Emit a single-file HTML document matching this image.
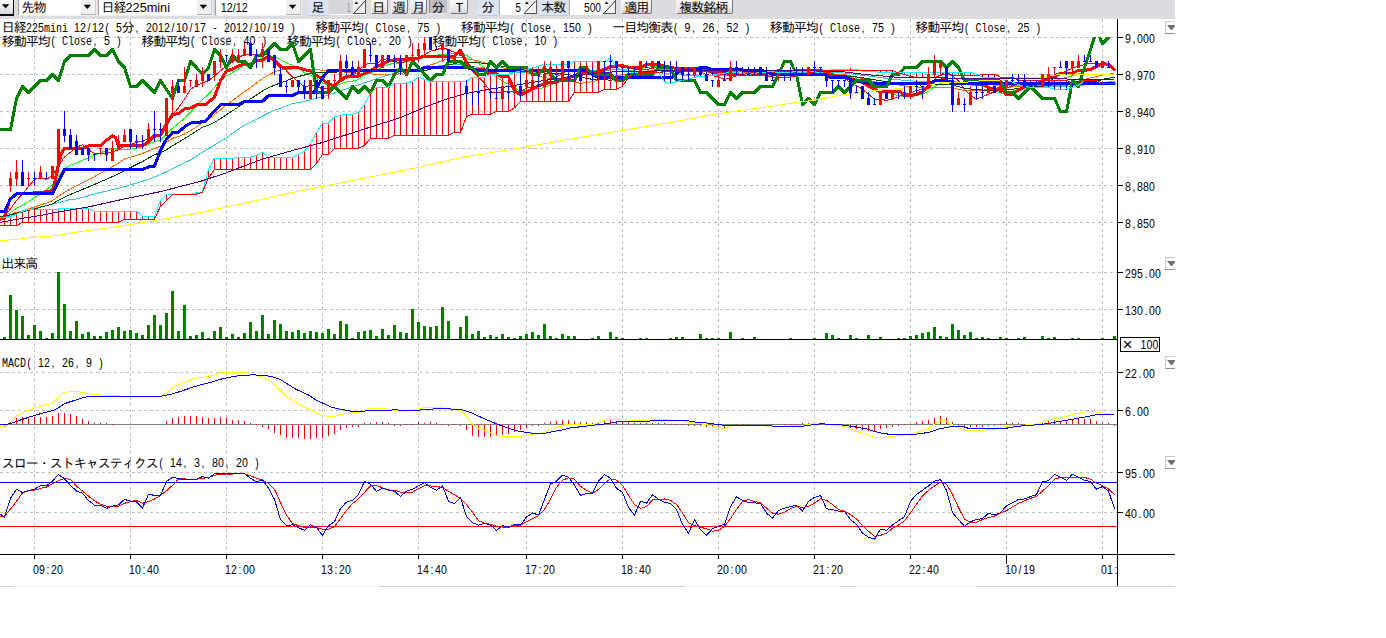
<!DOCTYPE html>
<html lang="ja"><head><meta charset="utf-8"><title>日経225mini チャート</title>
<style>html,body{margin:0;padding:0;background:#fff}body{width:1386px;height:638px;overflow:hidden}svg{display:block}</style>
</head><body>
<svg width="1386" height="638" viewBox="0 0 1386 638" shape-rendering="crispEdges">
<style>.la{font-family:"Liberation Mono",monospace;white-space:pre}.ls{font-family:"Liberation Sans",sans-serif}.cj{font-family:"Liberation Mono","IPAGothic","Noto Sans CJK JP",monospace}text{shape-rendering:auto}</style>
<rect x="0.0" y="0.0" width="1386.0" height="638.0" fill="#fff" />
<line x1="34.5" y1="19" x2="34.5" y2="554" stroke="#c0c0c0" stroke-width="1" stroke-dasharray="3 3"/>
<line x1="130.5" y1="19" x2="130.5" y2="554" stroke="#c0c0c0" stroke-width="1" stroke-dasharray="3 3"/>
<line x1="226.5" y1="19" x2="226.5" y2="554" stroke="#c0c0c0" stroke-width="1" stroke-dasharray="3 3"/>
<line x1="322.5" y1="19" x2="322.5" y2="554" stroke="#c0c0c0" stroke-width="1" stroke-dasharray="3 3"/>
<line x1="418.5" y1="19" x2="418.5" y2="554" stroke="#c0c0c0" stroke-width="1" stroke-dasharray="3 3"/>
<line x1="526.5" y1="19" x2="526.5" y2="554" stroke="#c0c0c0" stroke-width="1" stroke-dasharray="3 3"/>
<line x1="622.5" y1="19" x2="622.5" y2="554" stroke="#c0c0c0" stroke-width="1" stroke-dasharray="3 3"/>
<line x1="718.5" y1="19" x2="718.5" y2="554" stroke="#c0c0c0" stroke-width="1" stroke-dasharray="3 3"/>
<line x1="814.5" y1="19" x2="814.5" y2="554" stroke="#c0c0c0" stroke-width="1" stroke-dasharray="3 3"/>
<line x1="910.5" y1="19" x2="910.5" y2="554" stroke="#c0c0c0" stroke-width="1" stroke-dasharray="3 3"/>
<line x1="1006.5" y1="19" x2="1006.5" y2="554" stroke="#c0c0c0" stroke-width="1" stroke-dasharray="3 3"/>
<line x1="1102.5" y1="19" x2="1102.5" y2="554" stroke="#c0c0c0" stroke-width="1" stroke-dasharray="3 3"/>
<line x1="0" y1="37.5" x2="1117" y2="37.5" stroke="#c0c0c0" stroke-width="1" stroke-dasharray="3 3"/>
<line x1="0" y1="74.5" x2="1117" y2="74.5" stroke="#c0c0c0" stroke-width="1" stroke-dasharray="3 3"/>
<line x1="0" y1="111.5" x2="1117" y2="111.5" stroke="#c0c0c0" stroke-width="1" stroke-dasharray="3 3"/>
<line x1="0" y1="148.5" x2="1117" y2="148.5" stroke="#c0c0c0" stroke-width="1" stroke-dasharray="3 3"/>
<line x1="0" y1="185.5" x2="1117" y2="185.5" stroke="#c0c0c0" stroke-width="1" stroke-dasharray="3 3"/>
<line x1="0" y1="222.5" x2="1117" y2="222.5" stroke="#c0c0c0" stroke-width="1" stroke-dasharray="3 3"/>
<line x1="0" y1="272.5" x2="1117" y2="272.5" stroke="#c0c0c0" stroke-width="1" stroke-dasharray="3 3"/>
<line x1="0" y1="309.5" x2="1117" y2="309.5" stroke="#c0c0c0" stroke-width="1" stroke-dasharray="3 3"/>
<line x1="0" y1="372.5" x2="1117" y2="372.5" stroke="#c0c0c0" stroke-width="1" stroke-dasharray="3 3"/>
<line x1="0" y1="410.5" x2="1117" y2="410.5" stroke="#c0c0c0" stroke-width="1" stroke-dasharray="3 3"/>
<line x1="0" y1="472.5" x2="1117" y2="472.5" stroke="#c0c0c0" stroke-width="1" stroke-dasharray="3 3"/>
<line x1="0" y1="512.5" x2="1117" y2="512.5" stroke="#c0c0c0" stroke-width="1" stroke-dasharray="3 3"/>
<text x="1.7" y="32.2" font-size="13" letter-spacing="-1" fill="#000" class="cj">日経</text>
<text transform="translate(26.0,31.5) scale(0.88,1)" x="3.41 10.23 17.05" text-anchor="middle" font-size="12.0" fill="#000" class="ls">225</text>
<text transform="translate(44.0,31.5) scale(0.7692,1.0)" font-size="13" fill="#000" class="la">mini</text>
<text transform="translate(68.0,31.5) scale(0.88,1)" x="3.41 10.23 17.05 23.86 30.68 37.50 44.32 51.14 57.95" text-anchor="middle" font-size="12.0" fill="#000" class="ls"> 12/12( 5</text>
<text x="121.7" y="32.2" font-size="13" letter-spacing="-1" fill="#000" class="cj">分</text>
<text transform="translate(134.0,31.5) scale(0.88,1)" x="3.41 10.23 17.05 23.86 30.68 37.50 44.32 51.14 57.95 64.77 71.59 78.41 85.23 92.05 98.86 105.68 112.50 119.32 126.14 132.95 139.77 146.59 153.41 160.23 167.05 173.86 180.68" text-anchor="middle" font-size="12.0" fill="#000" class="ls">, 2012/10/17 - 2012/10/19 )</text>
<text x="315.2" y="32.2" font-size="13" letter-spacing="-1" fill="#000" class="cj">移動平均</text>
<text transform="translate(363.5,31.5) scale(0.88,1)" x="3.41 10.23" text-anchor="middle" font-size="12.0" fill="#000" class="ls">( </text>
<text transform="translate(375.5,31.5) scale(0.7692,1.0)" font-size="13" fill="#000" class="la">Close</text>
<text transform="translate(405.5,31.5) scale(0.88,1)" x="3.41 10.23 17.05 23.86 30.68 37.50" text-anchor="middle" font-size="12.0" fill="#000" class="ls">, 75 )</text>
<text x="460.7" y="32.2" font-size="13" letter-spacing="-1" fill="#000" class="cj">移動平均</text>
<text transform="translate(509.0,31.5) scale(0.88,1)" x="3.41 10.23" text-anchor="middle" font-size="12.0" fill="#000" class="ls">( </text>
<text transform="translate(521.0,31.5) scale(0.7692,1.0)" font-size="13" fill="#000" class="la">Close</text>
<text transform="translate(551.0,31.5) scale(0.88,1)" x="3.41 10.23 17.05 23.86 30.68 37.50 44.32" text-anchor="middle" font-size="12.0" fill="#000" class="ls">, 150 )</text>
<text x="612.2" y="32.2" font-size="13" letter-spacing="-1" fill="#000" class="cj">一目均衡表</text>
<text transform="translate(672.5,31.5) scale(0.88,1)" x="3.41 10.23 17.05 23.86 30.68 37.50 44.32 51.14 57.95 64.77 71.59 78.41 85.23" text-anchor="middle" font-size="12.0" fill="#000" class="ls">( 9, 26, 52 )</text>
<text x="769.7" y="32.2" font-size="13" letter-spacing="-1" fill="#000" class="cj">移動平均</text>
<text transform="translate(818.0,31.5) scale(0.88,1)" x="3.41 10.23" text-anchor="middle" font-size="12.0" fill="#000" class="ls">( </text>
<text transform="translate(830.0,31.5) scale(0.7692,1.0)" font-size="13" fill="#000" class="la">Close</text>
<text transform="translate(860.0,31.5) scale(0.88,1)" x="3.41 10.23 17.05 23.86 30.68 37.50" text-anchor="middle" font-size="12.0" fill="#000" class="ls">, 75 )</text>
<text x="915.2" y="32.2" font-size="13" letter-spacing="-1" fill="#000" class="cj">移動平均</text>
<text transform="translate(963.5,31.5) scale(0.88,1)" x="3.41 10.23" text-anchor="middle" font-size="12.0" fill="#000" class="ls">( </text>
<text transform="translate(975.5,31.5) scale(0.7692,1.0)" font-size="13" fill="#000" class="la">Close</text>
<text transform="translate(1005.5,31.5) scale(0.88,1)" x="3.41 10.23 17.05 23.86 30.68 37.50" text-anchor="middle" font-size="12.0" fill="#000" class="ls">, 25 )</text>
<text x="1.7" y="45.7" font-size="13" letter-spacing="-1" fill="#000" class="cj">移動平均</text>
<text transform="translate(50.0,45.0) scale(0.88,1)" x="3.41 10.23" text-anchor="middle" font-size="12.0" fill="#000" class="ls">( </text>
<text transform="translate(62.0,45.0) scale(0.7692,1.0)" font-size="13" fill="#000" class="la">Close</text>
<text transform="translate(92.0,45.0) scale(0.88,1)" x="3.41 10.23 17.05 23.86 30.68" text-anchor="middle" font-size="12.0" fill="#000" class="ls">, 5 )</text>
<text x="141.2" y="45.7" font-size="13" letter-spacing="-1" fill="#000" class="cj">移動平均</text>
<text transform="translate(189.5,45.0) scale(0.88,1)" x="3.41 10.23" text-anchor="middle" font-size="12.0" fill="#000" class="ls">( </text>
<text transform="translate(201.5,45.0) scale(0.7692,1.0)" font-size="13" fill="#000" class="la">Close</text>
<text transform="translate(231.5,45.0) scale(0.88,1)" x="3.41 10.23 17.05 23.86 30.68 37.50" text-anchor="middle" font-size="12.0" fill="#000" class="ls">, 40 )</text>
<text x="286.7" y="45.7" font-size="13" letter-spacing="-1" fill="#000" class="cj">移動平均</text>
<text transform="translate(335.0,45.0) scale(0.88,1)" x="3.41 10.23" text-anchor="middle" font-size="12.0" fill="#000" class="ls">( </text>
<text transform="translate(347.0,45.0) scale(0.7692,1.0)" font-size="13" fill="#000" class="la">Close</text>
<text transform="translate(377.0,45.0) scale(0.88,1)" x="3.41 10.23 17.05 23.86 30.68 37.50" text-anchor="middle" font-size="12.0" fill="#000" class="ls">, 20 )</text>
<text x="432.2" y="45.7" font-size="13" letter-spacing="-1" fill="#000" class="cj">移動平均</text>
<text transform="translate(480.5,45.0) scale(0.88,1)" x="3.41 10.23" text-anchor="middle" font-size="12.0" fill="#000" class="ls">( </text>
<text transform="translate(492.5,45.0) scale(0.7692,1.0)" font-size="13" fill="#000" class="la">Close</text>
<text transform="translate(522.5,45.0) scale(0.88,1)" x="3.41 10.23 17.05 23.86 30.68 37.50" text-anchor="middle" font-size="12.0" fill="#000" class="ls">, 10 )</text>
<text x="1.2" y="267.7" font-size="13" letter-spacing="-1" fill="#000" class="cj">出来高</text>
<text transform="translate(2.0,367.0) scale(0.7692,1.0)" font-size="13" fill="#000" class="la">MACD</text>
<text transform="translate(26.0,367.0) scale(0.88,1)" x="3.41 10.23 17.05 23.86 30.68 37.50 44.32 51.14 57.95 64.77 71.59 78.41 85.23" text-anchor="middle" font-size="12.0" fill="#000" class="ls">( 12, 26, 9 )</text>
<text x="1.7" y="467.7" font-size="13" letter-spacing="-1" fill="#000" class="cj">スロー・ストキャスティクス</text>
<text transform="translate(158.0,467.0) scale(0.88,1)" x="3.41 10.23 17.05 23.86 30.68 37.50 44.32 51.14 57.95 64.77 71.59 78.41 85.23 92.05 98.86 105.68 112.50" text-anchor="middle" font-size="12.0" fill="#000" class="ls">( 14, 3, 80, 20 )</text>
<defs><clipPath id="cm"><rect x="0" y="37" width="1117" height="214"/></clipPath></defs>
<g clip-path="url(#cm)">
<g shape-rendering="crispEdges" stroke-linejoin="round">
<polyline points="0.0,216.3 4.5,216.3 10.5,212.6 16.5,208.3 22.5,205.2 28.5,201.5 34.5,197.8 40.5,193.5 46.5,189.8 52.5,184.9 58.5,176.3 64.5,168.2 70.5,165.2 76.5,163.3 82.5,160.2 88.5,157.8 94.5,155.3 100.5,152.8 106.5,150.4 112.5,148.5 118.5,149.7 124.5,149.7 130.5,149.1 136.5,147.9 142.5,146.7 148.5,144.2 154.5,141.7 160.5,139.9 166.5,134.3 172.5,128.2 178.5,123.2 184.5,118.3 190.5,112.1 196.5,106.0 202.5,99.2 208.5,94.2 214.5,87.5 220.5,80.1 226.5,75.7 232.5,72.7 238.5,69.0 244.5,65.3 250.5,62.8 256.5,60.3 262.5,57.9 268.5,56.0 274.5,56.6 280.5,59.7 286.5,62.8 292.5,65.3 298.5,68.3 304.5,72.7 310.5,75.1 316.5,78.2 322.5,83.1 328.5,85.0 334.5,86.2 340.5,83.8 346.5,81.9 352.5,81.3 358.5,79.4 364.5,75.1 370.5,72.7 376.5,70.8 382.5,66.5 388.5,64.6 394.5,62.8 400.5,63.4 406.5,62.2 412.5,60.3 418.5,58.5 424.5,57.9 430.5,57.2 436.5,55.4 442.5,54.2 448.5,54.2 454.5,53.5 460.5,51.7 466.5,55.4 472.5,59.1 478.5,63.4 484.5,67.7 490.5,72.0 496.5,77.0 502.5,81.3 508.5,84.4 514.5,87.5 520.5,91.8 526.5,90.5 532.5,89.3 538.5,88.7 544.5,87.5 550.5,85.0 556.5,82.5 562.5,80.1 568.5,77.6 574.5,76.4 580.5,75.1 586.5,74.5 592.5,73.9 598.5,71.4 604.5,70.2 610.5,69.6 616.5,69.0 622.5,69.6 628.5,70.2 634.5,70.2 640.5,68.3 646.5,67.7 652.5,66.5 658.5,67.1 664.5,67.7 670.5,68.3 676.5,68.3 682.5,69.0 688.5,69.0 694.5,68.3 700.5,69.6 706.5,70.8 712.5,72.7 718.5,73.9 724.5,75.1 730.5,75.1 736.5,75.1 742.5,75.1 748.5,75.1 754.5,75.7 760.5,75.7 766.5,75.7 772.5,75.7 778.5,75.1 784.5,74.5 790.5,75.1 796.5,75.7 802.5,75.7 808.5,75.1 814.5,74.5 820.5,73.9 826.5,73.9 832.5,73.9 838.5,74.5 844.5,75.1 850.5,77.0 856.5,78.8 862.5,81.3 868.5,85.0 874.5,88.7 880.5,91.2 886.5,93.0 892.5,94.2 898.5,95.5 904.5,96.7 910.5,96.1 916.5,95.5 922.5,94.2 928.5,91.2 934.5,86.8 940.5,83.8 946.5,81.3 952.5,82.5 958.5,83.1 964.5,84.4 970.5,85.0 976.5,85.6 982.5,86.2 988.5,87.5 994.5,90.5 1000.5,93.0 1006.5,93.6 1012.5,91.2 1018.5,89.3 1024.5,87.5 1030.5,86.8 1036.5,86.2 1042.5,84.4 1048.5,83.1 1054.5,80.7 1060.5,78.8 1066.5,77.6 1072.5,75.7 1078.5,73.9 1084.5,71.4 1090.5,69.0 1096.5,67.1 1102.5,65.9 1108.5,65.3 1114.5,66.5" fill="none" stroke="#0f0" stroke-width="1" />
<polyline points="0.0,216.3 4.5,216.3 10.5,214.5 16.5,212.3 22.5,210.8 28.5,208.9 34.5,207.1 40.5,204.9 46.5,203.1 52.5,200.6 58.5,196.3 64.5,192.3 70.5,188.9 76.5,185.8 82.5,182.7 88.5,179.6 94.5,176.6 100.5,173.2 106.5,170.1 112.5,166.7 118.5,163.0 124.5,159.0 130.5,157.1 136.5,155.6 142.5,153.4 148.5,151.0 154.5,148.5 160.5,146.3 166.5,142.3 172.5,138.3 178.5,136.5 184.5,134.0 190.5,130.6 196.5,126.9 202.5,122.9 208.5,119.2 214.5,114.6 220.5,110.0 226.5,105.0 232.5,100.4 238.5,96.1 244.5,91.8 250.5,87.5 256.5,83.1 262.5,78.5 268.5,75.1 274.5,72.0 280.5,69.9 286.5,69.3 292.5,69.0 298.5,68.6 304.5,69.0 310.5,69.0 316.5,69.3 322.5,70.5 328.5,70.5 334.5,71.4 340.5,71.7 346.5,72.3 352.5,73.3 358.5,73.9 364.5,73.9 370.5,73.9 376.5,74.5 382.5,74.8 388.5,74.8 394.5,74.5 400.5,73.6 406.5,72.0 412.5,70.8 418.5,69.0 424.5,66.5 430.5,64.9 436.5,63.1 442.5,60.3 448.5,59.4 454.5,58.2 460.5,57.5 466.5,58.8 472.5,59.7 478.5,60.9 484.5,62.8 490.5,64.6 496.5,66.2 502.5,67.7 508.5,69.3 514.5,70.5 520.5,71.7 526.5,73.0 532.5,74.2 538.5,76.0 544.5,77.6 550.5,78.5 556.5,79.7 562.5,80.7 568.5,81.0 574.5,81.9 580.5,83.4 586.5,82.5 592.5,81.6 598.5,80.1 604.5,78.8 610.5,77.3 616.5,75.7 622.5,74.8 628.5,73.9 634.5,73.3 640.5,71.7 646.5,71.1 652.5,70.2 658.5,69.3 664.5,69.0 670.5,69.0 676.5,68.6 682.5,69.3 688.5,69.6 694.5,69.3 700.5,69.0 706.5,69.3 712.5,69.6 718.5,70.5 724.5,71.4 730.5,71.7 736.5,71.7 742.5,72.0 748.5,72.0 754.5,72.0 760.5,72.7 766.5,73.3 772.5,74.2 778.5,74.5 784.5,74.8 790.5,75.1 796.5,75.4 802.5,75.4 808.5,75.1 814.5,75.1 820.5,74.8 826.5,74.8 832.5,74.8 838.5,74.8 844.5,74.8 850.5,76.0 856.5,77.3 862.5,78.5 868.5,80.1 874.5,81.6 880.5,82.5 886.5,83.4 892.5,84.1 898.5,85.0 904.5,85.9 910.5,86.5 916.5,87.1 922.5,87.8 928.5,88.1 934.5,87.8 940.5,87.5 946.5,87.1 952.5,88.4 958.5,89.3 964.5,90.5 970.5,90.5 976.5,90.5 982.5,90.2 988.5,89.3 994.5,88.7 1000.5,88.4 1006.5,87.5 1012.5,86.8 1018.5,86.2 1024.5,85.9 1030.5,85.9 1036.5,85.9 1042.5,85.3 1048.5,85.3 1054.5,85.6 1060.5,85.9 1066.5,85.6 1072.5,83.4 1078.5,81.6 1084.5,79.4 1090.5,77.9 1096.5,76.7 1102.5,75.1 1108.5,74.2 1114.5,73.6" fill="none" stroke="#f60" stroke-width="1" />
<polyline points="0.0,217.8 4.3,217.3 13.0,215.5 22.5,210.8 34.5,208.3 50.5,204.7 68.5,200.0 76.5,199.0 100.4,192.5 124.5,186.7 148.5,179.5 160.5,174.4 172.6,168.7 190.5,160.0 200.0,153.7 226.4,137.8 238.5,129.0 244.5,125.4 250.5,122.3 256.5,119.4 262.5,116.0 268.5,113.0 274.5,110.3 280.5,108.1 286.5,105.8 292.5,103.6 298.5,102.6 304.5,101.5 310.5,99.8 316.5,98.1 322.5,96.7 328.5,94.9 334.5,93.0 340.5,90.8 346.5,88.7 352.5,86.8 358.5,85.0 364.5,82.8 370.5,80.7 376.5,78.8 382.5,76.7 388.5,75.0 394.5,73.3 400.5,71.7 406.5,70.6 412.5,69.9 418.5,68.8 424.5,67.7 430.5,66.9 436.5,66.2 442.5,65.4 448.5,64.9 454.5,64.8 460.5,64.6 466.5,65.6 472.5,66.5 478.5,67.4 484.5,68.3 490.5,69.3 496.5,70.3 502.5,71.3 508.5,72.0 514.5,72.5 520.5,72.7 526.5,72.5 532.5,72.5 538.5,72.5 544.5,72.0 550.5,71.7 556.5,71.4 562.5,70.5 568.5,70.2 574.5,70.0 580.5,70.5 586.5,70.6 592.5,70.6 598.5,70.5 604.5,70.8 610.5,71.0 616.5,71.0 622.5,71.3 628.5,71.6 634.5,71.9 640.5,71.7 646.5,72.0 652.5,72.2 658.5,72.7 664.5,73.3 670.5,73.7 676.5,74.2 682.5,75.0 688.5,75.3 694.5,75.6 700.5,76.2 706.5,75.9 712.5,75.6 718.5,75.3 724.5,75.1 730.5,74.5 736.5,73.7 742.5,73.4 748.5,73.0 754.5,72.7 760.5,72.2 766.5,72.2 772.5,72.2 778.5,71.9 784.5,71.9 790.5,72.0 796.5,72.0 802.5,72.3 808.5,72.3 814.5,72.2 820.5,71.9 826.5,72.0 832.5,72.2 838.5,72.7 844.5,73.1 850.5,73.9 856.5,74.5 862.5,75.3 868.5,76.0 874.5,76.8 880.5,77.6 886.5,78.4 892.5,79.1 898.5,79.7 904.5,80.4 910.5,80.8 916.5,81.3 922.5,81.6 928.5,81.6 934.5,81.4 940.5,81.1 946.5,81.0 952.5,81.6 958.5,82.1 964.5,82.7 970.5,83.3 976.5,83.9 982.5,84.4 988.5,84.7 994.5,85.1 1000.5,85.4 1006.5,85.4 1012.5,85.4 1018.5,85.6 1024.5,85.9 1030.5,86.2 1036.5,86.5 1042.5,86.5 1048.5,86.7 1054.5,86.7 1060.5,86.7 1066.5,86.4 1072.5,85.9 1078.5,85.4 1084.5,85.0 1090.5,84.2 1096.5,83.6 1102.5,82.7 1108.5,81.7 1114.5,81.1" fill="none" stroke="#3cc" stroke-width="1" />
<polyline points="0.0,216.3 4.5,216.3 10.5,208.9 16.5,200.3 22.5,194.1 28.5,186.7 34.5,179.3 40.5,178.1 46.5,179.3 52.5,175.6 58.5,165.8 64.5,157.1 70.5,152.2 76.5,147.3 82.5,144.8 88.5,149.7 94.5,153.4 100.5,153.4 106.5,153.4 112.5,152.2 118.5,149.7 124.5,146.0 130.5,144.8 136.5,142.3 142.5,141.1 148.5,138.6 154.5,137.4 160.5,134.9 166.5,126.3 172.5,115.2 178.5,107.8 184.5,99.2 190.5,89.3 196.5,85.6 202.5,83.1 208.5,80.7 214.5,75.7 220.5,70.8 226.5,65.9 232.5,62.2 238.5,57.2 244.5,54.8 250.5,54.8 256.5,54.8 262.5,53.5 268.5,54.8 274.5,58.5 280.5,64.6 286.5,70.8 292.5,77.0 298.5,81.9 304.5,86.8 310.5,85.6 316.5,85.6 322.5,89.3 328.5,88.1 334.5,85.6 340.5,81.9 346.5,78.2 352.5,73.3 358.5,70.8 364.5,64.6 370.5,63.4 376.5,63.4 382.5,59.7 388.5,58.5 394.5,60.9 400.5,63.4 406.5,60.9 412.5,60.9 418.5,58.5 424.5,54.8 430.5,51.1 436.5,49.8 442.5,47.4 448.5,49.8 454.5,52.3 460.5,52.3 466.5,60.9 472.5,70.8 478.5,77.0 484.5,83.1 490.5,91.8 496.5,93.0 502.5,91.8 508.5,91.8 514.5,91.8 520.5,91.8 526.5,88.1 532.5,86.8 538.5,85.6 544.5,83.1 550.5,78.2 556.5,77.0 562.5,73.3 568.5,69.6 574.5,69.6 580.5,72.0 586.5,72.0 592.5,74.5 598.5,73.3 604.5,70.8 610.5,67.1 616.5,65.9 622.5,64.6 628.5,67.1 634.5,69.6 640.5,69.6 646.5,69.6 652.5,68.3 658.5,67.1 664.5,65.9 670.5,67.1 676.5,67.1 682.5,69.6 688.5,70.8 694.5,70.8 700.5,72.0 706.5,74.5 712.5,75.7 718.5,77.0 724.5,79.4 730.5,78.2 736.5,75.7 742.5,74.5 748.5,73.3 754.5,72.0 760.5,73.3 766.5,75.7 772.5,77.0 778.5,77.0 784.5,77.0 790.5,77.0 796.5,75.7 802.5,74.5 808.5,73.3 814.5,72.0 820.5,70.8 826.5,72.0 832.5,73.3 838.5,75.7 844.5,78.2 850.5,83.1 856.5,85.6 862.5,89.3 868.5,94.2 874.5,99.2 880.5,99.2 886.5,100.4 892.5,99.2 898.5,96.7 904.5,94.2 910.5,93.0 916.5,90.5 922.5,89.3 928.5,85.6 934.5,79.4 940.5,74.5 946.5,72.0 952.5,75.7 958.5,80.7 964.5,89.3 970.5,95.5 976.5,99.2 982.5,96.7 988.5,94.2 994.5,91.8 1000.5,90.5 1006.5,88.1 1012.5,85.6 1018.5,84.4 1024.5,83.1 1030.5,83.1 1036.5,84.4 1042.5,83.1 1048.5,81.9 1054.5,78.2 1060.5,74.5 1066.5,70.8 1072.5,68.3 1078.5,65.9 1084.5,64.6 1090.5,63.4 1096.5,63.4 1102.5,63.4 1108.5,64.6 1114.5,68.3" fill="none" stroke="#f00" stroke-width="1" />
<polyline points="0.0,216.3 4.5,216.3 10.5,214.9 16.5,213.1 22.5,211.9 28.5,210.4 34.5,208.9 40.5,207.2 46.5,205.7 52.5,203.8 58.5,200.3 64.5,197.1 70.5,194.4 76.5,191.9 82.5,189.4 88.5,187.0 94.5,184.5 100.5,181.8 106.5,179.3 112.5,176.6 118.5,173.7 124.5,170.5 130.5,167.5 136.5,164.5 142.5,161.6 148.5,158.1 154.5,154.7 160.5,152.7 166.5,149.7 172.5,145.8 178.5,142.3 184.5,138.6 190.5,134.9 196.5,131.0 202.5,127.3 208.5,125.3 214.5,122.4 220.5,118.7 226.5,114.7 232.5,110.8 238.5,106.8 244.5,102.6 250.5,98.9 256.5,95.0 262.5,91.0 268.5,87.8 274.5,85.1 280.5,82.9 286.5,80.7 292.5,78.2 298.5,76.5 304.5,75.0 310.5,73.0 316.5,72.5 322.5,73.0 328.5,72.5 334.5,72.3 340.5,71.5 346.5,71.0 352.5,71.0 358.5,70.6 364.5,70.1 370.5,70.1 376.5,70.6 382.5,70.6 388.5,70.8 394.5,71.3 400.5,71.8 406.5,71.8 412.5,72.0 418.5,71.5 424.5,70.6 430.5,69.1 436.5,67.6 442.5,66.1 448.5,65.1 454.5,63.6 460.5,62.4 466.5,62.7 472.5,62.4 478.5,62.9 484.5,63.2 490.5,64.4 496.5,65.6 502.5,66.1 508.5,67.1 514.5,68.6 520.5,70.1 526.5,70.6 532.5,71.5 538.5,72.5 544.5,73.0 550.5,73.0 556.5,73.8 562.5,74.0 568.5,74.7 574.5,76.0 580.5,77.2 586.5,78.2 592.5,79.4 598.5,79.4 604.5,79.7 610.5,80.2 616.5,79.2 622.5,78.2 628.5,77.5 634.5,77.0 640.5,75.7 646.5,74.5 652.5,73.5 658.5,72.5 664.5,71.8 670.5,70.8 676.5,70.3 682.5,70.1 688.5,69.6 694.5,69.3 700.5,69.6 706.5,69.8 712.5,70.6 718.5,71.0 724.5,71.3 730.5,70.8 736.5,70.6 742.5,70.6 748.5,71.0 754.5,71.5 760.5,72.0 766.5,72.5 772.5,73.0 778.5,73.0 784.5,73.0 790.5,73.5 796.5,73.8 802.5,74.3 808.5,74.3 814.5,74.3 820.5,74.3 826.5,74.7 832.5,75.0 838.5,75.2 844.5,75.7 850.5,76.5 856.5,77.0 862.5,77.7 868.5,78.7 874.5,79.7 880.5,80.7 886.5,81.9 892.5,82.6 898.5,83.4 904.5,84.1 910.5,84.6 916.5,84.9 922.5,85.1 928.5,85.1 934.5,84.6 940.5,84.1 946.5,84.1 952.5,85.4 958.5,86.6 964.5,88.1 970.5,89.1 976.5,89.5 982.5,90.0 988.5,90.3 994.5,90.8 1000.5,90.5 1006.5,90.0 1012.5,89.3 1018.5,88.3 1024.5,87.6 1030.5,87.3 1036.5,86.8 1042.5,86.1 1048.5,85.4 1054.5,84.4 1060.5,83.6 1066.5,82.9 1072.5,81.9 1078.5,81.4 1084.5,81.4 1090.5,81.4 1096.5,81.2 1102.5,79.4 1108.5,78.2 1114.5,77.2" fill="none" stroke="#004800" stroke-width="1" />
</g>
<g shape-rendering="crispEdges" stroke-linejoin="round" stroke-linecap="butt">
<polyline points="0.0,219.0 4.0,218.5 10.0,199.0 16.0,194.0 42.0,192.5 52.5,190.5 55.0,181.0 58.5,163.5 62.0,152.0 64.5,148.3 82.5,148.3 88.5,145.9 100.5,145.9 106.5,140.4 112.5,135.8 115.4,137.5 118.5,145.9 142.6,145.9 148.5,141.8 154.5,135.4 160.5,135.4 166.5,123.8 172.6,114.4 178.5,113.7 184.7,108.9 190.5,107.9 196.2,105.0 200.0,104.3 205.8,104.3 208.6,102.1 214.4,97.1 220.5,80.5 226.4,71.1 232.5,69.0 238.5,66.1 244.4,63.9 250.5,64.6 256.4,61.0 262.5,60.3 268.4,56.0 274.5,61.0 280.5,66.8 286.4,67.8 298.6,67.8 304.5,69.7 310.5,71.1 316.4,75.5 322.5,79.1 328.4,84.1 334.5,85.6 340.5,80.5 346.5,76.2 358.4,76.2 364.5,73.3 370.4,71.1 376.5,66.8 382.5,63.9 388.5,61.0 394.5,59.6 400.0,59.6 418.5,58.1 424.5,56.0 454.5,56.0 460.5,50.2 466.5,62.5 472.4,69.7 484.4,69.7 488.0,73.3 496.5,74.0 502.5,76.9 508.5,76.9 514.4,90.6 520.5,95.0 526.4,92.0 532.5,89.2 538.5,85.6 544.4,84.1 550.5,82.0 556.4,82.0 562.5,79.8 568.5,77.6 574.5,76.2 580.5,73.8 591.4,73.8 598.6,70.9 604.5,69.5 610.5,66.6 616.5,66.2 622.5,65.5 628.5,67.3 640.5,67.3 646.5,64.4 658.5,64.4 664.5,66.2 670.5,67.3 676.5,68.4 697.0,68.4 700.0,70.2 706.5,70.6 712.5,72.4 724.5,73.4 730.3,74.9 765.0,74.9 769.3,71.6 778.6,70.9 784.5,71.6 810.0,70.2 820.5,70.2 826.5,73.0 832.5,77.0 844.5,77.6 850.5,79.0 856.5,80.5 862.5,82.3 868.5,86.0 874.5,89.0 878.6,91.3 900.0,91.6 904.5,95.4 910.5,95.4 916.5,94.6 922.5,91.7 928.5,86.7 934.5,80.9 944.7,79.5 952.5,83.4 982.5,84.2 988.5,87.4 994.5,89.9 1000.5,88.0 1006.5,94.5 1012.5,94.0 1018.5,90.0 1024.5,87.0 1030.5,85.5 1036.5,84.0 1042.5,81.0 1048.5,78.5 1054.5,76.0 1060.5,73.3 1072.5,73.3 1078.5,70.3 1084.5,70.3 1090.5,69.4 1096.5,66.4 1102.5,63.8 1108.5,64.2 1114.5,69.8" fill="none" stroke="#f00" stroke-width="3" />
<rect x="-1.0" y="219.0" width="3.0" height="1.0" fill="#f00" />
<rect x="0.0" y="218.0" width="1.0" height="3.0" fill="#f00" />
<rect x="3.0" y="218.0" width="3.0" height="1.0" fill="#f00" />
<rect x="4.0" y="217.0" width="1.0" height="3.0" fill="#f00" />
<rect x="9.0" y="199.0" width="3.0" height="1.0" fill="#f00" />
<rect x="10.0" y="198.0" width="1.0" height="3.0" fill="#f00" />
<rect x="15.0" y="194.0" width="3.0" height="1.0" fill="#f00" />
<rect x="16.0" y="193.0" width="1.0" height="3.0" fill="#f00" />
<rect x="41.0" y="192.0" width="3.0" height="1.0" fill="#f00" />
<rect x="42.0" y="191.0" width="1.0" height="3.0" fill="#f00" />
<rect x="51.0" y="190.0" width="3.0" height="1.0" fill="#f00" />
<rect x="52.0" y="189.0" width="1.0" height="3.0" fill="#f00" />
<rect x="54.0" y="181.0" width="3.0" height="1.0" fill="#f00" />
<rect x="55.0" y="180.0" width="1.0" height="3.0" fill="#f00" />
<rect x="57.0" y="163.0" width="3.0" height="1.0" fill="#f00" />
<rect x="58.0" y="162.0" width="1.0" height="3.0" fill="#f00" />
<rect x="61.0" y="152.0" width="3.0" height="1.0" fill="#f00" />
<rect x="62.0" y="151.0" width="1.0" height="3.0" fill="#f00" />
<rect x="63.0" y="148.0" width="3.0" height="1.0" fill="#f00" />
<rect x="64.0" y="147.0" width="1.0" height="3.0" fill="#f00" />
<rect x="81.0" y="148.0" width="3.0" height="1.0" fill="#f00" />
<rect x="82.0" y="147.0" width="1.0" height="3.0" fill="#f00" />
<rect x="87.0" y="145.0" width="3.0" height="1.0" fill="#f00" />
<rect x="88.0" y="144.0" width="1.0" height="3.0" fill="#f00" />
<rect x="99.0" y="145.0" width="3.0" height="1.0" fill="#f00" />
<rect x="100.0" y="144.0" width="1.0" height="3.0" fill="#f00" />
<rect x="105.0" y="140.0" width="3.0" height="1.0" fill="#f00" />
<rect x="106.0" y="139.0" width="1.0" height="3.0" fill="#f00" />
<rect x="111.0" y="135.0" width="3.0" height="1.0" fill="#f00" />
<rect x="112.0" y="134.0" width="1.0" height="3.0" fill="#f00" />
<rect x="114.0" y="137.0" width="3.0" height="1.0" fill="#f00" />
<rect x="115.0" y="136.0" width="1.0" height="3.0" fill="#f00" />
<rect x="117.0" y="145.0" width="3.0" height="1.0" fill="#f00" />
<rect x="118.0" y="144.0" width="1.0" height="3.0" fill="#f00" />
<rect x="141.0" y="145.0" width="3.0" height="1.0" fill="#f00" />
<rect x="142.0" y="144.0" width="1.0" height="3.0" fill="#f00" />
<rect x="147.0" y="141.0" width="3.0" height="1.0" fill="#f00" />
<rect x="148.0" y="140.0" width="1.0" height="3.0" fill="#f00" />
<rect x="153.0" y="135.0" width="3.0" height="1.0" fill="#f00" />
<rect x="154.0" y="134.0" width="1.0" height="3.0" fill="#f00" />
<rect x="159.0" y="135.0" width="3.0" height="1.0" fill="#f00" />
<rect x="160.0" y="134.0" width="1.0" height="3.0" fill="#f00" />
<rect x="165.0" y="123.0" width="3.0" height="1.0" fill="#f00" />
<rect x="166.0" y="122.0" width="1.0" height="3.0" fill="#f00" />
<rect x="171.0" y="114.0" width="3.0" height="1.0" fill="#f00" />
<rect x="172.0" y="113.0" width="1.0" height="3.0" fill="#f00" />
<rect x="177.0" y="113.0" width="3.0" height="1.0" fill="#f00" />
<rect x="178.0" y="112.0" width="1.0" height="3.0" fill="#f00" />
<rect x="183.0" y="108.0" width="3.0" height="1.0" fill="#f00" />
<rect x="184.0" y="107.0" width="1.0" height="3.0" fill="#f00" />
<rect x="189.0" y="107.0" width="3.0" height="1.0" fill="#f00" />
<rect x="190.0" y="106.0" width="1.0" height="3.0" fill="#f00" />
<rect x="195.0" y="105.0" width="3.0" height="1.0" fill="#f00" />
<rect x="196.0" y="104.0" width="1.0" height="3.0" fill="#f00" />
<rect x="199.0" y="104.0" width="3.0" height="1.0" fill="#f00" />
<rect x="200.0" y="103.0" width="1.0" height="3.0" fill="#f00" />
<rect x="204.0" y="104.0" width="3.0" height="1.0" fill="#f00" />
<rect x="205.0" y="103.0" width="1.0" height="3.0" fill="#f00" />
<rect x="207.0" y="102.0" width="3.0" height="1.0" fill="#f00" />
<rect x="208.0" y="101.0" width="1.0" height="3.0" fill="#f00" />
<rect x="213.0" y="97.0" width="3.0" height="1.0" fill="#f00" />
<rect x="214.0" y="96.0" width="1.0" height="3.0" fill="#f00" />
<rect x="219.0" y="80.0" width="3.0" height="1.0" fill="#f00" />
<rect x="220.0" y="79.0" width="1.0" height="3.0" fill="#f00" />
<rect x="225.0" y="71.0" width="3.0" height="1.0" fill="#f00" />
<rect x="226.0" y="70.0" width="1.0" height="3.0" fill="#f00" />
<rect x="231.0" y="69.0" width="3.0" height="1.0" fill="#f00" />
<rect x="232.0" y="68.0" width="1.0" height="3.0" fill="#f00" />
<rect x="237.0" y="66.0" width="3.0" height="1.0" fill="#f00" />
<rect x="238.0" y="65.0" width="1.0" height="3.0" fill="#f00" />
<rect x="243.0" y="63.0" width="3.0" height="1.0" fill="#f00" />
<rect x="244.0" y="62.0" width="1.0" height="3.0" fill="#f00" />
<rect x="249.0" y="64.0" width="3.0" height="1.0" fill="#f00" />
<rect x="250.0" y="63.0" width="1.0" height="3.0" fill="#f00" />
<rect x="255.0" y="61.0" width="3.0" height="1.0" fill="#f00" />
<rect x="256.0" y="60.0" width="1.0" height="3.0" fill="#f00" />
<rect x="261.0" y="60.0" width="3.0" height="1.0" fill="#f00" />
<rect x="262.0" y="59.0" width="1.0" height="3.0" fill="#f00" />
<rect x="267.0" y="56.0" width="3.0" height="1.0" fill="#f00" />
<rect x="268.0" y="55.0" width="1.0" height="3.0" fill="#f00" />
<rect x="273.0" y="61.0" width="3.0" height="1.0" fill="#f00" />
<rect x="274.0" y="60.0" width="1.0" height="3.0" fill="#f00" />
<rect x="279.0" y="66.0" width="3.0" height="1.0" fill="#f00" />
<rect x="280.0" y="65.0" width="1.0" height="3.0" fill="#f00" />
<rect x="285.0" y="67.0" width="3.0" height="1.0" fill="#f00" />
<rect x="286.0" y="66.0" width="1.0" height="3.0" fill="#f00" />
<rect x="297.0" y="67.0" width="3.0" height="1.0" fill="#f00" />
<rect x="298.0" y="66.0" width="1.0" height="3.0" fill="#f00" />
<rect x="303.0" y="69.0" width="3.0" height="1.0" fill="#f00" />
<rect x="304.0" y="68.0" width="1.0" height="3.0" fill="#f00" />
<rect x="309.0" y="71.0" width="3.0" height="1.0" fill="#f00" />
<rect x="310.0" y="70.0" width="1.0" height="3.0" fill="#f00" />
<rect x="315.0" y="75.0" width="3.0" height="1.0" fill="#f00" />
<rect x="316.0" y="74.0" width="1.0" height="3.0" fill="#f00" />
<rect x="321.0" y="79.0" width="3.0" height="1.0" fill="#f00" />
<rect x="322.0" y="78.0" width="1.0" height="3.0" fill="#f00" />
<rect x="327.0" y="84.0" width="3.0" height="1.0" fill="#f00" />
<rect x="328.0" y="83.0" width="1.0" height="3.0" fill="#f00" />
<rect x="333.0" y="85.0" width="3.0" height="1.0" fill="#f00" />
<rect x="334.0" y="84.0" width="1.0" height="3.0" fill="#f00" />
<rect x="339.0" y="80.0" width="3.0" height="1.0" fill="#f00" />
<rect x="340.0" y="79.0" width="1.0" height="3.0" fill="#f00" />
<rect x="345.0" y="76.0" width="3.0" height="1.0" fill="#f00" />
<rect x="346.0" y="75.0" width="1.0" height="3.0" fill="#f00" />
<rect x="357.0" y="76.0" width="3.0" height="1.0" fill="#f00" />
<rect x="358.0" y="75.0" width="1.0" height="3.0" fill="#f00" />
<rect x="363.0" y="73.0" width="3.0" height="1.0" fill="#f00" />
<rect x="364.0" y="72.0" width="1.0" height="3.0" fill="#f00" />
<rect x="369.0" y="71.0" width="3.0" height="1.0" fill="#f00" />
<rect x="370.0" y="70.0" width="1.0" height="3.0" fill="#f00" />
<rect x="375.0" y="66.0" width="3.0" height="1.0" fill="#f00" />
<rect x="376.0" y="65.0" width="1.0" height="3.0" fill="#f00" />
<rect x="381.0" y="63.0" width="3.0" height="1.0" fill="#f00" />
<rect x="382.0" y="62.0" width="1.0" height="3.0" fill="#f00" />
<rect x="387.0" y="61.0" width="3.0" height="1.0" fill="#f00" />
<rect x="388.0" y="60.0" width="1.0" height="3.0" fill="#f00" />
<rect x="393.0" y="59.0" width="3.0" height="1.0" fill="#f00" />
<rect x="394.0" y="58.0" width="1.0" height="3.0" fill="#f00" />
<rect x="399.0" y="59.0" width="3.0" height="1.0" fill="#f00" />
<rect x="400.0" y="58.0" width="1.0" height="3.0" fill="#f00" />
<rect x="417.0" y="58.0" width="3.0" height="1.0" fill="#f00" />
<rect x="418.0" y="57.0" width="1.0" height="3.0" fill="#f00" />
<rect x="423.0" y="56.0" width="3.0" height="1.0" fill="#f00" />
<rect x="424.0" y="55.0" width="1.0" height="3.0" fill="#f00" />
<rect x="453.0" y="56.0" width="3.0" height="1.0" fill="#f00" />
<rect x="454.0" y="55.0" width="1.0" height="3.0" fill="#f00" />
<rect x="459.0" y="50.0" width="3.0" height="1.0" fill="#f00" />
<rect x="460.0" y="49.0" width="1.0" height="3.0" fill="#f00" />
<rect x="465.0" y="62.0" width="3.0" height="1.0" fill="#f00" />
<rect x="466.0" y="61.0" width="1.0" height="3.0" fill="#f00" />
<rect x="471.0" y="69.0" width="3.0" height="1.0" fill="#f00" />
<rect x="472.0" y="68.0" width="1.0" height="3.0" fill="#f00" />
<rect x="483.0" y="69.0" width="3.0" height="1.0" fill="#f00" />
<rect x="484.0" y="68.0" width="1.0" height="3.0" fill="#f00" />
<rect x="487.0" y="73.0" width="3.0" height="1.0" fill="#f00" />
<rect x="488.0" y="72.0" width="1.0" height="3.0" fill="#f00" />
<rect x="495.0" y="74.0" width="3.0" height="1.0" fill="#f00" />
<rect x="496.0" y="73.0" width="1.0" height="3.0" fill="#f00" />
<rect x="501.0" y="76.0" width="3.0" height="1.0" fill="#f00" />
<rect x="502.0" y="75.0" width="1.0" height="3.0" fill="#f00" />
<rect x="507.0" y="76.0" width="3.0" height="1.0" fill="#f00" />
<rect x="508.0" y="75.0" width="1.0" height="3.0" fill="#f00" />
<rect x="513.0" y="90.0" width="3.0" height="1.0" fill="#f00" />
<rect x="514.0" y="89.0" width="1.0" height="3.0" fill="#f00" />
<rect x="519.0" y="95.0" width="3.0" height="1.0" fill="#f00" />
<rect x="520.0" y="94.0" width="1.0" height="3.0" fill="#f00" />
<rect x="525.0" y="92.0" width="3.0" height="1.0" fill="#f00" />
<rect x="526.0" y="91.0" width="1.0" height="3.0" fill="#f00" />
<rect x="531.0" y="89.0" width="3.0" height="1.0" fill="#f00" />
<rect x="532.0" y="88.0" width="1.0" height="3.0" fill="#f00" />
<rect x="537.0" y="85.0" width="3.0" height="1.0" fill="#f00" />
<rect x="538.0" y="84.0" width="1.0" height="3.0" fill="#f00" />
<rect x="543.0" y="84.0" width="3.0" height="1.0" fill="#f00" />
<rect x="544.0" y="83.0" width="1.0" height="3.0" fill="#f00" />
<rect x="549.0" y="82.0" width="3.0" height="1.0" fill="#f00" />
<rect x="550.0" y="81.0" width="1.0" height="3.0" fill="#f00" />
<rect x="555.0" y="82.0" width="3.0" height="1.0" fill="#f00" />
<rect x="556.0" y="81.0" width="1.0" height="3.0" fill="#f00" />
<rect x="561.0" y="79.0" width="3.0" height="1.0" fill="#f00" />
<rect x="562.0" y="78.0" width="1.0" height="3.0" fill="#f00" />
<rect x="567.0" y="77.0" width="3.0" height="1.0" fill="#f00" />
<rect x="568.0" y="76.0" width="1.0" height="3.0" fill="#f00" />
<rect x="573.0" y="76.0" width="3.0" height="1.0" fill="#f00" />
<rect x="574.0" y="75.0" width="1.0" height="3.0" fill="#f00" />
<rect x="579.0" y="73.0" width="3.0" height="1.0" fill="#f00" />
<rect x="580.0" y="72.0" width="1.0" height="3.0" fill="#f00" />
<rect x="590.0" y="73.0" width="3.0" height="1.0" fill="#f00" />
<rect x="591.0" y="72.0" width="1.0" height="3.0" fill="#f00" />
<rect x="597.0" y="70.0" width="3.0" height="1.0" fill="#f00" />
<rect x="598.0" y="69.0" width="1.0" height="3.0" fill="#f00" />
<rect x="603.0" y="69.0" width="3.0" height="1.0" fill="#f00" />
<rect x="604.0" y="68.0" width="1.0" height="3.0" fill="#f00" />
<rect x="609.0" y="66.0" width="3.0" height="1.0" fill="#f00" />
<rect x="610.0" y="65.0" width="1.0" height="3.0" fill="#f00" />
<rect x="615.0" y="66.0" width="3.0" height="1.0" fill="#f00" />
<rect x="616.0" y="65.0" width="1.0" height="3.0" fill="#f00" />
<rect x="621.0" y="65.0" width="3.0" height="1.0" fill="#f00" />
<rect x="622.0" y="64.0" width="1.0" height="3.0" fill="#f00" />
<rect x="627.0" y="67.0" width="3.0" height="1.0" fill="#f00" />
<rect x="628.0" y="66.0" width="1.0" height="3.0" fill="#f00" />
<rect x="639.0" y="67.0" width="3.0" height="1.0" fill="#f00" />
<rect x="640.0" y="66.0" width="1.0" height="3.0" fill="#f00" />
<rect x="645.0" y="64.0" width="3.0" height="1.0" fill="#f00" />
<rect x="646.0" y="63.0" width="1.0" height="3.0" fill="#f00" />
<rect x="657.0" y="64.0" width="3.0" height="1.0" fill="#f00" />
<rect x="658.0" y="63.0" width="1.0" height="3.0" fill="#f00" />
<rect x="663.0" y="66.0" width="3.0" height="1.0" fill="#f00" />
<rect x="664.0" y="65.0" width="1.0" height="3.0" fill="#f00" />
<rect x="669.0" y="67.0" width="3.0" height="1.0" fill="#f00" />
<rect x="670.0" y="66.0" width="1.0" height="3.0" fill="#f00" />
<rect x="675.0" y="68.0" width="3.0" height="1.0" fill="#f00" />
<rect x="676.0" y="67.0" width="1.0" height="3.0" fill="#f00" />
<rect x="696.0" y="68.0" width="3.0" height="1.0" fill="#f00" />
<rect x="697.0" y="67.0" width="1.0" height="3.0" fill="#f00" />
<rect x="699.0" y="70.0" width="3.0" height="1.0" fill="#f00" />
<rect x="700.0" y="69.0" width="1.0" height="3.0" fill="#f00" />
<rect x="705.0" y="70.0" width="3.0" height="1.0" fill="#f00" />
<rect x="706.0" y="69.0" width="1.0" height="3.0" fill="#f00" />
<rect x="711.0" y="72.0" width="3.0" height="1.0" fill="#f00" />
<rect x="712.0" y="71.0" width="1.0" height="3.0" fill="#f00" />
<rect x="723.0" y="73.0" width="3.0" height="1.0" fill="#f00" />
<rect x="724.0" y="72.0" width="1.0" height="3.0" fill="#f00" />
<rect x="729.0" y="74.0" width="3.0" height="1.0" fill="#f00" />
<rect x="730.0" y="73.0" width="1.0" height="3.0" fill="#f00" />
<rect x="764.0" y="74.0" width="3.0" height="1.0" fill="#f00" />
<rect x="765.0" y="73.0" width="1.0" height="3.0" fill="#f00" />
<rect x="768.0" y="71.0" width="3.0" height="1.0" fill="#f00" />
<rect x="769.0" y="70.0" width="1.0" height="3.0" fill="#f00" />
<rect x="777.0" y="70.0" width="3.0" height="1.0" fill="#f00" />
<rect x="778.0" y="69.0" width="1.0" height="3.0" fill="#f00" />
<rect x="783.0" y="71.0" width="3.0" height="1.0" fill="#f00" />
<rect x="784.0" y="70.0" width="1.0" height="3.0" fill="#f00" />
<rect x="809.0" y="70.0" width="3.0" height="1.0" fill="#f00" />
<rect x="810.0" y="69.0" width="1.0" height="3.0" fill="#f00" />
<rect x="819.0" y="70.0" width="3.0" height="1.0" fill="#f00" />
<rect x="820.0" y="69.0" width="1.0" height="3.0" fill="#f00" />
<rect x="825.0" y="73.0" width="3.0" height="1.0" fill="#f00" />
<rect x="826.0" y="72.0" width="1.0" height="3.0" fill="#f00" />
<rect x="831.0" y="77.0" width="3.0" height="1.0" fill="#f00" />
<rect x="832.0" y="76.0" width="1.0" height="3.0" fill="#f00" />
<rect x="843.0" y="77.0" width="3.0" height="1.0" fill="#f00" />
<rect x="844.0" y="76.0" width="1.0" height="3.0" fill="#f00" />
<rect x="849.0" y="79.0" width="3.0" height="1.0" fill="#f00" />
<rect x="850.0" y="78.0" width="1.0" height="3.0" fill="#f00" />
<rect x="855.0" y="80.0" width="3.0" height="1.0" fill="#f00" />
<rect x="856.0" y="79.0" width="1.0" height="3.0" fill="#f00" />
<rect x="861.0" y="82.0" width="3.0" height="1.0" fill="#f00" />
<rect x="862.0" y="81.0" width="1.0" height="3.0" fill="#f00" />
<rect x="867.0" y="86.0" width="3.0" height="1.0" fill="#f00" />
<rect x="868.0" y="85.0" width="1.0" height="3.0" fill="#f00" />
<rect x="873.0" y="89.0" width="3.0" height="1.0" fill="#f00" />
<rect x="874.0" y="88.0" width="1.0" height="3.0" fill="#f00" />
<rect x="877.0" y="91.0" width="3.0" height="1.0" fill="#f00" />
<rect x="878.0" y="90.0" width="1.0" height="3.0" fill="#f00" />
<rect x="899.0" y="91.0" width="3.0" height="1.0" fill="#f00" />
<rect x="900.0" y="90.0" width="1.0" height="3.0" fill="#f00" />
<rect x="903.0" y="95.0" width="3.0" height="1.0" fill="#f00" />
<rect x="904.0" y="94.0" width="1.0" height="3.0" fill="#f00" />
<rect x="909.0" y="95.0" width="3.0" height="1.0" fill="#f00" />
<rect x="910.0" y="94.0" width="1.0" height="3.0" fill="#f00" />
<rect x="915.0" y="94.0" width="3.0" height="1.0" fill="#f00" />
<rect x="916.0" y="93.0" width="1.0" height="3.0" fill="#f00" />
<rect x="921.0" y="91.0" width="3.0" height="1.0" fill="#f00" />
<rect x="922.0" y="90.0" width="1.0" height="3.0" fill="#f00" />
<rect x="927.0" y="86.0" width="3.0" height="1.0" fill="#f00" />
<rect x="928.0" y="85.0" width="1.0" height="3.0" fill="#f00" />
<rect x="933.0" y="80.0" width="3.0" height="1.0" fill="#f00" />
<rect x="934.0" y="79.0" width="1.0" height="3.0" fill="#f00" />
<rect x="943.0" y="79.0" width="3.0" height="1.0" fill="#f00" />
<rect x="944.0" y="78.0" width="1.0" height="3.0" fill="#f00" />
<rect x="951.0" y="83.0" width="3.0" height="1.0" fill="#f00" />
<rect x="952.0" y="82.0" width="1.0" height="3.0" fill="#f00" />
<rect x="981.0" y="84.0" width="3.0" height="1.0" fill="#f00" />
<rect x="982.0" y="83.0" width="1.0" height="3.0" fill="#f00" />
<rect x="987.0" y="87.0" width="3.0" height="1.0" fill="#f00" />
<rect x="988.0" y="86.0" width="1.0" height="3.0" fill="#f00" />
<rect x="993.0" y="89.0" width="3.0" height="1.0" fill="#f00" />
<rect x="994.0" y="88.0" width="1.0" height="3.0" fill="#f00" />
<rect x="999.0" y="88.0" width="3.0" height="1.0" fill="#f00" />
<rect x="1000.0" y="87.0" width="1.0" height="3.0" fill="#f00" />
<rect x="1005.0" y="94.0" width="3.0" height="1.0" fill="#f00" />
<rect x="1006.0" y="93.0" width="1.0" height="3.0" fill="#f00" />
<rect x="1011.0" y="94.0" width="3.0" height="1.0" fill="#f00" />
<rect x="1012.0" y="93.0" width="1.0" height="3.0" fill="#f00" />
<rect x="1017.0" y="90.0" width="3.0" height="1.0" fill="#f00" />
<rect x="1018.0" y="89.0" width="1.0" height="3.0" fill="#f00" />
<rect x="1023.0" y="87.0" width="3.0" height="1.0" fill="#f00" />
<rect x="1024.0" y="86.0" width="1.0" height="3.0" fill="#f00" />
<rect x="1029.0" y="85.0" width="3.0" height="1.0" fill="#f00" />
<rect x="1030.0" y="84.0" width="1.0" height="3.0" fill="#f00" />
<rect x="1035.0" y="84.0" width="3.0" height="1.0" fill="#f00" />
<rect x="1036.0" y="83.0" width="1.0" height="3.0" fill="#f00" />
<rect x="1041.0" y="81.0" width="3.0" height="1.0" fill="#f00" />
<rect x="1042.0" y="80.0" width="1.0" height="3.0" fill="#f00" />
<rect x="1047.0" y="78.0" width="3.0" height="1.0" fill="#f00" />
<rect x="1048.0" y="77.0" width="1.0" height="3.0" fill="#f00" />
<rect x="1053.0" y="76.0" width="3.0" height="1.0" fill="#f00" />
<rect x="1054.0" y="75.0" width="1.0" height="3.0" fill="#f00" />
<rect x="1059.0" y="73.0" width="3.0" height="1.0" fill="#f00" />
<rect x="1060.0" y="72.0" width="1.0" height="3.0" fill="#f00" />
<rect x="1071.0" y="73.0" width="3.0" height="1.0" fill="#f00" />
<rect x="1072.0" y="72.0" width="1.0" height="3.0" fill="#f00" />
<rect x="1077.0" y="70.0" width="3.0" height="1.0" fill="#f00" />
<rect x="1078.0" y="69.0" width="1.0" height="3.0" fill="#f00" />
<rect x="1083.0" y="70.0" width="3.0" height="1.0" fill="#f00" />
<rect x="1084.0" y="69.0" width="1.0" height="3.0" fill="#f00" />
<rect x="1089.0" y="69.0" width="3.0" height="1.0" fill="#f00" />
<rect x="1090.0" y="68.0" width="1.0" height="3.0" fill="#f00" />
<rect x="1095.0" y="66.0" width="3.0" height="1.0" fill="#f00" />
<rect x="1096.0" y="65.0" width="1.0" height="3.0" fill="#f00" />
<rect x="1101.0" y="63.0" width="3.0" height="1.0" fill="#f00" />
<rect x="1102.0" y="62.0" width="1.0" height="3.0" fill="#f00" />
<rect x="1107.0" y="64.0" width="3.0" height="1.0" fill="#f00" />
<rect x="1108.0" y="63.0" width="1.0" height="3.0" fill="#f00" />
<rect x="1113.0" y="69.0" width="3.0" height="1.0" fill="#f00" />
<rect x="1114.0" y="68.0" width="1.0" height="3.0" fill="#f00" />
<polyline points="0.0,211.7 4.3,211.7 10.4,199.0 16.5,193.9 52.5,193.9 58.4,181.6 64.5,169.4 142.6,169.4 148.5,167.0 154.5,166.0 160.5,150.5 166.5,139.0 172.6,132.5 178.5,132.0 184.7,126.7 190.5,123.1 200.0,122.0 205.8,121.0 214.4,110.8 220.5,104.7 238.5,104.7 244.4,101.4 262.5,101.4 268.4,95.7 292.5,95.7 298.6,92.3 314.0,92.3 316.4,88.4 322.5,77.6 328.4,70.5 418.5,70.5 424.5,67.5 466.5,67.5 472.5,69.0 478.5,70.5 586.4,70.5 592.0,74.0 598.6,77.8 672.0,77.6 676.5,73.5 682.5,70.0 694.5,70.0 700.5,67.7 706.5,67.7 712.5,69.7 760.0,70.2 766.5,71.6 772.5,74.5 825.3,74.5 830.3,77.6 847.0,77.6 852.0,80.1 863.5,82.3 872.0,83.7 928.5,83.4 934.5,80.9 944.7,80.6 950.5,81.6 952.5,83.4 1114.5,83.4" fill="none" stroke="#00f" stroke-width="3" />
<rect x="-1.0" y="211.0" width="3.0" height="1.0" fill="#00f" />
<rect x="0.0" y="210.0" width="1.0" height="3.0" fill="#00f" />
<rect x="3.0" y="211.0" width="3.0" height="1.0" fill="#00f" />
<rect x="4.0" y="210.0" width="1.0" height="3.0" fill="#00f" />
<rect x="9.0" y="199.0" width="3.0" height="1.0" fill="#00f" />
<rect x="10.0" y="198.0" width="1.0" height="3.0" fill="#00f" />
<rect x="15.0" y="193.0" width="3.0" height="1.0" fill="#00f" />
<rect x="16.0" y="192.0" width="1.0" height="3.0" fill="#00f" />
<rect x="51.0" y="193.0" width="3.0" height="1.0" fill="#00f" />
<rect x="52.0" y="192.0" width="1.0" height="3.0" fill="#00f" />
<rect x="57.0" y="181.0" width="3.0" height="1.0" fill="#00f" />
<rect x="58.0" y="180.0" width="1.0" height="3.0" fill="#00f" />
<rect x="63.0" y="169.0" width="3.0" height="1.0" fill="#00f" />
<rect x="64.0" y="168.0" width="1.0" height="3.0" fill="#00f" />
<rect x="141.0" y="169.0" width="3.0" height="1.0" fill="#00f" />
<rect x="142.0" y="168.0" width="1.0" height="3.0" fill="#00f" />
<rect x="147.0" y="167.0" width="3.0" height="1.0" fill="#00f" />
<rect x="148.0" y="166.0" width="1.0" height="3.0" fill="#00f" />
<rect x="153.0" y="166.0" width="3.0" height="1.0" fill="#00f" />
<rect x="154.0" y="165.0" width="1.0" height="3.0" fill="#00f" />
<rect x="159.0" y="150.0" width="3.0" height="1.0" fill="#00f" />
<rect x="160.0" y="149.0" width="1.0" height="3.0" fill="#00f" />
<rect x="165.0" y="139.0" width="3.0" height="1.0" fill="#00f" />
<rect x="166.0" y="138.0" width="1.0" height="3.0" fill="#00f" />
<rect x="171.0" y="132.0" width="3.0" height="1.0" fill="#00f" />
<rect x="172.0" y="131.0" width="1.0" height="3.0" fill="#00f" />
<rect x="177.0" y="132.0" width="3.0" height="1.0" fill="#00f" />
<rect x="178.0" y="131.0" width="1.0" height="3.0" fill="#00f" />
<rect x="183.0" y="126.0" width="3.0" height="1.0" fill="#00f" />
<rect x="184.0" y="125.0" width="1.0" height="3.0" fill="#00f" />
<rect x="189.0" y="123.0" width="3.0" height="1.0" fill="#00f" />
<rect x="190.0" y="122.0" width="1.0" height="3.0" fill="#00f" />
<rect x="199.0" y="122.0" width="3.0" height="1.0" fill="#00f" />
<rect x="200.0" y="121.0" width="1.0" height="3.0" fill="#00f" />
<rect x="204.0" y="121.0" width="3.0" height="1.0" fill="#00f" />
<rect x="205.0" y="120.0" width="1.0" height="3.0" fill="#00f" />
<rect x="213.0" y="110.0" width="3.0" height="1.0" fill="#00f" />
<rect x="214.0" y="109.0" width="1.0" height="3.0" fill="#00f" />
<rect x="219.0" y="104.0" width="3.0" height="1.0" fill="#00f" />
<rect x="220.0" y="103.0" width="1.0" height="3.0" fill="#00f" />
<rect x="237.0" y="104.0" width="3.0" height="1.0" fill="#00f" />
<rect x="238.0" y="103.0" width="1.0" height="3.0" fill="#00f" />
<rect x="243.0" y="101.0" width="3.0" height="1.0" fill="#00f" />
<rect x="244.0" y="100.0" width="1.0" height="3.0" fill="#00f" />
<rect x="261.0" y="101.0" width="3.0" height="1.0" fill="#00f" />
<rect x="262.0" y="100.0" width="1.0" height="3.0" fill="#00f" />
<rect x="267.0" y="95.0" width="3.0" height="1.0" fill="#00f" />
<rect x="268.0" y="94.0" width="1.0" height="3.0" fill="#00f" />
<rect x="291.0" y="95.0" width="3.0" height="1.0" fill="#00f" />
<rect x="292.0" y="94.0" width="1.0" height="3.0" fill="#00f" />
<rect x="297.0" y="92.0" width="3.0" height="1.0" fill="#00f" />
<rect x="298.0" y="91.0" width="1.0" height="3.0" fill="#00f" />
<rect x="313.0" y="92.0" width="3.0" height="1.0" fill="#00f" />
<rect x="314.0" y="91.0" width="1.0" height="3.0" fill="#00f" />
<rect x="315.0" y="88.0" width="3.0" height="1.0" fill="#00f" />
<rect x="316.0" y="87.0" width="1.0" height="3.0" fill="#00f" />
<rect x="321.0" y="77.0" width="3.0" height="1.0" fill="#00f" />
<rect x="322.0" y="76.0" width="1.0" height="3.0" fill="#00f" />
<rect x="327.0" y="70.0" width="3.0" height="1.0" fill="#00f" />
<rect x="328.0" y="69.0" width="1.0" height="3.0" fill="#00f" />
<rect x="417.0" y="70.0" width="3.0" height="1.0" fill="#00f" />
<rect x="418.0" y="69.0" width="1.0" height="3.0" fill="#00f" />
<rect x="423.0" y="67.0" width="3.0" height="1.0" fill="#00f" />
<rect x="424.0" y="66.0" width="1.0" height="3.0" fill="#00f" />
<rect x="465.0" y="67.0" width="3.0" height="1.0" fill="#00f" />
<rect x="466.0" y="66.0" width="1.0" height="3.0" fill="#00f" />
<rect x="471.0" y="69.0" width="3.0" height="1.0" fill="#00f" />
<rect x="472.0" y="68.0" width="1.0" height="3.0" fill="#00f" />
<rect x="477.0" y="70.0" width="3.0" height="1.0" fill="#00f" />
<rect x="478.0" y="69.0" width="1.0" height="3.0" fill="#00f" />
<rect x="585.0" y="70.0" width="3.0" height="1.0" fill="#00f" />
<rect x="586.0" y="69.0" width="1.0" height="3.0" fill="#00f" />
<rect x="591.0" y="74.0" width="3.0" height="1.0" fill="#00f" />
<rect x="592.0" y="73.0" width="1.0" height="3.0" fill="#00f" />
<rect x="597.0" y="77.0" width="3.0" height="1.0" fill="#00f" />
<rect x="598.0" y="76.0" width="1.0" height="3.0" fill="#00f" />
<rect x="671.0" y="77.0" width="3.0" height="1.0" fill="#00f" />
<rect x="672.0" y="76.0" width="1.0" height="3.0" fill="#00f" />
<rect x="675.0" y="73.0" width="3.0" height="1.0" fill="#00f" />
<rect x="676.0" y="72.0" width="1.0" height="3.0" fill="#00f" />
<rect x="681.0" y="70.0" width="3.0" height="1.0" fill="#00f" />
<rect x="682.0" y="69.0" width="1.0" height="3.0" fill="#00f" />
<rect x="693.0" y="70.0" width="3.0" height="1.0" fill="#00f" />
<rect x="694.0" y="69.0" width="1.0" height="3.0" fill="#00f" />
<rect x="699.0" y="67.0" width="3.0" height="1.0" fill="#00f" />
<rect x="700.0" y="66.0" width="1.0" height="3.0" fill="#00f" />
<rect x="705.0" y="67.0" width="3.0" height="1.0" fill="#00f" />
<rect x="706.0" y="66.0" width="1.0" height="3.0" fill="#00f" />
<rect x="711.0" y="69.0" width="3.0" height="1.0" fill="#00f" />
<rect x="712.0" y="68.0" width="1.0" height="3.0" fill="#00f" />
<rect x="759.0" y="70.0" width="3.0" height="1.0" fill="#00f" />
<rect x="760.0" y="69.0" width="1.0" height="3.0" fill="#00f" />
<rect x="765.0" y="71.0" width="3.0" height="1.0" fill="#00f" />
<rect x="766.0" y="70.0" width="1.0" height="3.0" fill="#00f" />
<rect x="771.0" y="74.0" width="3.0" height="1.0" fill="#00f" />
<rect x="772.0" y="73.0" width="1.0" height="3.0" fill="#00f" />
<rect x="824.0" y="74.0" width="3.0" height="1.0" fill="#00f" />
<rect x="825.0" y="73.0" width="1.0" height="3.0" fill="#00f" />
<rect x="829.0" y="77.0" width="3.0" height="1.0" fill="#00f" />
<rect x="830.0" y="76.0" width="1.0" height="3.0" fill="#00f" />
<rect x="846.0" y="77.0" width="3.0" height="1.0" fill="#00f" />
<rect x="847.0" y="76.0" width="1.0" height="3.0" fill="#00f" />
<rect x="851.0" y="80.0" width="3.0" height="1.0" fill="#00f" />
<rect x="852.0" y="79.0" width="1.0" height="3.0" fill="#00f" />
<rect x="862.0" y="82.0" width="3.0" height="1.0" fill="#00f" />
<rect x="863.0" y="81.0" width="1.0" height="3.0" fill="#00f" />
<rect x="871.0" y="83.0" width="3.0" height="1.0" fill="#00f" />
<rect x="872.0" y="82.0" width="1.0" height="3.0" fill="#00f" />
<rect x="927.0" y="83.0" width="3.0" height="1.0" fill="#00f" />
<rect x="928.0" y="82.0" width="1.0" height="3.0" fill="#00f" />
<rect x="933.0" y="80.0" width="3.0" height="1.0" fill="#00f" />
<rect x="934.0" y="79.0" width="1.0" height="3.0" fill="#00f" />
<rect x="943.0" y="80.0" width="3.0" height="1.0" fill="#00f" />
<rect x="944.0" y="79.0" width="1.0" height="3.0" fill="#00f" />
<rect x="949.0" y="81.0" width="3.0" height="1.0" fill="#00f" />
<rect x="950.0" y="80.0" width="1.0" height="3.0" fill="#00f" />
<rect x="951.0" y="83.0" width="3.0" height="1.0" fill="#00f" />
<rect x="952.0" y="82.0" width="1.0" height="3.0" fill="#00f" />
<rect x="1113.0" y="83.0" width="3.0" height="1.0" fill="#00f" />
<rect x="1114.0" y="82.0" width="1.0" height="3.0" fill="#00f" />
<polyline points="0.0,129.5 4.5,129.5 10.5,129.5 16.5,98.5 22.5,86.5 28.5,92.5 34.5,86.5 40.5,80.5 46.5,80.5 52.5,74.5 58.5,80.5 64.5,61.5 70.5,55.5 76.5,55.5 82.5,55.5 88.5,55.5 94.5,49.5 100.5,55.5 106.5,55.5 112.5,49.5 118.5,61.5 124.5,67.5 130.5,86.5 136.5,86.5 142.5,80.5 148.5,86.5 154.5,92.5 160.5,80.5 166.5,89.5 172.5,98.5 178.5,80.5 184.5,80.5 190.5,61.5 196.5,67.5 202.5,74.5 208.5,67.5 214.5,49.5 220.5,55.5 226.5,67.5 232.5,55.5 238.5,61.5 244.5,61.5 250.5,67.5 256.5,55.5 262.5,55.5 268.5,49.5 274.5,43.5 280.5,49.5 286.5,49.5 292.5,43.5 298.5,61.5 304.5,55.5 310.5,49.5 316.5,92.5 322.5,92.5 328.5,92.5 334.5,86.5 340.5,92.5 346.5,98.5 352.5,86.5 358.5,92.5 364.5,86.5 370.5,92.5 376.5,80.5 382.5,80.5 388.5,86.5 394.5,74.5 400.5,67.5 406.5,74.5 412.5,61.5 418.5,67.5 424.5,74.5 430.5,80.5 436.5,74.5 442.5,74.5 448.5,61.5 454.5,61.5 460.5,61.5 466.5,67.5 472.5,67.5 478.5,74.5 484.5,74.5 490.5,61.5 496.5,67.5 502.5,61.5 508.5,67.5 514.5,67.5 520.5,67.5 526.5,67.5 532.5,74.5 538.5,74.5 544.5,67.5 550.5,74.5 556.5,80.5 562.5,80.5 568.5,80.5 574.5,80.5 580.5,67.5 586.5,67.5 592.5,74.5 598.5,74.5 604.5,74.5 610.5,74.5 616.5,80.5 622.5,80.5 628.5,74.5 634.5,74.5 640.5,74.5 646.5,74.5 652.5,74.5 658.5,67.5 664.5,67.5 670.5,67.5 676.5,80.5 682.5,80.5 688.5,80.5 694.5,80.5 700.5,92.5 706.5,92.5 712.5,98.5 718.5,104.5 724.5,104.5 730.5,92.5 736.5,98.5 742.5,92.5 748.5,92.5 754.5,92.5 760.5,86.5 766.5,86.5 772.5,86.5 778.5,74.5 784.5,61.5 790.5,61.5 796.5,74.5 802.5,104.5 808.5,98.5 814.5,104.5 820.5,92.5 826.5,92.5 832.5,92.5 838.5,86.5 844.5,92.5 850.5,86.5 856.5,80.5 862.5,80.5 868.5,80.5 874.5,86.5 880.5,86.5 886.5,86.5 892.5,74.5 898.5,74.5 904.5,67.5 910.5,67.5 916.5,67.5 922.5,61.5 928.5,61.5 934.5,61.5 940.5,61.5 946.5,67.5 952.5,61.5 958.5,67.5 964.5,80.5 970.5,80.5 976.5,80.5 982.5,80.5 988.5,80.5 994.5,80.5 1000.5,80.5 1006.5,92.5 1012.5,92.5 1018.5,98.5 1024.5,92.5 1030.5,86.5 1036.5,92.5 1042.5,98.5 1048.5,98.5 1054.5,98.5 1060.5,111.5 1066.5,111.5 1072.5,80.5 1078.5,86.5 1084.5,67.5 1090.5,49.5 1096.5,30.5 1102.5,43.5 1108.5,37.5 1114.5,24.5" fill="none" stroke="#008000" stroke-width="3" />
<rect x="3.0" y="129.0" width="3.0" height="1.0" fill="#008000" />
<rect x="4.0" y="128.0" width="1.0" height="3.0" fill="#008000" />
<rect x="9.0" y="129.0" width="3.0" height="1.0" fill="#008000" />
<rect x="10.0" y="128.0" width="1.0" height="3.0" fill="#008000" />
<rect x="15.0" y="98.0" width="3.0" height="1.0" fill="#008000" />
<rect x="16.0" y="97.0" width="1.0" height="3.0" fill="#008000" />
<rect x="21.0" y="86.0" width="3.0" height="1.0" fill="#008000" />
<rect x="22.0" y="85.0" width="1.0" height="3.0" fill="#008000" />
<rect x="27.0" y="92.0" width="3.0" height="1.0" fill="#008000" />
<rect x="28.0" y="91.0" width="1.0" height="3.0" fill="#008000" />
<rect x="33.0" y="86.0" width="3.0" height="1.0" fill="#008000" />
<rect x="34.0" y="85.0" width="1.0" height="3.0" fill="#008000" />
<rect x="39.0" y="80.0" width="3.0" height="1.0" fill="#008000" />
<rect x="40.0" y="79.0" width="1.0" height="3.0" fill="#008000" />
<rect x="45.0" y="80.0" width="3.0" height="1.0" fill="#008000" />
<rect x="46.0" y="79.0" width="1.0" height="3.0" fill="#008000" />
<rect x="51.0" y="74.0" width="3.0" height="1.0" fill="#008000" />
<rect x="52.0" y="73.0" width="1.0" height="3.0" fill="#008000" />
<rect x="57.0" y="80.0" width="3.0" height="1.0" fill="#008000" />
<rect x="58.0" y="79.0" width="1.0" height="3.0" fill="#008000" />
<rect x="63.0" y="61.0" width="3.0" height="1.0" fill="#008000" />
<rect x="64.0" y="60.0" width="1.0" height="3.0" fill="#008000" />
<rect x="69.0" y="55.0" width="3.0" height="1.0" fill="#008000" />
<rect x="70.0" y="54.0" width="1.0" height="3.0" fill="#008000" />
<rect x="75.0" y="55.0" width="3.0" height="1.0" fill="#008000" />
<rect x="76.0" y="54.0" width="1.0" height="3.0" fill="#008000" />
<rect x="81.0" y="55.0" width="3.0" height="1.0" fill="#008000" />
<rect x="82.0" y="54.0" width="1.0" height="3.0" fill="#008000" />
<rect x="87.0" y="55.0" width="3.0" height="1.0" fill="#008000" />
<rect x="88.0" y="54.0" width="1.0" height="3.0" fill="#008000" />
<rect x="93.0" y="49.0" width="3.0" height="1.0" fill="#008000" />
<rect x="94.0" y="48.0" width="1.0" height="3.0" fill="#008000" />
<rect x="99.0" y="55.0" width="3.0" height="1.0" fill="#008000" />
<rect x="100.0" y="54.0" width="1.0" height="3.0" fill="#008000" />
<rect x="105.0" y="55.0" width="3.0" height="1.0" fill="#008000" />
<rect x="106.0" y="54.0" width="1.0" height="3.0" fill="#008000" />
<rect x="111.0" y="49.0" width="3.0" height="1.0" fill="#008000" />
<rect x="112.0" y="48.0" width="1.0" height="3.0" fill="#008000" />
<rect x="117.0" y="61.0" width="3.0" height="1.0" fill="#008000" />
<rect x="118.0" y="60.0" width="1.0" height="3.0" fill="#008000" />
<rect x="123.0" y="67.0" width="3.0" height="1.0" fill="#008000" />
<rect x="124.0" y="66.0" width="1.0" height="3.0" fill="#008000" />
<rect x="129.0" y="86.0" width="3.0" height="1.0" fill="#008000" />
<rect x="130.0" y="85.0" width="1.0" height="3.0" fill="#008000" />
<rect x="135.0" y="86.0" width="3.0" height="1.0" fill="#008000" />
<rect x="136.0" y="85.0" width="1.0" height="3.0" fill="#008000" />
<rect x="141.0" y="80.0" width="3.0" height="1.0" fill="#008000" />
<rect x="142.0" y="79.0" width="1.0" height="3.0" fill="#008000" />
<rect x="147.0" y="86.0" width="3.0" height="1.0" fill="#008000" />
<rect x="148.0" y="85.0" width="1.0" height="3.0" fill="#008000" />
<rect x="153.0" y="92.0" width="3.0" height="1.0" fill="#008000" />
<rect x="154.0" y="91.0" width="1.0" height="3.0" fill="#008000" />
<rect x="159.0" y="80.0" width="3.0" height="1.0" fill="#008000" />
<rect x="160.0" y="79.0" width="1.0" height="3.0" fill="#008000" />
<rect x="165.0" y="89.0" width="3.0" height="1.0" fill="#008000" />
<rect x="166.0" y="88.0" width="1.0" height="3.0" fill="#008000" />
<rect x="171.0" y="98.0" width="3.0" height="1.0" fill="#008000" />
<rect x="172.0" y="97.0" width="1.0" height="3.0" fill="#008000" />
<rect x="177.0" y="80.0" width="3.0" height="1.0" fill="#008000" />
<rect x="178.0" y="79.0" width="1.0" height="3.0" fill="#008000" />
<rect x="183.0" y="80.0" width="3.0" height="1.0" fill="#008000" />
<rect x="184.0" y="79.0" width="1.0" height="3.0" fill="#008000" />
<rect x="189.0" y="61.0" width="3.0" height="1.0" fill="#008000" />
<rect x="190.0" y="60.0" width="1.0" height="3.0" fill="#008000" />
<rect x="195.0" y="67.0" width="3.0" height="1.0" fill="#008000" />
<rect x="196.0" y="66.0" width="1.0" height="3.0" fill="#008000" />
<rect x="201.0" y="74.0" width="3.0" height="1.0" fill="#008000" />
<rect x="202.0" y="73.0" width="1.0" height="3.0" fill="#008000" />
<rect x="207.0" y="67.0" width="3.0" height="1.0" fill="#008000" />
<rect x="208.0" y="66.0" width="1.0" height="3.0" fill="#008000" />
<rect x="213.0" y="49.0" width="3.0" height="1.0" fill="#008000" />
<rect x="214.0" y="48.0" width="1.0" height="3.0" fill="#008000" />
<rect x="219.0" y="55.0" width="3.0" height="1.0" fill="#008000" />
<rect x="220.0" y="54.0" width="1.0" height="3.0" fill="#008000" />
<rect x="225.0" y="67.0" width="3.0" height="1.0" fill="#008000" />
<rect x="226.0" y="66.0" width="1.0" height="3.0" fill="#008000" />
<rect x="231.0" y="55.0" width="3.0" height="1.0" fill="#008000" />
<rect x="232.0" y="54.0" width="1.0" height="3.0" fill="#008000" />
<rect x="237.0" y="61.0" width="3.0" height="1.0" fill="#008000" />
<rect x="238.0" y="60.0" width="1.0" height="3.0" fill="#008000" />
<rect x="243.0" y="61.0" width="3.0" height="1.0" fill="#008000" />
<rect x="244.0" y="60.0" width="1.0" height="3.0" fill="#008000" />
<rect x="249.0" y="67.0" width="3.0" height="1.0" fill="#008000" />
<rect x="250.0" y="66.0" width="1.0" height="3.0" fill="#008000" />
<rect x="255.0" y="55.0" width="3.0" height="1.0" fill="#008000" />
<rect x="256.0" y="54.0" width="1.0" height="3.0" fill="#008000" />
<rect x="261.0" y="55.0" width="3.0" height="1.0" fill="#008000" />
<rect x="262.0" y="54.0" width="1.0" height="3.0" fill="#008000" />
<rect x="267.0" y="49.0" width="3.0" height="1.0" fill="#008000" />
<rect x="268.0" y="48.0" width="1.0" height="3.0" fill="#008000" />
<rect x="273.0" y="43.0" width="3.0" height="1.0" fill="#008000" />
<rect x="274.0" y="42.0" width="1.0" height="3.0" fill="#008000" />
<rect x="279.0" y="49.0" width="3.0" height="1.0" fill="#008000" />
<rect x="280.0" y="48.0" width="1.0" height="3.0" fill="#008000" />
<rect x="285.0" y="49.0" width="3.0" height="1.0" fill="#008000" />
<rect x="286.0" y="48.0" width="1.0" height="3.0" fill="#008000" />
<rect x="291.0" y="43.0" width="3.0" height="1.0" fill="#008000" />
<rect x="292.0" y="42.0" width="1.0" height="3.0" fill="#008000" />
<rect x="297.0" y="61.0" width="3.0" height="1.0" fill="#008000" />
<rect x="298.0" y="60.0" width="1.0" height="3.0" fill="#008000" />
<rect x="303.0" y="55.0" width="3.0" height="1.0" fill="#008000" />
<rect x="304.0" y="54.0" width="1.0" height="3.0" fill="#008000" />
<rect x="309.0" y="49.0" width="3.0" height="1.0" fill="#008000" />
<rect x="310.0" y="48.0" width="1.0" height="3.0" fill="#008000" />
<rect x="315.0" y="92.0" width="3.0" height="1.0" fill="#008000" />
<rect x="316.0" y="91.0" width="1.0" height="3.0" fill="#008000" />
<rect x="321.0" y="92.0" width="3.0" height="1.0" fill="#008000" />
<rect x="322.0" y="91.0" width="1.0" height="3.0" fill="#008000" />
<rect x="327.0" y="92.0" width="3.0" height="1.0" fill="#008000" />
<rect x="328.0" y="91.0" width="1.0" height="3.0" fill="#008000" />
<rect x="333.0" y="86.0" width="3.0" height="1.0" fill="#008000" />
<rect x="334.0" y="85.0" width="1.0" height="3.0" fill="#008000" />
<rect x="339.0" y="92.0" width="3.0" height="1.0" fill="#008000" />
<rect x="340.0" y="91.0" width="1.0" height="3.0" fill="#008000" />
<rect x="345.0" y="98.0" width="3.0" height="1.0" fill="#008000" />
<rect x="346.0" y="97.0" width="1.0" height="3.0" fill="#008000" />
<rect x="351.0" y="86.0" width="3.0" height="1.0" fill="#008000" />
<rect x="352.0" y="85.0" width="1.0" height="3.0" fill="#008000" />
<rect x="357.0" y="92.0" width="3.0" height="1.0" fill="#008000" />
<rect x="358.0" y="91.0" width="1.0" height="3.0" fill="#008000" />
<rect x="363.0" y="86.0" width="3.0" height="1.0" fill="#008000" />
<rect x="364.0" y="85.0" width="1.0" height="3.0" fill="#008000" />
<rect x="369.0" y="92.0" width="3.0" height="1.0" fill="#008000" />
<rect x="370.0" y="91.0" width="1.0" height="3.0" fill="#008000" />
<rect x="375.0" y="80.0" width="3.0" height="1.0" fill="#008000" />
<rect x="376.0" y="79.0" width="1.0" height="3.0" fill="#008000" />
<rect x="381.0" y="80.0" width="3.0" height="1.0" fill="#008000" />
<rect x="382.0" y="79.0" width="1.0" height="3.0" fill="#008000" />
<rect x="387.0" y="86.0" width="3.0" height="1.0" fill="#008000" />
<rect x="388.0" y="85.0" width="1.0" height="3.0" fill="#008000" />
<rect x="393.0" y="74.0" width="3.0" height="1.0" fill="#008000" />
<rect x="394.0" y="73.0" width="1.0" height="3.0" fill="#008000" />
<rect x="399.0" y="67.0" width="3.0" height="1.0" fill="#008000" />
<rect x="400.0" y="66.0" width="1.0" height="3.0" fill="#008000" />
<rect x="405.0" y="74.0" width="3.0" height="1.0" fill="#008000" />
<rect x="406.0" y="73.0" width="1.0" height="3.0" fill="#008000" />
<rect x="411.0" y="61.0" width="3.0" height="1.0" fill="#008000" />
<rect x="412.0" y="60.0" width="1.0" height="3.0" fill="#008000" />
<rect x="417.0" y="67.0" width="3.0" height="1.0" fill="#008000" />
<rect x="418.0" y="66.0" width="1.0" height="3.0" fill="#008000" />
<rect x="423.0" y="74.0" width="3.0" height="1.0" fill="#008000" />
<rect x="424.0" y="73.0" width="1.0" height="3.0" fill="#008000" />
<rect x="429.0" y="80.0" width="3.0" height="1.0" fill="#008000" />
<rect x="430.0" y="79.0" width="1.0" height="3.0" fill="#008000" />
<rect x="435.0" y="74.0" width="3.0" height="1.0" fill="#008000" />
<rect x="436.0" y="73.0" width="1.0" height="3.0" fill="#008000" />
<rect x="441.0" y="74.0" width="3.0" height="1.0" fill="#008000" />
<rect x="442.0" y="73.0" width="1.0" height="3.0" fill="#008000" />
<rect x="447.0" y="61.0" width="3.0" height="1.0" fill="#008000" />
<rect x="448.0" y="60.0" width="1.0" height="3.0" fill="#008000" />
<rect x="453.0" y="61.0" width="3.0" height="1.0" fill="#008000" />
<rect x="454.0" y="60.0" width="1.0" height="3.0" fill="#008000" />
<rect x="459.0" y="61.0" width="3.0" height="1.0" fill="#008000" />
<rect x="460.0" y="60.0" width="1.0" height="3.0" fill="#008000" />
<rect x="465.0" y="67.0" width="3.0" height="1.0" fill="#008000" />
<rect x="466.0" y="66.0" width="1.0" height="3.0" fill="#008000" />
<rect x="471.0" y="67.0" width="3.0" height="1.0" fill="#008000" />
<rect x="472.0" y="66.0" width="1.0" height="3.0" fill="#008000" />
<rect x="477.0" y="74.0" width="3.0" height="1.0" fill="#008000" />
<rect x="478.0" y="73.0" width="1.0" height="3.0" fill="#008000" />
<rect x="483.0" y="74.0" width="3.0" height="1.0" fill="#008000" />
<rect x="484.0" y="73.0" width="1.0" height="3.0" fill="#008000" />
<rect x="489.0" y="61.0" width="3.0" height="1.0" fill="#008000" />
<rect x="490.0" y="60.0" width="1.0" height="3.0" fill="#008000" />
<rect x="495.0" y="67.0" width="3.0" height="1.0" fill="#008000" />
<rect x="496.0" y="66.0" width="1.0" height="3.0" fill="#008000" />
<rect x="501.0" y="61.0" width="3.0" height="1.0" fill="#008000" />
<rect x="502.0" y="60.0" width="1.0" height="3.0" fill="#008000" />
<rect x="507.0" y="67.0" width="3.0" height="1.0" fill="#008000" />
<rect x="508.0" y="66.0" width="1.0" height="3.0" fill="#008000" />
<rect x="513.0" y="67.0" width="3.0" height="1.0" fill="#008000" />
<rect x="514.0" y="66.0" width="1.0" height="3.0" fill="#008000" />
<rect x="519.0" y="67.0" width="3.0" height="1.0" fill="#008000" />
<rect x="520.0" y="66.0" width="1.0" height="3.0" fill="#008000" />
<rect x="525.0" y="67.0" width="3.0" height="1.0" fill="#008000" />
<rect x="526.0" y="66.0" width="1.0" height="3.0" fill="#008000" />
<rect x="531.0" y="74.0" width="3.0" height="1.0" fill="#008000" />
<rect x="532.0" y="73.0" width="1.0" height="3.0" fill="#008000" />
<rect x="537.0" y="74.0" width="3.0" height="1.0" fill="#008000" />
<rect x="538.0" y="73.0" width="1.0" height="3.0" fill="#008000" />
<rect x="543.0" y="67.0" width="3.0" height="1.0" fill="#008000" />
<rect x="544.0" y="66.0" width="1.0" height="3.0" fill="#008000" />
<rect x="549.0" y="74.0" width="3.0" height="1.0" fill="#008000" />
<rect x="550.0" y="73.0" width="1.0" height="3.0" fill="#008000" />
<rect x="555.0" y="80.0" width="3.0" height="1.0" fill="#008000" />
<rect x="556.0" y="79.0" width="1.0" height="3.0" fill="#008000" />
<rect x="561.0" y="80.0" width="3.0" height="1.0" fill="#008000" />
<rect x="562.0" y="79.0" width="1.0" height="3.0" fill="#008000" />
<rect x="567.0" y="80.0" width="3.0" height="1.0" fill="#008000" />
<rect x="568.0" y="79.0" width="1.0" height="3.0" fill="#008000" />
<rect x="573.0" y="80.0" width="3.0" height="1.0" fill="#008000" />
<rect x="574.0" y="79.0" width="1.0" height="3.0" fill="#008000" />
<rect x="579.0" y="67.0" width="3.0" height="1.0" fill="#008000" />
<rect x="580.0" y="66.0" width="1.0" height="3.0" fill="#008000" />
<rect x="585.0" y="67.0" width="3.0" height="1.0" fill="#008000" />
<rect x="586.0" y="66.0" width="1.0" height="3.0" fill="#008000" />
<rect x="591.0" y="74.0" width="3.0" height="1.0" fill="#008000" />
<rect x="592.0" y="73.0" width="1.0" height="3.0" fill="#008000" />
<rect x="597.0" y="74.0" width="3.0" height="1.0" fill="#008000" />
<rect x="598.0" y="73.0" width="1.0" height="3.0" fill="#008000" />
<rect x="603.0" y="74.0" width="3.0" height="1.0" fill="#008000" />
<rect x="604.0" y="73.0" width="1.0" height="3.0" fill="#008000" />
<rect x="609.0" y="74.0" width="3.0" height="1.0" fill="#008000" />
<rect x="610.0" y="73.0" width="1.0" height="3.0" fill="#008000" />
<rect x="615.0" y="80.0" width="3.0" height="1.0" fill="#008000" />
<rect x="616.0" y="79.0" width="1.0" height="3.0" fill="#008000" />
<rect x="621.0" y="80.0" width="3.0" height="1.0" fill="#008000" />
<rect x="622.0" y="79.0" width="1.0" height="3.0" fill="#008000" />
<rect x="627.0" y="74.0" width="3.0" height="1.0" fill="#008000" />
<rect x="628.0" y="73.0" width="1.0" height="3.0" fill="#008000" />
<rect x="633.0" y="74.0" width="3.0" height="1.0" fill="#008000" />
<rect x="634.0" y="73.0" width="1.0" height="3.0" fill="#008000" />
<rect x="639.0" y="74.0" width="3.0" height="1.0" fill="#008000" />
<rect x="640.0" y="73.0" width="1.0" height="3.0" fill="#008000" />
<rect x="645.0" y="74.0" width="3.0" height="1.0" fill="#008000" />
<rect x="646.0" y="73.0" width="1.0" height="3.0" fill="#008000" />
<rect x="651.0" y="74.0" width="3.0" height="1.0" fill="#008000" />
<rect x="652.0" y="73.0" width="1.0" height="3.0" fill="#008000" />
<rect x="657.0" y="67.0" width="3.0" height="1.0" fill="#008000" />
<rect x="658.0" y="66.0" width="1.0" height="3.0" fill="#008000" />
<rect x="663.0" y="67.0" width="3.0" height="1.0" fill="#008000" />
<rect x="664.0" y="66.0" width="1.0" height="3.0" fill="#008000" />
<rect x="669.0" y="67.0" width="3.0" height="1.0" fill="#008000" />
<rect x="670.0" y="66.0" width="1.0" height="3.0" fill="#008000" />
<rect x="675.0" y="80.0" width="3.0" height="1.0" fill="#008000" />
<rect x="676.0" y="79.0" width="1.0" height="3.0" fill="#008000" />
<rect x="681.0" y="80.0" width="3.0" height="1.0" fill="#008000" />
<rect x="682.0" y="79.0" width="1.0" height="3.0" fill="#008000" />
<rect x="687.0" y="80.0" width="3.0" height="1.0" fill="#008000" />
<rect x="688.0" y="79.0" width="1.0" height="3.0" fill="#008000" />
<rect x="693.0" y="80.0" width="3.0" height="1.0" fill="#008000" />
<rect x="694.0" y="79.0" width="1.0" height="3.0" fill="#008000" />
<rect x="699.0" y="92.0" width="3.0" height="1.0" fill="#008000" />
<rect x="700.0" y="91.0" width="1.0" height="3.0" fill="#008000" />
<rect x="705.0" y="92.0" width="3.0" height="1.0" fill="#008000" />
<rect x="706.0" y="91.0" width="1.0" height="3.0" fill="#008000" />
<rect x="711.0" y="98.0" width="3.0" height="1.0" fill="#008000" />
<rect x="712.0" y="97.0" width="1.0" height="3.0" fill="#008000" />
<rect x="717.0" y="104.0" width="3.0" height="1.0" fill="#008000" />
<rect x="718.0" y="103.0" width="1.0" height="3.0" fill="#008000" />
<rect x="723.0" y="104.0" width="3.0" height="1.0" fill="#008000" />
<rect x="724.0" y="103.0" width="1.0" height="3.0" fill="#008000" />
<rect x="729.0" y="92.0" width="3.0" height="1.0" fill="#008000" />
<rect x="730.0" y="91.0" width="1.0" height="3.0" fill="#008000" />
<rect x="735.0" y="98.0" width="3.0" height="1.0" fill="#008000" />
<rect x="736.0" y="97.0" width="1.0" height="3.0" fill="#008000" />
<rect x="741.0" y="92.0" width="3.0" height="1.0" fill="#008000" />
<rect x="742.0" y="91.0" width="1.0" height="3.0" fill="#008000" />
<rect x="747.0" y="92.0" width="3.0" height="1.0" fill="#008000" />
<rect x="748.0" y="91.0" width="1.0" height="3.0" fill="#008000" />
<rect x="753.0" y="92.0" width="3.0" height="1.0" fill="#008000" />
<rect x="754.0" y="91.0" width="1.0" height="3.0" fill="#008000" />
<rect x="759.0" y="86.0" width="3.0" height="1.0" fill="#008000" />
<rect x="760.0" y="85.0" width="1.0" height="3.0" fill="#008000" />
<rect x="765.0" y="86.0" width="3.0" height="1.0" fill="#008000" />
<rect x="766.0" y="85.0" width="1.0" height="3.0" fill="#008000" />
<rect x="771.0" y="86.0" width="3.0" height="1.0" fill="#008000" />
<rect x="772.0" y="85.0" width="1.0" height="3.0" fill="#008000" />
<rect x="777.0" y="74.0" width="3.0" height="1.0" fill="#008000" />
<rect x="778.0" y="73.0" width="1.0" height="3.0" fill="#008000" />
<rect x="783.0" y="61.0" width="3.0" height="1.0" fill="#008000" />
<rect x="784.0" y="60.0" width="1.0" height="3.0" fill="#008000" />
<rect x="789.0" y="61.0" width="3.0" height="1.0" fill="#008000" />
<rect x="790.0" y="60.0" width="1.0" height="3.0" fill="#008000" />
<rect x="795.0" y="74.0" width="3.0" height="1.0" fill="#008000" />
<rect x="796.0" y="73.0" width="1.0" height="3.0" fill="#008000" />
<rect x="801.0" y="104.0" width="3.0" height="1.0" fill="#008000" />
<rect x="802.0" y="103.0" width="1.0" height="3.0" fill="#008000" />
<rect x="807.0" y="98.0" width="3.0" height="1.0" fill="#008000" />
<rect x="808.0" y="97.0" width="1.0" height="3.0" fill="#008000" />
<rect x="813.0" y="104.0" width="3.0" height="1.0" fill="#008000" />
<rect x="814.0" y="103.0" width="1.0" height="3.0" fill="#008000" />
<rect x="819.0" y="92.0" width="3.0" height="1.0" fill="#008000" />
<rect x="820.0" y="91.0" width="1.0" height="3.0" fill="#008000" />
<rect x="825.0" y="92.0" width="3.0" height="1.0" fill="#008000" />
<rect x="826.0" y="91.0" width="1.0" height="3.0" fill="#008000" />
<rect x="831.0" y="92.0" width="3.0" height="1.0" fill="#008000" />
<rect x="832.0" y="91.0" width="1.0" height="3.0" fill="#008000" />
<rect x="837.0" y="86.0" width="3.0" height="1.0" fill="#008000" />
<rect x="838.0" y="85.0" width="1.0" height="3.0" fill="#008000" />
<rect x="843.0" y="92.0" width="3.0" height="1.0" fill="#008000" />
<rect x="844.0" y="91.0" width="1.0" height="3.0" fill="#008000" />
<rect x="849.0" y="86.0" width="3.0" height="1.0" fill="#008000" />
<rect x="850.0" y="85.0" width="1.0" height="3.0" fill="#008000" />
<rect x="855.0" y="80.0" width="3.0" height="1.0" fill="#008000" />
<rect x="856.0" y="79.0" width="1.0" height="3.0" fill="#008000" />
<rect x="861.0" y="80.0" width="3.0" height="1.0" fill="#008000" />
<rect x="862.0" y="79.0" width="1.0" height="3.0" fill="#008000" />
<rect x="867.0" y="80.0" width="3.0" height="1.0" fill="#008000" />
<rect x="868.0" y="79.0" width="1.0" height="3.0" fill="#008000" />
<rect x="873.0" y="86.0" width="3.0" height="1.0" fill="#008000" />
<rect x="874.0" y="85.0" width="1.0" height="3.0" fill="#008000" />
<rect x="879.0" y="86.0" width="3.0" height="1.0" fill="#008000" />
<rect x="880.0" y="85.0" width="1.0" height="3.0" fill="#008000" />
<rect x="885.0" y="86.0" width="3.0" height="1.0" fill="#008000" />
<rect x="886.0" y="85.0" width="1.0" height="3.0" fill="#008000" />
<rect x="891.0" y="74.0" width="3.0" height="1.0" fill="#008000" />
<rect x="892.0" y="73.0" width="1.0" height="3.0" fill="#008000" />
<rect x="897.0" y="74.0" width="3.0" height="1.0" fill="#008000" />
<rect x="898.0" y="73.0" width="1.0" height="3.0" fill="#008000" />
<rect x="903.0" y="67.0" width="3.0" height="1.0" fill="#008000" />
<rect x="904.0" y="66.0" width="1.0" height="3.0" fill="#008000" />
<rect x="909.0" y="67.0" width="3.0" height="1.0" fill="#008000" />
<rect x="910.0" y="66.0" width="1.0" height="3.0" fill="#008000" />
<rect x="915.0" y="67.0" width="3.0" height="1.0" fill="#008000" />
<rect x="916.0" y="66.0" width="1.0" height="3.0" fill="#008000" />
<rect x="921.0" y="61.0" width="3.0" height="1.0" fill="#008000" />
<rect x="922.0" y="60.0" width="1.0" height="3.0" fill="#008000" />
<rect x="927.0" y="61.0" width="3.0" height="1.0" fill="#008000" />
<rect x="928.0" y="60.0" width="1.0" height="3.0" fill="#008000" />
<rect x="933.0" y="61.0" width="3.0" height="1.0" fill="#008000" />
<rect x="934.0" y="60.0" width="1.0" height="3.0" fill="#008000" />
<rect x="939.0" y="61.0" width="3.0" height="1.0" fill="#008000" />
<rect x="940.0" y="60.0" width="1.0" height="3.0" fill="#008000" />
<rect x="945.0" y="67.0" width="3.0" height="1.0" fill="#008000" />
<rect x="946.0" y="66.0" width="1.0" height="3.0" fill="#008000" />
<rect x="951.0" y="61.0" width="3.0" height="1.0" fill="#008000" />
<rect x="952.0" y="60.0" width="1.0" height="3.0" fill="#008000" />
<rect x="957.0" y="67.0" width="3.0" height="1.0" fill="#008000" />
<rect x="958.0" y="66.0" width="1.0" height="3.0" fill="#008000" />
<rect x="963.0" y="80.0" width="3.0" height="1.0" fill="#008000" />
<rect x="964.0" y="79.0" width="1.0" height="3.0" fill="#008000" />
<rect x="969.0" y="80.0" width="3.0" height="1.0" fill="#008000" />
<rect x="970.0" y="79.0" width="1.0" height="3.0" fill="#008000" />
<rect x="975.0" y="80.0" width="3.0" height="1.0" fill="#008000" />
<rect x="976.0" y="79.0" width="1.0" height="3.0" fill="#008000" />
<rect x="981.0" y="80.0" width="3.0" height="1.0" fill="#008000" />
<rect x="982.0" y="79.0" width="1.0" height="3.0" fill="#008000" />
<rect x="987.0" y="80.0" width="3.0" height="1.0" fill="#008000" />
<rect x="988.0" y="79.0" width="1.0" height="3.0" fill="#008000" />
<rect x="993.0" y="80.0" width="3.0" height="1.0" fill="#008000" />
<rect x="994.0" y="79.0" width="1.0" height="3.0" fill="#008000" />
<rect x="999.0" y="80.0" width="3.0" height="1.0" fill="#008000" />
<rect x="1000.0" y="79.0" width="1.0" height="3.0" fill="#008000" />
<rect x="1005.0" y="92.0" width="3.0" height="1.0" fill="#008000" />
<rect x="1006.0" y="91.0" width="1.0" height="3.0" fill="#008000" />
<rect x="1011.0" y="92.0" width="3.0" height="1.0" fill="#008000" />
<rect x="1012.0" y="91.0" width="1.0" height="3.0" fill="#008000" />
<rect x="1017.0" y="98.0" width="3.0" height="1.0" fill="#008000" />
<rect x="1018.0" y="97.0" width="1.0" height="3.0" fill="#008000" />
<rect x="1023.0" y="92.0" width="3.0" height="1.0" fill="#008000" />
<rect x="1024.0" y="91.0" width="1.0" height="3.0" fill="#008000" />
<rect x="1029.0" y="86.0" width="3.0" height="1.0" fill="#008000" />
<rect x="1030.0" y="85.0" width="1.0" height="3.0" fill="#008000" />
<rect x="1035.0" y="92.0" width="3.0" height="1.0" fill="#008000" />
<rect x="1036.0" y="91.0" width="1.0" height="3.0" fill="#008000" />
<rect x="1041.0" y="98.0" width="3.0" height="1.0" fill="#008000" />
<rect x="1042.0" y="97.0" width="1.0" height="3.0" fill="#008000" />
<rect x="1047.0" y="98.0" width="3.0" height="1.0" fill="#008000" />
<rect x="1048.0" y="97.0" width="1.0" height="3.0" fill="#008000" />
<rect x="1053.0" y="98.0" width="3.0" height="1.0" fill="#008000" />
<rect x="1054.0" y="97.0" width="1.0" height="3.0" fill="#008000" />
<rect x="1059.0" y="111.0" width="3.0" height="1.0" fill="#008000" />
<rect x="1060.0" y="110.0" width="1.0" height="3.0" fill="#008000" />
<rect x="1065.0" y="111.0" width="3.0" height="1.0" fill="#008000" />
<rect x="1066.0" y="110.0" width="1.0" height="3.0" fill="#008000" />
<rect x="1071.0" y="80.0" width="3.0" height="1.0" fill="#008000" />
<rect x="1072.0" y="79.0" width="1.0" height="3.0" fill="#008000" />
<rect x="1077.0" y="86.0" width="3.0" height="1.0" fill="#008000" />
<rect x="1078.0" y="85.0" width="1.0" height="3.0" fill="#008000" />
<rect x="1083.0" y="67.0" width="3.0" height="1.0" fill="#008000" />
<rect x="1084.0" y="66.0" width="1.0" height="3.0" fill="#008000" />
<rect x="1089.0" y="49.0" width="3.0" height="1.0" fill="#008000" />
<rect x="1090.0" y="48.0" width="1.0" height="3.0" fill="#008000" />
<rect x="1095.0" y="30.0" width="3.0" height="1.0" fill="#008000" />
<rect x="1096.0" y="29.0" width="1.0" height="3.0" fill="#008000" />
<rect x="1101.0" y="43.0" width="3.0" height="1.0" fill="#008000" />
<rect x="1102.0" y="42.0" width="1.0" height="3.0" fill="#008000" />
<rect x="1107.0" y="37.0" width="3.0" height="1.0" fill="#008000" />
<rect x="1108.0" y="36.0" width="1.0" height="3.0" fill="#008000" />
<rect x="1113.0" y="24.0" width="3.0" height="1.0" fill="#008000" />
<rect x="1114.0" y="23.0" width="1.0" height="3.0" fill="#008000" />
</g>
<rect x="4.0" y="217.0" width="1.0" height="9.0" fill="#f00" />
<rect x="10.0" y="217.0" width="1.0" height="9.0" fill="#f00" />
<rect x="16.0" y="214.0" width="1.0" height="12.0" fill="#f00" />
<rect x="22.0" y="211.0" width="1.0" height="12.0" fill="#f00" />
<rect x="28.0" y="209.0" width="1.0" height="14.0" fill="#f00" />
<rect x="34.0" y="209.0" width="1.0" height="14.0" fill="#f00" />
<rect x="40.0" y="209.0" width="1.0" height="14.0" fill="#f00" />
<rect x="46.0" y="209.0" width="1.0" height="14.0" fill="#f00" />
<rect x="52.0" y="209.0" width="1.0" height="14.0" fill="#f00" />
<rect x="58.0" y="209.0" width="1.0" height="14.0" fill="#f00" />
<rect x="64.0" y="208.0" width="1.0" height="15.0" fill="#f00" />
<rect x="70.0" y="208.0" width="1.0" height="15.0" fill="#f00" />
<rect x="76.0" y="208.0" width="1.0" height="15.0" fill="#f00" />
<rect x="82.0" y="208.0" width="1.0" height="15.0" fill="#f00" />
<rect x="88.0" y="208.0" width="1.0" height="15.0" fill="#f00" />
<rect x="94.0" y="211.0" width="1.0" height="12.0" fill="#f00" />
<rect x="100.0" y="211.0" width="1.0" height="12.0" fill="#f00" />
<rect x="106.0" y="211.0" width="1.0" height="12.0" fill="#f00" />
<rect x="112.0" y="211.0" width="1.0" height="12.0" fill="#f00" />
<rect x="118.0" y="211.0" width="1.0" height="12.0" fill="#f00" />
<rect x="124.0" y="211.0" width="1.0" height="9.0" fill="#f00" />
<rect x="130.0" y="211.0" width="1.0" height="9.0" fill="#f00" />
<rect x="136.0" y="211.0" width="1.0" height="9.0" fill="#f00" />
<rect x="142.0" y="216.0" width="1.0" height="4.0" fill="#f00" />
<rect x="148.0" y="216.0" width="1.0" height="4.0" fill="#f00" />
<rect x="154.0" y="216.0" width="1.0" height="4.0" fill="#f00" />
<rect x="160.0" y="200.0" width="1.0" height="7.0" fill="#f00" />
<rect x="166.0" y="194.0" width="1.0" height="7.0" fill="#f00" />
<rect x="196.0" y="192.0" width="1.0" height="3.0" fill="#f00" />
<rect x="208.0" y="169.0" width="1.0" height="9.0" fill="#f00" />
<rect x="214.0" y="158.0" width="1.0" height="12.0" fill="#f00" />
<rect x="220.0" y="158.0" width="1.0" height="12.0" fill="#f00" />
<rect x="226.0" y="158.0" width="1.0" height="12.0" fill="#f00" />
<rect x="232.0" y="158.0" width="1.0" height="12.0" fill="#f00" />
<rect x="238.0" y="157.0" width="1.0" height="13.0" fill="#f00" />
<rect x="244.0" y="157.0" width="1.0" height="13.0" fill="#f00" />
<rect x="250.0" y="157.0" width="1.0" height="13.0" fill="#f00" />
<rect x="256.0" y="155.0" width="1.0" height="15.0" fill="#f00" />
<rect x="262.0" y="152.0" width="1.0" height="18.0" fill="#f00" />
<rect x="268.0" y="157.0" width="1.0" height="13.0" fill="#f00" />
<rect x="274.0" y="157.0" width="1.0" height="13.0" fill="#f00" />
<rect x="280.0" y="157.0" width="1.0" height="13.0" fill="#f00" />
<rect x="286.0" y="157.0" width="1.0" height="13.0" fill="#f00" />
<rect x="292.0" y="157.0" width="1.0" height="13.0" fill="#f00" />
<rect x="298.0" y="154.0" width="1.0" height="16.0" fill="#f00" />
<rect x="304.0" y="151.0" width="1.0" height="19.0" fill="#f00" />
<rect x="310.0" y="143.0" width="1.0" height="27.0" fill="#f00" />
<rect x="316.0" y="132.0" width="1.0" height="32.0" fill="#f00" />
<rect x="322.0" y="123.0" width="1.0" height="32.0" fill="#f00" />
<rect x="328.0" y="123.0" width="1.0" height="32.0" fill="#f00" />
<rect x="334.0" y="117.0" width="1.0" height="32.0" fill="#f00" />
<rect x="340.0" y="115.0" width="1.0" height="34.0" fill="#f00" />
<rect x="346.0" y="114.0" width="1.0" height="35.0" fill="#f00" />
<rect x="352.0" y="114.0" width="1.0" height="35.0" fill="#f00" />
<rect x="358.0" y="112.0" width="1.0" height="37.0" fill="#f00" />
<rect x="364.0" y="104.0" width="1.0" height="42.0" fill="#f00" />
<rect x="370.0" y="93.0" width="1.0" height="46.0" fill="#f00" />
<rect x="376.0" y="87.0" width="1.0" height="52.0" fill="#f00" />
<rect x="382.0" y="87.0" width="1.0" height="52.0" fill="#f00" />
<rect x="388.0" y="87.0" width="1.0" height="52.0" fill="#f00" />
<rect x="394.0" y="83.0" width="1.0" height="53.0" fill="#f00" />
<rect x="400.0" y="83.0" width="1.0" height="53.0" fill="#f00" />
<rect x="406.0" y="83.0" width="1.0" height="53.0" fill="#f00" />
<rect x="412.0" y="81.0" width="1.0" height="55.0" fill="#f00" />
<rect x="418.0" y="77.0" width="1.0" height="59.0" fill="#f00" />
<rect x="424.0" y="79.0" width="1.0" height="57.0" fill="#f00" />
<rect x="430.0" y="81.0" width="1.0" height="55.0" fill="#f00" />
<rect x="436.0" y="81.0" width="1.0" height="55.0" fill="#f00" />
<rect x="442.0" y="81.0" width="1.0" height="55.0" fill="#f00" />
<rect x="448.0" y="81.0" width="1.0" height="55.0" fill="#f00" />
<rect x="454.0" y="81.0" width="1.0" height="52.0" fill="#f00" />
<rect x="460.0" y="81.0" width="1.0" height="52.0" fill="#f00" />
<rect x="466.0" y="81.0" width="1.0" height="36.0" fill="#f00" />
<rect x="472.0" y="77.0" width="1.0" height="38.0" fill="#f00" />
<rect x="478.0" y="77.0" width="1.0" height="38.0" fill="#f00" />
<rect x="484.0" y="77.0" width="1.0" height="38.0" fill="#f00" />
<rect x="490.0" y="74.0" width="1.0" height="41.0" fill="#f00" />
<rect x="496.0" y="74.0" width="1.0" height="38.0" fill="#f00" />
<rect x="502.0" y="74.0" width="1.0" height="38.0" fill="#f00" />
<rect x="508.0" y="74.0" width="1.0" height="38.0" fill="#f00" />
<rect x="514.0" y="72.0" width="1.0" height="36.0" fill="#f00" />
<rect x="520.0" y="70.0" width="1.0" height="32.0" fill="#f00" />
<rect x="526.0" y="69.0" width="1.0" height="33.0" fill="#f00" />
<rect x="532.0" y="68.0" width="1.0" height="34.0" fill="#f00" />
<rect x="538.0" y="66.0" width="1.0" height="36.0" fill="#f00" />
<rect x="544.0" y="64.0" width="1.0" height="38.0" fill="#f00" />
<rect x="550.0" y="64.0" width="1.0" height="38.0" fill="#f00" />
<rect x="556.0" y="64.0" width="1.0" height="38.0" fill="#f00" />
<rect x="562.0" y="64.0" width="1.0" height="38.0" fill="#f00" />
<rect x="568.0" y="64.0" width="1.0" height="38.0" fill="#f00" />
<rect x="574.0" y="61.0" width="1.0" height="32.0" fill="#f00" />
<rect x="580.0" y="61.0" width="1.0" height="32.0" fill="#f00" />
<rect x="586.0" y="61.0" width="1.0" height="32.0" fill="#f00" />
<rect x="592.0" y="61.0" width="1.0" height="32.0" fill="#f00" />
<rect x="598.0" y="61.0" width="1.0" height="32.0" fill="#f00" />
<rect x="604.0" y="61.0" width="1.0" height="29.0" fill="#f00" />
<rect x="610.0" y="57.0" width="1.0" height="33.0" fill="#f00" />
<rect x="616.0" y="68.0" width="1.0" height="22.0" fill="#f00" />
<rect x="622.0" y="69.0" width="1.0" height="18.0" fill="#f00" />
<rect x="628.0" y="71.0" width="1.0" height="7.0" fill="#f00" />
<rect x="634.0" y="72.0" width="1.0" height="3.0" fill="#f00" />
<rect x="664.0" y="71.0" width="1.0" height="11.0" fill="#00f" />
<rect x="670.0" y="71.0" width="1.0" height="13.0" fill="#00f" />
<rect x="676.0" y="71.0" width="1.0" height="11.0" fill="#00f" />
<rect x="682.0" y="71.0" width="1.0" height="10.0" fill="#00f" />
<rect x="688.0" y="71.0" width="1.0" height="8.0" fill="#00f" />
<rect x="694.0" y="71.0" width="1.0" height="7.0" fill="#00f" />
<rect x="700.0" y="71.0" width="1.0" height="6.0" fill="#00f" />
<rect x="706.0" y="71.0" width="1.0" height="6.0" fill="#00f" />
<rect x="712.0" y="71.0" width="1.0" height="5.0" fill="#00f" />
<rect x="718.0" y="71.0" width="1.0" height="4.0" fill="#00f" />
<rect x="724.0" y="70.0" width="1.0" height="4.0" fill="#00f" />
<rect x="730.0" y="70.0" width="1.0" height="3.0" fill="#00f" />
<rect x="736.0" y="70.0" width="1.0" height="3.0" fill="#00f" />
<rect x="742.0" y="70.0" width="1.0" height="4.0" fill="#00f" />
<rect x="748.0" y="70.0" width="1.0" height="5.0" fill="#00f" />
<rect x="754.0" y="70.0" width="1.0" height="4.0" fill="#00f" />
<rect x="760.0" y="70.0" width="1.0" height="3.0" fill="#00f" />
<rect x="766.0" y="70.0" width="1.0" height="2.0" fill="#00f" />
<rect x="772.0" y="70.0" width="1.0" height="2.0" fill="#00f" />
<rect x="778.0" y="70.0" width="1.0" height="3.0" fill="#00f" />
<rect x="784.0" y="70.0" width="1.0" height="3.0" fill="#00f" />
<rect x="790.0" y="70.0" width="1.0" height="3.0" fill="#00f" />
<rect x="796.0" y="70.0" width="1.0" height="2.0" fill="#00f" />
<rect x="802.0" y="70.0" width="1.0" height="2.0" fill="#00f" />
<rect x="808.0" y="70.0" width="1.0" height="2.0" fill="#00f" />
<rect x="814.0" y="70.0" width="1.0" height="2.0" fill="#00f" />
<rect x="820.0" y="70.0" width="1.0" height="3.0" fill="#00f" />
<rect x="832.0" y="69.0" width="1.0" height="2.0" fill="#f00" />
<rect x="838.0" y="69.0" width="1.0" height="2.0" fill="#f00" />
<rect x="844.0" y="69.0" width="1.0" height="2.0" fill="#f00" />
<rect x="850.0" y="68.0" width="1.0" height="3.0" fill="#f00" />
<rect x="856.0" y="69.0" width="1.0" height="2.0" fill="#f00" />
<rect x="862.0" y="70.0" width="1.0" height="2.0" fill="#00f" />
<rect x="868.0" y="70.0" width="1.0" height="2.0" fill="#00f" />
<rect x="874.0" y="70.0" width="1.0" height="2.0" fill="#00f" />
<rect x="880.0" y="70.0" width="1.0" height="3.0" fill="#00f" />
<rect x="886.0" y="70.0" width="1.0" height="3.0" fill="#00f" />
<rect x="892.0" y="70.0" width="1.0" height="3.0" fill="#00f" />
<rect x="904.0" y="72.0" width="1.0" height="3.0" fill="#f00" />
<rect x="910.0" y="72.0" width="1.0" height="5.0" fill="#f00" />
<rect x="916.0" y="72.0" width="1.0" height="6.0" fill="#f00" />
<rect x="922.0" y="72.0" width="1.0" height="6.0" fill="#f00" />
<rect x="928.0" y="72.0" width="1.0" height="6.0" fill="#f00" />
<rect x="934.0" y="73.0" width="1.0" height="5.0" fill="#f00" />
<rect x="940.0" y="72.0" width="1.0" height="4.0" fill="#f00" />
<rect x="946.0" y="72.0" width="1.0" height="3.0" fill="#f00" />
<rect x="952.0" y="72.0" width="1.0" height="4.0" fill="#f00" />
<rect x="958.0" y="72.0" width="1.0" height="4.0" fill="#f00" />
<rect x="964.0" y="72.0" width="1.0" height="4.0" fill="#f00" />
<rect x="970.0" y="72.0" width="1.0" height="4.0" fill="#f00" />
<rect x="976.0" y="74.0" width="1.0" height="2.0" fill="#f00" />
<rect x="982.0" y="74.0" width="1.0" height="4.0" fill="#00f" />
<rect x="988.0" y="74.0" width="1.0" height="4.0" fill="#00f" />
<rect x="994.0" y="74.0" width="1.0" height="4.0" fill="#00f" />
<rect x="1000.0" y="77.0" width="1.0" height="3.0" fill="#00f" />
<rect x="1006.0" y="77.0" width="1.0" height="4.0" fill="#00f" />
<rect x="1012.0" y="77.0" width="1.0" height="6.0" fill="#00f" />
<rect x="1018.0" y="80.0" width="1.0" height="5.0" fill="#00f" />
<rect x="1024.0" y="80.0" width="1.0" height="7.0" fill="#00f" />
<rect x="1030.0" y="80.0" width="1.0" height="8.0" fill="#00f" />
<rect x="1036.0" y="80.0" width="1.0" height="8.0" fill="#00f" />
<rect x="1042.0" y="80.0" width="1.0" height="8.0" fill="#00f" />
<rect x="1048.0" y="80.0" width="1.0" height="8.0" fill="#00f" />
<rect x="1054.0" y="80.0" width="1.0" height="10.0" fill="#00f" />
<rect x="1060.0" y="80.0" width="1.0" height="10.0" fill="#00f" />
<rect x="1066.0" y="80.0" width="1.0" height="10.0" fill="#00f" />
<rect x="1072.0" y="83.0" width="1.0" height="5.0" fill="#00f" />
<rect x="1078.0" y="83.0" width="1.0" height="3.0" fill="#00f" />
<g shape-rendering="crispEdges" stroke-linejoin="round">
<polyline points="0.0,217.7 4.5,217.7 10.5,217.7 16.5,214.1 22.5,211.5 28.5,209.5 34.5,209.0 40.5,209.0 46.5,209.0 52.5,209.0 58.5,209.0 64.5,208.3 70.5,208.3 76.5,208.3 82.5,208.3 88.5,208.3 94.5,211.2 100.5,211.2 106.5,211.2 112.5,211.2 118.5,211.2 124.5,211.2 130.5,211.2 136.5,211.2 142.5,216.3 148.5,216.3 154.5,216.3 160.5,200.4 166.5,194.3 172.5,194.3 178.5,194.3 184.5,194.3 190.5,194.3 196.5,192.5 202.5,192.0 208.5,169.3 214.5,158.4 220.5,158.4 226.5,158.4 232.5,158.4 238.5,157.3 244.5,157.3 250.5,157.3 256.5,155.6 262.5,152.2 268.5,157.3 274.5,157.3 280.5,157.3 286.5,157.3 292.5,157.3 298.5,154.1 304.5,151.2 310.5,143.3 316.5,132.5 322.5,123.1 328.5,123.1 334.5,117.0 340.5,115.2 346.5,114.1 352.5,114.1 358.5,112.3 364.5,104.3 370.5,93.5 376.5,87.7 382.5,87.0 388.5,87.0 394.5,83.4 400.5,83.4 406.5,83.0 412.5,81.5 418.5,77.2 424.5,79.3 430.5,81.5 436.5,81.5 442.5,81.5 448.5,81.5 454.5,81.5 460.5,81.5 466.5,81.5 472.5,77.2 478.5,77.2 484.5,77.2 490.5,74.3 496.5,74.3 502.5,74.3 508.5,74.3 514.5,72.5 520.5,70.9 526.5,69.5 532.5,68.0 538.5,66.2 544.5,64.4 550.5,64.4 556.5,64.4 562.5,64.4 568.5,64.4 574.5,61.2 580.5,61.2 586.5,61.2 592.5,61.2 598.5,61.2 604.5,61.2 610.5,57.9 616.5,68.0 622.5,69.8 628.5,71.6 634.5,72.4 640.5,72.4 646.5,72.4 652.5,72.4 658.5,72.4 664.5,81.7 670.5,83.5 676.5,81.7 682.5,80.3 688.5,78.9 694.5,77.4 700.5,76.2 706.5,76.2 712.5,75.2 718.5,74.0 724.5,73.3 730.5,72.2 736.5,72.2 742.5,73.8 748.5,74.3 754.5,73.6 760.5,72.2 766.5,72.0 772.5,71.6 778.5,72.5 784.5,72.5 790.5,72.5 796.5,71.0 802.5,71.0 808.5,71.0 814.5,71.9 820.5,72.5 826.5,71.0 832.5,69.2 838.5,69.2 844.5,69.2 850.5,69.0 856.5,69.2 862.5,71.1 868.5,71.3 874.5,71.6 880.5,72.4 886.5,72.4 892.5,72.5 898.5,72.5 904.5,72.5 910.5,72.6 916.5,72.7 922.5,72.9 928.5,72.7 934.5,73.0 940.5,72.9 946.5,72.7 952.5,72.6 958.5,72.4 964.5,72.3 970.5,72.3 976.5,74.1 982.5,77.3 988.5,77.4 994.5,77.6 1000.5,79.2 1006.5,80.7 1012.5,82.2 1018.5,84.6 1024.5,86.3 1030.5,87.5 1036.5,87.5 1042.5,87.5 1048.5,87.6 1054.5,89.5 1060.5,89.4 1066.5,89.0 1072.5,87.6 1078.5,85.1 1084.5,80.9 1090.5,80.4 1096.5,80.7 1102.5,83.4 1108.5,83.5 1114.5,83.6" fill="none" stroke="#0ff" stroke-width="1" />
<polyline points="0.0,225.7 4.5,225.7 10.5,225.7 16.5,225.7 22.5,222.3 28.5,222.3 34.5,222.3 40.5,222.3 46.5,222.3 52.5,222.3 58.5,222.3 64.5,222.3 70.5,222.3 76.5,222.3 82.5,222.3 88.5,222.3 94.5,222.3 100.5,222.3 106.5,222.3 112.5,222.3 118.5,222.3 124.5,219.2 130.5,219.2 136.5,219.2 142.5,219.2 148.5,219.2 154.5,219.2 160.5,206.2 166.5,200.4 172.5,194.3 178.5,194.3 184.5,194.3 190.5,194.3 196.5,194.3 202.5,192.0 208.5,177.9 214.5,169.6 220.5,169.6 226.5,169.6 232.5,169.6 238.5,169.6 244.5,169.6 250.5,169.6 256.5,169.6 262.5,169.6 268.5,169.6 274.5,169.6 280.5,169.6 286.5,169.6 292.5,169.6 298.5,169.6 304.5,169.6 310.5,169.6 316.5,163.5 322.5,154.5 328.5,154.5 334.5,148.3 340.5,148.3 346.5,148.3 352.5,148.3 358.5,148.3 364.5,145.5 370.5,138.2 376.5,138.2 382.5,138.2 388.5,138.2 394.5,135.1 400.5,135.1 406.5,135.1 412.5,135.1 418.5,135.1 424.5,135.1 430.5,135.1 436.5,135.1 442.5,135.1 448.5,135.1 454.5,132.5 460.5,132.5 466.5,116.6 472.5,114.1 478.5,114.1 484.5,114.1 490.5,114.1 496.5,111.3 502.5,111.3 508.5,111.3 514.5,107.9 520.5,101.4 526.5,101.4 532.5,101.4 538.5,101.4 544.5,101.4 550.5,101.4 556.5,101.4 562.5,101.4 568.5,101.4 574.5,92.2 580.5,92.2 586.5,92.2 592.5,92.2 598.5,92.2 604.5,89.3 610.5,89.3 616.5,89.3 622.5,86.0 628.5,77.4 634.5,74.0 640.5,72.5 646.5,72.5 652.5,72.5 658.5,72.5 664.5,71.5 670.5,71.5 676.5,71.5 682.5,71.5 688.5,71.5 694.5,71.5 700.5,71.5 706.5,71.5 712.5,71.5 718.5,71.5 724.5,70.2 730.5,70.2 736.5,70.2 742.5,70.2 748.5,70.2 754.5,70.2 760.5,70.2 766.5,70.2 772.5,70.2 778.5,70.2 784.5,70.2 790.5,70.2 796.5,70.2 802.5,70.2 808.5,70.2 814.5,70.2 820.5,70.2 826.5,70.2 832.5,70.2 838.5,70.2 844.5,70.2 850.5,70.2 856.5,70.2 862.5,70.2 868.5,70.2 874.5,70.2 880.5,70.2 886.5,70.2 892.5,70.2 898.5,73.0 904.5,74.4 910.5,76.4 916.5,77.4 922.5,77.4 928.5,77.4 934.5,77.4 940.5,75.3 946.5,74.0 952.5,75.7 958.5,75.7 964.5,75.7 970.5,75.7 976.5,75.7 982.5,74.5 988.5,74.0 994.5,74.0 1000.5,77.1 1006.5,77.1 1012.5,77.1 1018.5,80.2 1024.5,80.2 1030.5,80.2 1036.5,80.2 1042.5,80.2 1048.5,80.2 1054.5,80.2 1060.5,80.2 1066.5,80.2 1072.5,83.3 1078.5,83.3 1084.5,80.2 1090.5,80.2 1096.5,80.2 1102.5,83.3 1108.5,83.3 1114.5,83.3" fill="none" stroke="#f00" stroke-width="1" />
<polyline points="0.0,240.8 13.0,239.7 31.0,237.5 55.0,235.7 79.0,231.7 100.0,229.2 150.0,221.5 200.0,212.7 250.0,202.0 295.0,192.0 350.0,181.0 400.0,171.0 418.0,167.5 460.0,157.7 526.0,147.0 562.0,140.4 600.0,134.2 673.0,122.0 718.0,113.7 759.0,108.0 800.0,102.0 814.0,100.3 838.0,95.6 862.0,92.4 880.0,90.2 900.0,88.5 929.0,85.0 943.0,82.5 965.0,82.3 979.0,81.0 1000.0,80.0 1020.0,77.6 1039.0,77.2 1056.0,75.0 1086.0,74.6 1114.5,74.0" fill="none" stroke="#ff0" stroke-width="1" />
<polyline points="0.0,222.4 6.0,221.3 22.0,218.4 40.0,215.5 65.0,210.8 88.0,207.0 124.0,199.0 160.0,191.7 200.0,181.5 226.0,172.9 262.0,159.2 298.0,149.0 322.0,142.6 358.0,131.0 400.0,117.8 430.0,105.0 448.0,98.7 466.0,93.5 490.0,89.2 514.0,85.6 538.0,81.4 562.0,77.8 592.0,73.8 620.0,71.3 700.0,70.6 800.0,70.6 842.0,71.6 865.0,74.5 900.0,77.5 1000.0,78.6 1114.5,79.3" fill="none" stroke="#4b0082" stroke-width="1" />
</g>
<rect x="4.0" y="215.0" width="1.0" height="1.0" fill="#00f" />
<rect x="3.0" y="215.0" width="3.0" height="1.0" fill="#00f" />
<rect x="10.0" y="172.0" width="1.0" height="20.0" fill="#f00" />
<rect x="9.0" y="178.0" width="3.0" height="8.0" fill="#f00" />
<rect x="16.0" y="160.0" width="1.0" height="26.0" fill="#f00" />
<rect x="15.0" y="172.0" width="3.0" height="7.0" fill="#f00" />
<rect x="22.0" y="160.0" width="1.0" height="26.0" fill="#00f" />
<rect x="21.0" y="172.0" width="3.0" height="14.0" fill="#00f" />
<rect x="28.0" y="172.0" width="1.0" height="14.0" fill="#f00" />
<rect x="27.0" y="178.0" width="3.0" height="1.0" fill="#f00" />
<rect x="34.0" y="172.0" width="1.0" height="14.0" fill="#00f" />
<rect x="33.0" y="178.0" width="3.0" height="1.0" fill="#00f" />
<rect x="40.0" y="166.0" width="1.0" height="13.0" fill="#f00" />
<rect x="39.0" y="172.0" width="3.0" height="7.0" fill="#f00" />
<rect x="46.0" y="172.0" width="1.0" height="7.0" fill="#00f" />
<rect x="45.0" y="178.0" width="3.0" height="1.0" fill="#00f" />
<rect x="52.0" y="166.0" width="1.0" height="13.0" fill="#f00" />
<rect x="51.0" y="166.0" width="3.0" height="13.0" fill="#f00" />
<rect x="58.0" y="129.0" width="1.0" height="44.0" fill="#f00" />
<rect x="57.0" y="129.0" width="3.0" height="38.0" fill="#f00" />
<rect x="64.0" y="111.0" width="1.0" height="31.0" fill="#00f" />
<rect x="63.0" y="129.0" width="3.0" height="7.0" fill="#00f" />
<rect x="70.0" y="129.0" width="1.0" height="20.0" fill="#00f" />
<rect x="69.0" y="135.0" width="3.0" height="14.0" fill="#00f" />
<rect x="76.0" y="135.0" width="1.0" height="20.0" fill="#00f" />
<rect x="75.0" y="141.0" width="3.0" height="14.0" fill="#00f" />
<rect x="82.0" y="148.0" width="1.0" height="7.0" fill="#00f" />
<rect x="81.0" y="148.0" width="3.0" height="7.0" fill="#00f" />
<rect x="88.0" y="148.0" width="1.0" height="13.0" fill="#00f" />
<rect x="87.0" y="148.0" width="3.0" height="7.0" fill="#00f" />
<rect x="94.0" y="154.0" width="1.0" height="7.0" fill="#00f" />
<rect x="93.0" y="154.0" width="3.0" height="1.0" fill="#00f" />
<rect x="100.0" y="148.0" width="1.0" height="7.0" fill="#f00" />
<rect x="99.0" y="148.0" width="3.0" height="1.0" fill="#f00" />
<rect x="106.0" y="148.0" width="1.0" height="13.0" fill="#00f" />
<rect x="105.0" y="148.0" width="3.0" height="7.0" fill="#00f" />
<rect x="112.0" y="141.0" width="1.0" height="20.0" fill="#f00" />
<rect x="111.0" y="148.0" width="3.0" height="13.0" fill="#f00" />
<rect x="118.0" y="135.0" width="1.0" height="14.0" fill="#f00" />
<rect x="117.0" y="141.0" width="3.0" height="8.0" fill="#f00" />
<rect x="124.0" y="129.0" width="1.0" height="13.0" fill="#f00" />
<rect x="123.0" y="135.0" width="3.0" height="7.0" fill="#f00" />
<rect x="130.0" y="129.0" width="1.0" height="20.0" fill="#00f" />
<rect x="129.0" y="129.0" width="3.0" height="13.0" fill="#00f" />
<rect x="136.0" y="135.0" width="1.0" height="14.0" fill="#00f" />
<rect x="135.0" y="141.0" width="3.0" height="1.0" fill="#00f" />
<rect x="142.0" y="135.0" width="1.0" height="14.0" fill="#00f" />
<rect x="141.0" y="141.0" width="3.0" height="1.0" fill="#00f" />
<rect x="148.0" y="123.0" width="1.0" height="19.0" fill="#f00" />
<rect x="147.0" y="129.0" width="3.0" height="13.0" fill="#f00" />
<rect x="154.0" y="111.0" width="1.0" height="31.0" fill="#00f" />
<rect x="153.0" y="129.0" width="3.0" height="1.0" fill="#00f" />
<rect x="160.0" y="123.0" width="1.0" height="19.0" fill="#00f" />
<rect x="159.0" y="129.0" width="3.0" height="1.0" fill="#00f" />
<rect x="166.0" y="98.0" width="1.0" height="38.0" fill="#f00" />
<rect x="165.0" y="98.0" width="3.0" height="38.0" fill="#f00" />
<rect x="172.0" y="80.0" width="1.0" height="38.0" fill="#f00" />
<rect x="171.0" y="86.0" width="3.0" height="7.0" fill="#f00" />
<rect x="178.0" y="80.0" width="1.0" height="13.0" fill="#00f" />
<rect x="177.0" y="86.0" width="3.0" height="7.0" fill="#00f" />
<rect x="184.0" y="67.0" width="1.0" height="26.0" fill="#f00" />
<rect x="183.0" y="86.0" width="3.0" height="7.0" fill="#f00" />
<rect x="190.0" y="80.0" width="1.0" height="7.0" fill="#f00" />
<rect x="189.0" y="80.0" width="3.0" height="1.0" fill="#f00" />
<rect x="196.0" y="74.0" width="1.0" height="13.0" fill="#f00" />
<rect x="195.0" y="80.0" width="3.0" height="7.0" fill="#f00" />
<rect x="202.0" y="67.0" width="1.0" height="20.0" fill="#f00" />
<rect x="201.0" y="74.0" width="3.0" height="7.0" fill="#f00" />
<rect x="208.0" y="74.0" width="1.0" height="7.0" fill="#00f" />
<rect x="207.0" y="74.0" width="3.0" height="7.0" fill="#00f" />
<rect x="214.0" y="61.0" width="1.0" height="20.0" fill="#f00" />
<rect x="213.0" y="61.0" width="3.0" height="14.0" fill="#f00" />
<rect x="220.0" y="49.0" width="1.0" height="19.0" fill="#f00" />
<rect x="219.0" y="55.0" width="3.0" height="7.0" fill="#f00" />
<rect x="226.0" y="55.0" width="1.0" height="7.0" fill="#00f" />
<rect x="225.0" y="55.0" width="3.0" height="1.0" fill="#00f" />
<rect x="232.0" y="49.0" width="1.0" height="13.0" fill="#f00" />
<rect x="231.0" y="55.0" width="3.0" height="7.0" fill="#f00" />
<rect x="238.0" y="49.0" width="1.0" height="13.0" fill="#f00" />
<rect x="237.0" y="55.0" width="3.0" height="7.0" fill="#f00" />
<rect x="244.0" y="43.0" width="1.0" height="13.0" fill="#f00" />
<rect x="243.0" y="49.0" width="3.0" height="7.0" fill="#f00" />
<rect x="250.0" y="43.0" width="1.0" height="13.0" fill="#00f" />
<rect x="249.0" y="43.0" width="3.0" height="13.0" fill="#00f" />
<rect x="256.0" y="49.0" width="1.0" height="19.0" fill="#00f" />
<rect x="255.0" y="55.0" width="3.0" height="1.0" fill="#00f" />
<rect x="262.0" y="43.0" width="1.0" height="25.0" fill="#f00" />
<rect x="261.0" y="49.0" width="3.0" height="7.0" fill="#f00" />
<rect x="268.0" y="49.0" width="1.0" height="13.0" fill="#00f" />
<rect x="267.0" y="49.0" width="3.0" height="13.0" fill="#00f" />
<rect x="274.0" y="55.0" width="1.0" height="20.0" fill="#00f" />
<rect x="273.0" y="55.0" width="3.0" height="13.0" fill="#00f" />
<rect x="280.0" y="67.0" width="1.0" height="20.0" fill="#00f" />
<rect x="279.0" y="74.0" width="3.0" height="13.0" fill="#00f" />
<rect x="286.0" y="80.0" width="1.0" height="13.0" fill="#00f" />
<rect x="285.0" y="86.0" width="3.0" height="1.0" fill="#00f" />
<rect x="292.0" y="80.0" width="1.0" height="7.0" fill="#f00" />
<rect x="291.0" y="80.0" width="3.0" height="7.0" fill="#f00" />
<rect x="298.0" y="80.0" width="1.0" height="13.0" fill="#00f" />
<rect x="297.0" y="80.0" width="3.0" height="7.0" fill="#00f" />
<rect x="304.0" y="80.0" width="1.0" height="19.0" fill="#00f" />
<rect x="303.0" y="86.0" width="3.0" height="7.0" fill="#00f" />
<rect x="310.0" y="80.0" width="1.0" height="19.0" fill="#f00" />
<rect x="309.0" y="80.0" width="3.0" height="19.0" fill="#f00" />
<rect x="316.0" y="80.0" width="1.0" height="19.0" fill="#00f" />
<rect x="315.0" y="80.0" width="3.0" height="7.0" fill="#00f" />
<rect x="322.0" y="86.0" width="1.0" height="13.0" fill="#00f" />
<rect x="321.0" y="86.0" width="3.0" height="13.0" fill="#00f" />
<rect x="328.0" y="80.0" width="1.0" height="19.0" fill="#f00" />
<rect x="327.0" y="80.0" width="3.0" height="13.0" fill="#f00" />
<rect x="334.0" y="74.0" width="1.0" height="13.0" fill="#f00" />
<rect x="333.0" y="80.0" width="3.0" height="1.0" fill="#f00" />
<rect x="340.0" y="55.0" width="1.0" height="26.0" fill="#f00" />
<rect x="339.0" y="61.0" width="3.0" height="20.0" fill="#f00" />
<rect x="346.0" y="55.0" width="1.0" height="20.0" fill="#00f" />
<rect x="345.0" y="61.0" width="3.0" height="7.0" fill="#00f" />
<rect x="352.0" y="61.0" width="1.0" height="14.0" fill="#00f" />
<rect x="351.0" y="67.0" width="3.0" height="8.0" fill="#00f" />
<rect x="358.0" y="61.0" width="1.0" height="14.0" fill="#f00" />
<rect x="357.0" y="67.0" width="3.0" height="8.0" fill="#f00" />
<rect x="364.0" y="49.0" width="1.0" height="19.0" fill="#f00" />
<rect x="363.0" y="49.0" width="3.0" height="19.0" fill="#f00" />
<rect x="370.0" y="43.0" width="1.0" height="19.0" fill="#00f" />
<rect x="369.0" y="55.0" width="3.0" height="1.0" fill="#00f" />
<rect x="376.0" y="55.0" width="1.0" height="13.0" fill="#00f" />
<rect x="375.0" y="55.0" width="3.0" height="13.0" fill="#00f" />
<rect x="382.0" y="55.0" width="1.0" height="13.0" fill="#f00" />
<rect x="381.0" y="55.0" width="3.0" height="13.0" fill="#f00" />
<rect x="388.0" y="55.0" width="1.0" height="7.0" fill="#00f" />
<rect x="387.0" y="55.0" width="3.0" height="7.0" fill="#00f" />
<rect x="394.0" y="55.0" width="1.0" height="13.0" fill="#00f" />
<rect x="393.0" y="61.0" width="3.0" height="1.0" fill="#00f" />
<rect x="400.0" y="55.0" width="1.0" height="20.0" fill="#00f" />
<rect x="399.0" y="61.0" width="3.0" height="7.0" fill="#00f" />
<rect x="406.0" y="55.0" width="1.0" height="20.0" fill="#f00" />
<rect x="405.0" y="55.0" width="3.0" height="7.0" fill="#f00" />
<rect x="412.0" y="43.0" width="1.0" height="19.0" fill="#f00" />
<rect x="411.0" y="55.0" width="3.0" height="1.0" fill="#f00" />
<rect x="418.0" y="43.0" width="1.0" height="19.0" fill="#f00" />
<rect x="417.0" y="49.0" width="3.0" height="7.0" fill="#f00" />
<rect x="424.0" y="37.0" width="1.0" height="19.0" fill="#f00" />
<rect x="423.0" y="43.0" width="3.0" height="7.0" fill="#f00" />
<rect x="430.0" y="37.0" width="1.0" height="13.0" fill="#00f" />
<rect x="429.0" y="37.0" width="3.0" height="13.0" fill="#00f" />
<rect x="436.0" y="46.0" width="1.0" height="4.0" fill="#00f" />
<rect x="435.0" y="49.0" width="3.0" height="1.0" fill="#00f" />
<rect x="442.0" y="43.0" width="1.0" height="19.0" fill="#f00" />
<rect x="441.0" y="43.0" width="3.0" height="7.0" fill="#f00" />
<rect x="448.0" y="49.0" width="1.0" height="13.0" fill="#00f" />
<rect x="447.0" y="49.0" width="3.0" height="13.0" fill="#00f" />
<rect x="454.0" y="55.0" width="1.0" height="7.0" fill="#f00" />
<rect x="453.0" y="55.0" width="3.0" height="7.0" fill="#f00" />
<rect x="460.0" y="49.0" width="1.0" height="7.0" fill="#f00" />
<rect x="459.0" y="49.0" width="3.0" height="7.0" fill="#f00" />
<rect x="466.0" y="80.0" width="1.0" height="19.0" fill="#00f" />
<rect x="465.0" y="86.0" width="3.0" height="7.0" fill="#00f" />
<rect x="472.0" y="92.0" width="1.0" height="13.0" fill="#00f" />
<rect x="471.0" y="92.0" width="3.0" height="1.0" fill="#00f" />
<rect x="478.0" y="86.0" width="1.0" height="19.0" fill="#00f" />
<rect x="477.0" y="92.0" width="3.0" height="1.0" fill="#00f" />
<rect x="484.0" y="80.0" width="1.0" height="13.0" fill="#f00" />
<rect x="483.0" y="86.0" width="3.0" height="1.0" fill="#f00" />
<rect x="490.0" y="86.0" width="1.0" height="13.0" fill="#00f" />
<rect x="489.0" y="92.0" width="3.0" height="1.0" fill="#00f" />
<rect x="496.0" y="86.0" width="1.0" height="13.0" fill="#00f" />
<rect x="495.0" y="98.0" width="3.0" height="1.0" fill="#00f" />
<rect x="502.0" y="80.0" width="1.0" height="19.0" fill="#f00" />
<rect x="501.0" y="86.0" width="3.0" height="13.0" fill="#f00" />
<rect x="508.0" y="86.0" width="1.0" height="13.0" fill="#00f" />
<rect x="507.0" y="92.0" width="3.0" height="1.0" fill="#00f" />
<rect x="514.0" y="80.0" width="1.0" height="13.0" fill="#f00" />
<rect x="513.0" y="86.0" width="3.0" height="7.0" fill="#f00" />
<rect x="520.0" y="67.0" width="1.0" height="32.0" fill="#00f" />
<rect x="519.0" y="86.0" width="3.0" height="7.0" fill="#00f" />
<rect x="526.0" y="67.0" width="1.0" height="20.0" fill="#f00" />
<rect x="525.0" y="80.0" width="3.0" height="7.0" fill="#f00" />
<rect x="532.0" y="67.0" width="1.0" height="20.0" fill="#f00" />
<rect x="531.0" y="80.0" width="3.0" height="7.0" fill="#f00" />
<rect x="538.0" y="74.0" width="1.0" height="13.0" fill="#00f" />
<rect x="537.0" y="86.0" width="3.0" height="1.0" fill="#00f" />
<rect x="544.0" y="61.0" width="1.0" height="26.0" fill="#f00" />
<rect x="543.0" y="74.0" width="3.0" height="13.0" fill="#f00" />
<rect x="550.0" y="61.0" width="1.0" height="14.0" fill="#f00" />
<rect x="549.0" y="67.0" width="3.0" height="8.0" fill="#f00" />
<rect x="556.0" y="74.0" width="1.0" height="7.0" fill="#00f" />
<rect x="555.0" y="74.0" width="3.0" height="1.0" fill="#00f" />
<rect x="562.0" y="61.0" width="1.0" height="20.0" fill="#f00" />
<rect x="561.0" y="61.0" width="3.0" height="20.0" fill="#f00" />
<rect x="568.0" y="61.0" width="1.0" height="20.0" fill="#00f" />
<rect x="567.0" y="61.0" width="3.0" height="7.0" fill="#00f" />
<rect x="574.0" y="67.0" width="1.0" height="14.0" fill="#00f" />
<rect x="573.0" y="74.0" width="3.0" height="1.0" fill="#00f" />
<rect x="580.0" y="67.0" width="1.0" height="14.0" fill="#00f" />
<rect x="579.0" y="74.0" width="3.0" height="7.0" fill="#00f" />
<rect x="586.0" y="74.0" width="1.0" height="1.0" fill="#f00" />
<rect x="585.0" y="74.0" width="3.0" height="1.0" fill="#f00" />
<rect x="592.0" y="67.0" width="1.0" height="14.0" fill="#00f" />
<rect x="591.0" y="74.0" width="3.0" height="1.0" fill="#00f" />
<rect x="598.0" y="61.0" width="1.0" height="14.0" fill="#f00" />
<rect x="597.0" y="61.0" width="3.0" height="14.0" fill="#f00" />
<rect x="604.0" y="61.0" width="1.0" height="14.0" fill="#00f" />
<rect x="603.0" y="61.0" width="3.0" height="1.0" fill="#00f" />
<rect x="610.0" y="55.0" width="1.0" height="13.0" fill="#00f" />
<rect x="609.0" y="61.0" width="3.0" height="1.0" fill="#00f" />
<rect x="616.0" y="61.0" width="1.0" height="14.0" fill="#00f" />
<rect x="615.0" y="61.0" width="3.0" height="7.0" fill="#00f" />
<rect x="622.0" y="67.0" width="1.0" height="14.0" fill="#00f" />
<rect x="621.0" y="67.0" width="3.0" height="1.0" fill="#00f" />
<rect x="628.0" y="67.0" width="1.0" height="8.0" fill="#00f" />
<rect x="627.0" y="74.0" width="3.0" height="1.0" fill="#00f" />
<rect x="634.0" y="67.0" width="1.0" height="8.0" fill="#00f" />
<rect x="633.0" y="74.0" width="3.0" height="1.0" fill="#00f" />
<rect x="640.0" y="61.0" width="1.0" height="14.0" fill="#f00" />
<rect x="639.0" y="61.0" width="3.0" height="14.0" fill="#f00" />
<rect x="646.0" y="61.0" width="1.0" height="7.0" fill="#00f" />
<rect x="645.0" y="67.0" width="3.0" height="1.0" fill="#00f" />
<rect x="652.0" y="61.0" width="1.0" height="7.0" fill="#f00" />
<rect x="651.0" y="61.0" width="3.0" height="7.0" fill="#f00" />
<rect x="658.0" y="61.0" width="1.0" height="7.0" fill="#00f" />
<rect x="657.0" y="61.0" width="3.0" height="7.0" fill="#00f" />
<rect x="664.0" y="61.0" width="1.0" height="20.0" fill="#00f" />
<rect x="663.0" y="67.0" width="3.0" height="1.0" fill="#00f" />
<rect x="670.0" y="61.0" width="1.0" height="20.0" fill="#00f" />
<rect x="669.0" y="67.0" width="3.0" height="1.0" fill="#00f" />
<rect x="676.0" y="61.0" width="1.0" height="20.0" fill="#00f" />
<rect x="675.0" y="67.0" width="3.0" height="1.0" fill="#00f" />
<rect x="682.0" y="67.0" width="1.0" height="14.0" fill="#00f" />
<rect x="681.0" y="67.0" width="3.0" height="8.0" fill="#00f" />
<rect x="688.0" y="67.0" width="1.0" height="14.0" fill="#00f" />
<rect x="687.0" y="74.0" width="3.0" height="1.0" fill="#00f" />
<rect x="694.0" y="67.0" width="1.0" height="8.0" fill="#f00" />
<rect x="693.0" y="67.0" width="3.0" height="8.0" fill="#f00" />
<rect x="700.0" y="67.0" width="1.0" height="8.0" fill="#00f" />
<rect x="699.0" y="67.0" width="3.0" height="8.0" fill="#00f" />
<rect x="706.0" y="74.0" width="1.0" height="7.0" fill="#00f" />
<rect x="705.0" y="74.0" width="3.0" height="7.0" fill="#00f" />
<rect x="712.0" y="80.0" width="1.0" height="7.0" fill="#00f" />
<rect x="711.0" y="80.0" width="3.0" height="1.0" fill="#00f" />
<rect x="718.0" y="74.0" width="1.0" height="13.0" fill="#f00" />
<rect x="717.0" y="80.0" width="3.0" height="7.0" fill="#f00" />
<rect x="724.0" y="74.0" width="1.0" height="7.0" fill="#00f" />
<rect x="723.0" y="80.0" width="3.0" height="1.0" fill="#00f" />
<rect x="730.0" y="61.0" width="1.0" height="20.0" fill="#f00" />
<rect x="729.0" y="67.0" width="3.0" height="14.0" fill="#f00" />
<rect x="736.0" y="61.0" width="1.0" height="14.0" fill="#00f" />
<rect x="735.0" y="67.0" width="3.0" height="1.0" fill="#00f" />
<rect x="742.0" y="67.0" width="1.0" height="8.0" fill="#00f" />
<rect x="741.0" y="74.0" width="3.0" height="1.0" fill="#00f" />
<rect x="748.0" y="67.0" width="1.0" height="8.0" fill="#00f" />
<rect x="747.0" y="74.0" width="3.0" height="1.0" fill="#00f" />
<rect x="754.0" y="67.0" width="1.0" height="8.0" fill="#00f" />
<rect x="753.0" y="74.0" width="3.0" height="1.0" fill="#00f" />
<rect x="760.0" y="67.0" width="1.0" height="8.0" fill="#00f" />
<rect x="759.0" y="67.0" width="3.0" height="8.0" fill="#00f" />
<rect x="766.0" y="67.0" width="1.0" height="14.0" fill="#00f" />
<rect x="765.0" y="74.0" width="3.0" height="7.0" fill="#00f" />
<rect x="772.0" y="74.0" width="1.0" height="7.0" fill="#00f" />
<rect x="771.0" y="80.0" width="3.0" height="1.0" fill="#00f" />
<rect x="778.0" y="74.0" width="1.0" height="7.0" fill="#f00" />
<rect x="777.0" y="74.0" width="3.0" height="1.0" fill="#f00" />
<rect x="784.0" y="74.0" width="1.0" height="7.0" fill="#00f" />
<rect x="783.0" y="74.0" width="3.0" height="1.0" fill="#00f" />
<rect x="790.0" y="67.0" width="1.0" height="14.0" fill="#00f" />
<rect x="789.0" y="74.0" width="3.0" height="1.0" fill="#00f" />
<rect x="796.0" y="67.0" width="1.0" height="8.0" fill="#00f" />
<rect x="795.0" y="74.0" width="3.0" height="1.0" fill="#00f" />
<rect x="802.0" y="67.0" width="1.0" height="8.0" fill="#00f" />
<rect x="801.0" y="74.0" width="3.0" height="1.0" fill="#00f" />
<rect x="808.0" y="67.0" width="1.0" height="8.0" fill="#f00" />
<rect x="807.0" y="67.0" width="3.0" height="8.0" fill="#f00" />
<rect x="814.0" y="61.0" width="1.0" height="14.0" fill="#00f" />
<rect x="813.0" y="67.0" width="3.0" height="1.0" fill="#00f" />
<rect x="820.0" y="67.0" width="1.0" height="8.0" fill="#00f" />
<rect x="819.0" y="67.0" width="3.0" height="1.0" fill="#00f" />
<rect x="826.0" y="74.0" width="1.0" height="13.0" fill="#00f" />
<rect x="825.0" y="74.0" width="3.0" height="7.0" fill="#00f" />
<rect x="832.0" y="80.0" width="1.0" height="13.0" fill="#00f" />
<rect x="831.0" y="80.0" width="3.0" height="1.0" fill="#00f" />
<rect x="838.0" y="80.0" width="1.0" height="7.0" fill="#00f" />
<rect x="837.0" y="80.0" width="3.0" height="1.0" fill="#00f" />
<rect x="844.0" y="80.0" width="1.0" height="7.0" fill="#00f" />
<rect x="843.0" y="80.0" width="3.0" height="1.0" fill="#00f" />
<rect x="850.0" y="80.0" width="1.0" height="19.0" fill="#00f" />
<rect x="849.0" y="80.0" width="3.0" height="13.0" fill="#00f" />
<rect x="856.0" y="86.0" width="1.0" height="7.0" fill="#00f" />
<rect x="855.0" y="92.0" width="3.0" height="1.0" fill="#00f" />
<rect x="862.0" y="86.0" width="1.0" height="13.0" fill="#00f" />
<rect x="861.0" y="86.0" width="3.0" height="13.0" fill="#00f" />
<rect x="868.0" y="92.0" width="1.0" height="13.0" fill="#00f" />
<rect x="867.0" y="98.0" width="3.0" height="7.0" fill="#00f" />
<rect x="874.0" y="98.0" width="1.0" height="7.0" fill="#00f" />
<rect x="873.0" y="104.0" width="3.0" height="1.0" fill="#00f" />
<rect x="880.0" y="92.0" width="1.0" height="13.0" fill="#f00" />
<rect x="879.0" y="92.0" width="3.0" height="13.0" fill="#f00" />
<rect x="886.0" y="92.0" width="1.0" height="7.0" fill="#00f" />
<rect x="885.0" y="92.0" width="3.0" height="7.0" fill="#00f" />
<rect x="892.0" y="92.0" width="1.0" height="7.0" fill="#f00" />
<rect x="891.0" y="92.0" width="3.0" height="7.0" fill="#f00" />
<rect x="898.0" y="92.0" width="1.0" height="7.0" fill="#00f" />
<rect x="897.0" y="92.0" width="3.0" height="1.0" fill="#00f" />
<rect x="904.0" y="86.0" width="1.0" height="13.0" fill="#00f" />
<rect x="903.0" y="92.0" width="3.0" height="1.0" fill="#00f" />
<rect x="910.0" y="86.0" width="1.0" height="13.0" fill="#f00" />
<rect x="909.0" y="86.0" width="3.0" height="7.0" fill="#f00" />
<rect x="916.0" y="80.0" width="1.0" height="13.0" fill="#00f" />
<rect x="915.0" y="86.0" width="3.0" height="1.0" fill="#00f" />
<rect x="922.0" y="86.0" width="1.0" height="13.0" fill="#00f" />
<rect x="921.0" y="86.0" width="3.0" height="1.0" fill="#00f" />
<rect x="928.0" y="67.0" width="1.0" height="20.0" fill="#f00" />
<rect x="927.0" y="74.0" width="3.0" height="13.0" fill="#f00" />
<rect x="934.0" y="55.0" width="1.0" height="20.0" fill="#f00" />
<rect x="933.0" y="61.0" width="3.0" height="14.0" fill="#f00" />
<rect x="940.0" y="61.0" width="1.0" height="14.0" fill="#f00" />
<rect x="939.0" y="61.0" width="3.0" height="7.0" fill="#f00" />
<rect x="946.0" y="67.0" width="1.0" height="14.0" fill="#00f" />
<rect x="945.0" y="67.0" width="3.0" height="14.0" fill="#00f" />
<rect x="952.0" y="74.0" width="1.0" height="38.0" fill="#00f" />
<rect x="951.0" y="80.0" width="3.0" height="25.0" fill="#00f" />
<rect x="958.0" y="92.0" width="1.0" height="13.0" fill="#f00" />
<rect x="957.0" y="98.0" width="3.0" height="7.0" fill="#f00" />
<rect x="964.0" y="98.0" width="1.0" height="14.0" fill="#00f" />
<rect x="963.0" y="104.0" width="3.0" height="1.0" fill="#00f" />
<rect x="970.0" y="86.0" width="1.0" height="19.0" fill="#f00" />
<rect x="969.0" y="92.0" width="3.0" height="13.0" fill="#f00" />
<rect x="976.0" y="86.0" width="1.0" height="13.0" fill="#00f" />
<rect x="975.0" y="92.0" width="3.0" height="1.0" fill="#00f" />
<rect x="982.0" y="86.0" width="1.0" height="13.0" fill="#00f" />
<rect x="981.0" y="92.0" width="3.0" height="1.0" fill="#00f" />
<rect x="988.0" y="86.0" width="1.0" height="7.0" fill="#f00" />
<rect x="987.0" y="86.0" width="3.0" height="7.0" fill="#f00" />
<rect x="994.0" y="86.0" width="1.0" height="7.0" fill="#00f" />
<rect x="993.0" y="86.0" width="3.0" height="7.0" fill="#00f" />
<rect x="1000.0" y="80.0" width="1.0" height="13.0" fill="#f00" />
<rect x="999.0" y="86.0" width="3.0" height="7.0" fill="#f00" />
<rect x="1006.0" y="80.0" width="1.0" height="7.0" fill="#f00" />
<rect x="1005.0" y="80.0" width="3.0" height="7.0" fill="#f00" />
<rect x="1012.0" y="74.0" width="1.0" height="7.0" fill="#00f" />
<rect x="1011.0" y="80.0" width="3.0" height="1.0" fill="#00f" />
<rect x="1018.0" y="74.0" width="1.0" height="7.0" fill="#00f" />
<rect x="1017.0" y="80.0" width="3.0" height="1.0" fill="#00f" />
<rect x="1024.0" y="74.0" width="1.0" height="13.0" fill="#00f" />
<rect x="1023.0" y="80.0" width="3.0" height="7.0" fill="#00f" />
<rect x="1030.0" y="80.0" width="1.0" height="7.0" fill="#00f" />
<rect x="1029.0" y="86.0" width="3.0" height="1.0" fill="#00f" />
<rect x="1036.0" y="80.0" width="1.0" height="7.0" fill="#00f" />
<rect x="1035.0" y="86.0" width="3.0" height="1.0" fill="#00f" />
<rect x="1042.0" y="74.0" width="1.0" height="13.0" fill="#f00" />
<rect x="1041.0" y="74.0" width="3.0" height="13.0" fill="#f00" />
<rect x="1048.0" y="67.0" width="1.0" height="14.0" fill="#f00" />
<rect x="1047.0" y="74.0" width="3.0" height="7.0" fill="#f00" />
<rect x="1054.0" y="67.0" width="1.0" height="8.0" fill="#f00" />
<rect x="1053.0" y="67.0" width="3.0" height="1.0" fill="#f00" />
<rect x="1060.0" y="61.0" width="1.0" height="7.0" fill="#00f" />
<rect x="1059.0" y="67.0" width="3.0" height="1.0" fill="#00f" />
<rect x="1066.0" y="61.0" width="1.0" height="14.0" fill="#00f" />
<rect x="1065.0" y="61.0" width="3.0" height="7.0" fill="#00f" />
<rect x="1072.0" y="61.0" width="1.0" height="14.0" fill="#f00" />
<rect x="1071.0" y="61.0" width="3.0" height="7.0" fill="#f00" />
<rect x="1078.0" y="55.0" width="1.0" height="13.0" fill="#f00" />
<rect x="1077.0" y="61.0" width="3.0" height="7.0" fill="#f00" />
<rect x="1084.0" y="55.0" width="1.0" height="7.0" fill="#00f" />
<rect x="1083.0" y="61.0" width="3.0" height="1.0" fill="#00f" />
<rect x="1090.0" y="55.0" width="1.0" height="7.0" fill="#00f" />
<rect x="1089.0" y="61.0" width="3.0" height="1.0" fill="#00f" />
<rect x="1096.0" y="61.0" width="1.0" height="7.0" fill="#00f" />
<rect x="1095.0" y="61.0" width="3.0" height="7.0" fill="#00f" />
<rect x="1102.0" y="61.0" width="1.0" height="7.0" fill="#f00" />
<rect x="1101.0" y="61.0" width="3.0" height="7.0" fill="#f00" />
<rect x="1108.0" y="61.0" width="1.0" height="7.0" fill="#00f" />
<rect x="1107.0" y="67.0" width="3.0" height="1.0" fill="#00f" />
</g>
<rect x="3.0" y="337.3" width="3.0" height="1.7" fill="#008000" />
<rect x="9.0" y="295.1" width="3.0" height="43.9" fill="#008000" />
<rect x="15.0" y="310.1" width="3.0" height="28.9" fill="#008000" />
<rect x="21.0" y="316.3" width="3.0" height="22.7" fill="#008000" />
<rect x="27.0" y="335.1" width="3.0" height="3.9" fill="#008000" />
<rect x="33.0" y="325.3" width="3.0" height="13.7" fill="#008000" />
<rect x="39.0" y="331.2" width="3.0" height="7.8" fill="#008000" />
<rect x="45.0" y="338.0" width="3.0" height="1.0" fill="#008000" />
<rect x="51.0" y="333.2" width="3.0" height="5.8" fill="#008000" />
<rect x="57.0" y="272.0" width="3.0" height="67.0" fill="#008000" />
<rect x="63.0" y="304.4" width="3.0" height="34.6" fill="#008000" />
<rect x="69.0" y="331.2" width="3.0" height="7.8" fill="#008000" />
<rect x="75.0" y="321.1" width="3.0" height="17.9" fill="#008000" />
<rect x="81.0" y="334.1" width="3.0" height="4.9" fill="#008000" />
<rect x="87.0" y="332.2" width="3.0" height="6.8" fill="#008000" />
<rect x="93.0" y="336.1" width="3.0" height="2.9" fill="#008000" />
<rect x="99.0" y="336.1" width="3.0" height="2.9" fill="#008000" />
<rect x="105.0" y="332.2" width="3.0" height="6.8" fill="#008000" />
<rect x="111.0" y="330.1" width="3.0" height="8.9" fill="#008000" />
<rect x="117.0" y="327.2" width="3.0" height="11.8" fill="#008000" />
<rect x="123.0" y="331.2" width="3.0" height="7.8" fill="#008000" />
<rect x="129.0" y="330.1" width="3.0" height="8.9" fill="#008000" />
<rect x="135.0" y="333.2" width="3.0" height="5.8" fill="#008000" />
<rect x="141.0" y="335.1" width="3.0" height="3.9" fill="#008000" />
<rect x="147.0" y="325.3" width="3.0" height="13.7" fill="#008000" />
<rect x="153.0" y="315.2" width="3.0" height="23.8" fill="#008000" />
<rect x="159.0" y="325.3" width="3.0" height="13.7" fill="#008000" />
<rect x="165.0" y="313.2" width="3.0" height="25.8" fill="#008000" />
<rect x="171.0" y="291.1" width="3.0" height="47.9" fill="#008000" />
<rect x="177.0" y="331.2" width="3.0" height="7.8" fill="#008000" />
<rect x="183.0" y="305.2" width="3.0" height="33.8" fill="#008000" />
<rect x="189.0" y="336.1" width="3.0" height="2.9" fill="#008000" />
<rect x="195.0" y="335.1" width="3.0" height="3.9" fill="#008000" />
<rect x="201.0" y="332.2" width="3.0" height="6.8" fill="#008000" />
<rect x="207.0" y="338.0" width="3.0" height="1.0" fill="#008000" />
<rect x="213.0" y="331.2" width="3.0" height="7.8" fill="#008000" />
<rect x="219.0" y="327.2" width="3.0" height="11.8" fill="#008000" />
<rect x="225.0" y="337.0" width="3.0" height="2.0" fill="#008000" />
<rect x="231.0" y="334.1" width="3.0" height="4.9" fill="#008000" />
<rect x="237.0" y="337.0" width="3.0" height="2.0" fill="#008000" />
<rect x="243.0" y="333.2" width="3.0" height="5.8" fill="#008000" />
<rect x="249.0" y="322.1" width="3.0" height="16.9" fill="#008000" />
<rect x="255.0" y="331.2" width="3.0" height="7.8" fill="#008000" />
<rect x="261.0" y="315.2" width="3.0" height="23.8" fill="#008000" />
<rect x="267.0" y="334.1" width="3.0" height="4.9" fill="#008000" />
<rect x="273.0" y="320.2" width="3.0" height="18.8" fill="#008000" />
<rect x="279.0" y="324.3" width="3.0" height="14.7" fill="#008000" />
<rect x="285.0" y="331.2" width="3.0" height="7.8" fill="#008000" />
<rect x="291.0" y="332.2" width="3.0" height="6.8" fill="#008000" />
<rect x="297.0" y="330.1" width="3.0" height="8.9" fill="#008000" />
<rect x="303.0" y="333.2" width="3.0" height="5.8" fill="#008000" />
<rect x="309.0" y="331.2" width="3.0" height="7.8" fill="#008000" />
<rect x="315.0" y="332.2" width="3.0" height="6.8" fill="#008000" />
<rect x="321.0" y="333.2" width="3.0" height="5.8" fill="#008000" />
<rect x="327.0" y="329.2" width="3.0" height="9.8" fill="#008000" />
<rect x="333.0" y="334.1" width="3.0" height="4.9" fill="#008000" />
<rect x="339.0" y="321.1" width="3.0" height="17.9" fill="#008000" />
<rect x="345.0" y="324.3" width="3.0" height="14.7" fill="#008000" />
<rect x="351.0" y="338.0" width="3.0" height="1.0" fill="#008000" />
<rect x="357.0" y="332.2" width="3.0" height="6.8" fill="#008000" />
<rect x="363.0" y="331.2" width="3.0" height="7.8" fill="#008000" />
<rect x="369.0" y="330.1" width="3.0" height="8.9" fill="#008000" />
<rect x="375.0" y="336.1" width="3.0" height="2.9" fill="#008000" />
<rect x="381.0" y="329.2" width="3.0" height="9.8" fill="#008000" />
<rect x="387.0" y="335.1" width="3.0" height="3.9" fill="#008000" />
<rect x="393.0" y="325.3" width="3.0" height="13.7" fill="#008000" />
<rect x="399.0" y="332.2" width="3.0" height="6.8" fill="#008000" />
<rect x="405.0" y="333.2" width="3.0" height="5.8" fill="#008000" />
<rect x="411.0" y="309.1" width="3.0" height="29.9" fill="#008000" />
<rect x="417.0" y="322.1" width="3.0" height="16.9" fill="#008000" />
<rect x="423.0" y="326.2" width="3.0" height="12.8" fill="#008000" />
<rect x="429.0" y="327.2" width="3.0" height="11.8" fill="#008000" />
<rect x="435.0" y="326.2" width="3.0" height="12.8" fill="#008000" />
<rect x="441.0" y="307.3" width="3.0" height="31.7" fill="#008000" />
<rect x="447.0" y="321.1" width="3.0" height="17.9" fill="#008000" />
<rect x="459.0" y="327.2" width="3.0" height="11.8" fill="#008000" />
<rect x="465.0" y="316.2" width="3.0" height="22.8" fill="#008000" />
<rect x="471.0" y="334.1" width="3.0" height="4.9" fill="#008000" />
<rect x="477.0" y="331.2" width="3.0" height="7.8" fill="#008000" />
<rect x="483.0" y="337.3" width="3.0" height="1.7" fill="#008000" />
<rect x="489.0" y="335.1" width="3.0" height="3.9" fill="#008000" />
<rect x="495.0" y="337.3" width="3.0" height="1.7" fill="#008000" />
<rect x="501.0" y="334.1" width="3.0" height="4.9" fill="#008000" />
<rect x="507.0" y="337.3" width="3.0" height="1.7" fill="#008000" />
<rect x="513.0" y="338.1" width="3.0" height="0.9" fill="#008000" />
<rect x="519.0" y="336.1" width="3.0" height="2.9" fill="#008000" />
<rect x="525.0" y="334.1" width="3.0" height="4.9" fill="#008000" />
<rect x="531.0" y="332.2" width="3.0" height="6.8" fill="#008000" />
<rect x="537.0" y="335.1" width="3.0" height="3.9" fill="#008000" />
<rect x="543.0" y="324.3" width="3.0" height="14.7" fill="#008000" />
<rect x="549.0" y="336.1" width="3.0" height="2.9" fill="#008000" />
<rect x="555.0" y="338.1" width="3.0" height="0.9" fill="#008000" />
<rect x="561.0" y="334.1" width="3.0" height="4.9" fill="#008000" />
<rect x="567.0" y="336.1" width="3.0" height="2.9" fill="#008000" />
<rect x="573.0" y="336.1" width="3.0" height="2.9" fill="#008000" />
<rect x="591.0" y="338.1" width="3.0" height="0.9" fill="#008000" />
<rect x="597.0" y="336.1" width="3.0" height="2.9" fill="#008000" />
<rect x="609.0" y="331.8" width="3.0" height="7.2" fill="#008000" />
<rect x="615.0" y="336.8" width="3.0" height="2.2" fill="#008000" />
<rect x="621.0" y="338.0" width="3.0" height="1.0" fill="#008000" />
<rect x="639.0" y="338.0" width="3.0" height="1.0" fill="#008000" />
<rect x="645.0" y="338.0" width="3.0" height="1.0" fill="#008000" />
<rect x="669.0" y="338.0" width="3.0" height="1.0" fill="#008000" />
<rect x="675.0" y="336.8" width="3.0" height="2.2" fill="#008000" />
<rect x="681.0" y="336.8" width="3.0" height="2.2" fill="#008000" />
<rect x="699.0" y="334.0" width="3.0" height="5.0" fill="#008000" />
<rect x="705.0" y="338.0" width="3.0" height="1.0" fill="#008000" />
<rect x="711.0" y="338.0" width="3.0" height="1.0" fill="#008000" />
<rect x="717.0" y="338.0" width="3.0" height="1.0" fill="#008000" />
<rect x="729.0" y="331.8" width="3.0" height="7.2" fill="#008000" />
<rect x="741.0" y="338.0" width="3.0" height="1.0" fill="#008000" />
<rect x="753.0" y="336.8" width="3.0" height="2.2" fill="#008000" />
<rect x="789.0" y="338.0" width="3.0" height="1.0" fill="#008000" />
<rect x="813.0" y="338.0" width="3.0" height="1.0" fill="#008000" />
<rect x="825.0" y="332.8" width="3.0" height="6.2" fill="#008000" />
<rect x="831.0" y="335.0" width="3.0" height="4.0" fill="#008000" />
<rect x="837.0" y="338.0" width="3.0" height="1.0" fill="#008000" />
<rect x="849.0" y="335.0" width="3.0" height="4.0" fill="#008000" />
<rect x="855.0" y="338.0" width="3.0" height="1.0" fill="#008000" />
<rect x="867.0" y="335.0" width="3.0" height="4.0" fill="#008000" />
<rect x="879.0" y="336.8" width="3.0" height="2.2" fill="#008000" />
<rect x="897.0" y="338.0" width="3.0" height="1.0" fill="#008000" />
<rect x="903.0" y="338.0" width="3.0" height="1.0" fill="#008000" />
<rect x="909.0" y="336.0" width="3.0" height="3.0" fill="#008000" />
<rect x="915.0" y="335.0" width="3.0" height="4.0" fill="#008000" />
<rect x="921.0" y="332.8" width="3.0" height="6.2" fill="#008000" />
<rect x="927.0" y="331.8" width="3.0" height="7.2" fill="#008000" />
<rect x="933.0" y="326.7" width="3.0" height="12.3" fill="#008000" />
<rect x="939.0" y="336.0" width="3.0" height="3.0" fill="#008000" />
<rect x="945.0" y="336.8" width="3.0" height="2.2" fill="#008000" />
<rect x="951.0" y="323.8" width="3.0" height="15.2" fill="#008000" />
<rect x="957.0" y="329.9" width="3.0" height="9.1" fill="#008000" />
<rect x="963.0" y="335.0" width="3.0" height="4.0" fill="#008000" />
<rect x="969.0" y="331.8" width="3.0" height="7.2" fill="#008000" />
<rect x="975.0" y="338.0" width="3.0" height="1.0" fill="#008000" />
<rect x="981.0" y="336.8" width="3.0" height="2.2" fill="#008000" />
<rect x="987.0" y="338.0" width="3.0" height="1.0" fill="#008000" />
<rect x="999.0" y="336.8" width="3.0" height="2.2" fill="#008000" />
<rect x="1005.0" y="338.0" width="3.0" height="1.0" fill="#008000" />
<rect x="1017.0" y="338.0" width="3.0" height="1.0" fill="#008000" />
<rect x="1023.0" y="336.8" width="3.0" height="2.2" fill="#008000" />
<rect x="1041.0" y="336.0" width="3.0" height="3.0" fill="#008000" />
<rect x="1047.0" y="338.0" width="3.0" height="1.0" fill="#008000" />
<rect x="1053.0" y="336.8" width="3.0" height="2.2" fill="#008000" />
<rect x="1071.0" y="338.0" width="3.0" height="1.0" fill="#008000" />
<rect x="1077.0" y="338.0" width="3.0" height="1.0" fill="#008000" />
<rect x="1101.0" y="338.0" width="3.0" height="1.0" fill="#008000" />
<rect x="1113.0" y="336.0" width="3.0" height="3.0" fill="#008000" />
<line x1="0" y1="339.5" x2="1117" y2="339.5" stroke="#000" stroke-width="1" />
<line x1="0" y1="424.5" x2="1117" y2="424.5" stroke="#808080" stroke-width="1" />
<rect x="4.0" y="425.0" width="1.0" height="2.5" fill="#f00" />
<rect x="10.0" y="421.7" width="1.0" height="2.3" fill="#f00" />
<rect x="16.0" y="418.1" width="1.0" height="5.9" fill="#f00" />
<rect x="22.0" y="417.2" width="1.0" height="6.8" fill="#f00" />
<rect x="28.0" y="416.8" width="1.0" height="7.2" fill="#f00" />
<rect x="34.0" y="416.5" width="1.0" height="7.5" fill="#f00" />
<rect x="40.0" y="416.5" width="1.0" height="7.5" fill="#f00" />
<rect x="46.0" y="416.6" width="1.0" height="7.4" fill="#f00" />
<rect x="52.0" y="416.1" width="1.0" height="7.9" fill="#f00" />
<rect x="58.0" y="413.0" width="1.0" height="11.0" fill="#f00" />
<rect x="64.0" y="412.9" width="1.0" height="11.1" fill="#f00" />
<rect x="70.0" y="413.8" width="1.0" height="10.2" fill="#f00" />
<rect x="76.0" y="415.8" width="1.0" height="8.2" fill="#f00" />
<rect x="82.0" y="418.6" width="1.0" height="5.4" fill="#f00" />
<rect x="88.0" y="420.9" width="1.0" height="3.1" fill="#f00" />
<rect x="94.0" y="422.5" width="1.0" height="1.5" fill="#f00" />
<rect x="100.0" y="422.9" width="1.0" height="1.1" fill="#f00" />
<rect x="106.0" y="423.2" width="1.0" height="0.8" fill="#f00" />
<rect x="112.0" y="424.0" width="1.0" height="1.0" fill="#f00" />
<rect x="166.0" y="421.3" width="1.0" height="2.7" fill="#f00" />
<rect x="172.0" y="418.1" width="1.0" height="5.9" fill="#f00" />
<rect x="178.0" y="416.5" width="1.0" height="7.5" fill="#f00" />
<rect x="184.0" y="416.2" width="1.0" height="7.8" fill="#f00" />
<rect x="190.0" y="416.1" width="1.0" height="7.9" fill="#f00" />
<rect x="196.0" y="416.2" width="1.0" height="7.8" fill="#f00" />
<rect x="202.0" y="417.0" width="1.0" height="7.0" fill="#f00" />
<rect x="208.0" y="417.6" width="1.0" height="6.4" fill="#f00" />
<rect x="214.0" y="417.5" width="1.0" height="6.5" fill="#f00" />
<rect x="220.0" y="417.3" width="1.0" height="6.7" fill="#f00" />
<rect x="226.0" y="418.4" width="1.0" height="5.6" fill="#f00" />
<rect x="232.0" y="419.5" width="1.0" height="4.5" fill="#f00" />
<rect x="238.0" y="420.4" width="1.0" height="3.6" fill="#f00" />
<rect x="244.0" y="421.0" width="1.0" height="3.0" fill="#f00" />
<rect x="250.0" y="423.2" width="1.0" height="0.8" fill="#f00" />
<rect x="256.0" y="424.0" width="1.0" height="1.0" fill="#f00" />
<rect x="262.0" y="425.0" width="1.0" height="1.9" fill="#f00" />
<rect x="268.0" y="425.0" width="1.0" height="4.1" fill="#f00" />
<rect x="274.0" y="425.0" width="1.0" height="7.6" fill="#f00" />
<rect x="280.0" y="425.0" width="1.0" height="10.3" fill="#f00" />
<rect x="286.0" y="425.0" width="1.0" height="12.5" fill="#f00" />
<rect x="292.0" y="425.0" width="1.0" height="13.1" fill="#f00" />
<rect x="298.0" y="425.0" width="1.0" height="13.4" fill="#f00" />
<rect x="304.0" y="425.0" width="1.0" height="14.0" fill="#f00" />
<rect x="310.0" y="425.0" width="1.0" height="13.5" fill="#f00" />
<rect x="316.0" y="425.0" width="1.0" height="12.5" fill="#f00" />
<rect x="322.0" y="425.0" width="1.0" height="12.7" fill="#f00" />
<rect x="328.0" y="425.0" width="1.0" height="10.5" fill="#f00" />
<rect x="334.0" y="425.0" width="1.0" height="8.5" fill="#f00" />
<rect x="340.0" y="425.0" width="1.0" height="5.1" fill="#f00" />
<rect x="346.0" y="425.0" width="1.0" height="3.1" fill="#f00" />
<rect x="352.0" y="425.0" width="1.0" height="1.9" fill="#f00" />
<rect x="358.0" y="425.0" width="1.0" height="1.6" fill="#f00" />
<rect x="364.0" y="422.8" width="1.0" height="1.2" fill="#f00" />
<rect x="370.0" y="422.5" width="1.0" height="1.5" fill="#f00" />
<rect x="376.0" y="422.2" width="1.0" height="1.8" fill="#f00" />
<rect x="382.0" y="422.3" width="1.0" height="1.7" fill="#f00" />
<rect x="388.0" y="423.1" width="1.0" height="0.9" fill="#f00" />
<rect x="394.0" y="425.0" width="1.0" height="0.8" fill="#f00" />
<rect x="400.0" y="425.0" width="1.0" height="0.7" fill="#f00" />
<rect x="406.0" y="424.0" width="1.0" height="1.0" fill="#f00" />
<rect x="412.0" y="424.0" width="1.0" height="1.0" fill="#f00" />
<rect x="418.0" y="422.4" width="1.0" height="1.6" fill="#f00" />
<rect x="424.0" y="422.5" width="1.0" height="1.5" fill="#f00" />
<rect x="430.0" y="422.4" width="1.0" height="1.6" fill="#f00" />
<rect x="436.0" y="423.4" width="1.0" height="0.6" fill="#f00" />
<rect x="442.0" y="424.0" width="1.0" height="1.0" fill="#f00" />
<rect x="448.0" y="425.0" width="1.0" height="0.7" fill="#f00" />
<rect x="454.0" y="424.0" width="1.0" height="1.0" fill="#f00" />
<rect x="460.0" y="425.0" width="1.0" height="1.0" fill="#f00" />
<rect x="466.0" y="425.0" width="1.0" height="5.2" fill="#f00" />
<rect x="472.0" y="425.0" width="1.0" height="10.8" fill="#f00" />
<rect x="478.0" y="425.0" width="1.0" height="11.9" fill="#f00" />
<rect x="484.0" y="425.0" width="1.0" height="11.5" fill="#f00" />
<rect x="490.0" y="425.0" width="1.0" height="11.5" fill="#f00" />
<rect x="496.0" y="425.0" width="1.0" height="11.2" fill="#f00" />
<rect x="502.0" y="425.0" width="1.0" height="10.4" fill="#f00" />
<rect x="508.0" y="425.0" width="1.0" height="8.6" fill="#f00" />
<rect x="514.0" y="425.0" width="1.0" height="6.5" fill="#f00" />
<rect x="520.0" y="425.0" width="1.0" height="5.2" fill="#f00" />
<rect x="526.0" y="425.0" width="1.0" height="2.9" fill="#f00" />
<rect x="532.0" y="425.0" width="1.0" height="1.0" fill="#f00" />
<rect x="538.0" y="425.0" width="1.0" height="0.6" fill="#f00" />
<rect x="544.0" y="422.8" width="1.0" height="1.2" fill="#f00" />
<rect x="550.0" y="421.6" width="1.0" height="2.4" fill="#f00" />
<rect x="556.0" y="420.7" width="1.0" height="3.3" fill="#f00" />
<rect x="562.0" y="419.8" width="1.0" height="4.2" fill="#f00" />
<rect x="568.0" y="420.1" width="1.0" height="3.9" fill="#f00" />
<rect x="574.0" y="421.0" width="1.0" height="3.0" fill="#f00" />
<rect x="580.0" y="421.6" width="1.0" height="2.4" fill="#f00" />
<rect x="586.0" y="422.3" width="1.0" height="1.7" fill="#f00" />
<rect x="592.0" y="423.1" width="1.0" height="0.9" fill="#f00" />
<rect x="598.0" y="421.9" width="1.0" height="2.1" fill="#f00" />
<rect x="604.0" y="420.3" width="1.0" height="3.7" fill="#f00" />
<rect x="610.0" y="420.2" width="1.0" height="3.8" fill="#f00" />
<rect x="616.0" y="421.2" width="1.0" height="2.8" fill="#f00" />
<rect x="622.0" y="421.7" width="1.0" height="2.3" fill="#f00" />
<rect x="628.0" y="422.4" width="1.0" height="1.6" fill="#f00" />
<rect x="634.0" y="422.9" width="1.0" height="1.1" fill="#f00" />
<rect x="640.0" y="423.0" width="1.0" height="1.0" fill="#f00" />
<rect x="646.0" y="423.1" width="1.0" height="0.9" fill="#f00" />
<rect x="652.0" y="422.8" width="1.0" height="1.2" fill="#f00" />
<rect x="658.0" y="423.2" width="1.0" height="0.8" fill="#f00" />
<rect x="664.0" y="423.4" width="1.0" height="0.6" fill="#f00" />
<rect x="670.0" y="424.0" width="1.0" height="1.0" fill="#f00" />
<rect x="676.0" y="424.0" width="1.0" height="1.0" fill="#f00" />
<rect x="682.0" y="424.0" width="1.0" height="1.0" fill="#f00" />
<rect x="688.0" y="425.0" width="1.0" height="1.3" fill="#f00" />
<rect x="694.0" y="425.0" width="1.0" height="1.1" fill="#f00" />
<rect x="700.0" y="425.0" width="1.0" height="1.1" fill="#f00" />
<rect x="706.0" y="425.0" width="1.0" height="1.8" fill="#f00" />
<rect x="712.0" y="425.0" width="1.0" height="2.3" fill="#f00" />
<rect x="718.0" y="425.0" width="1.0" height="2.8" fill="#f00" />
<rect x="724.0" y="425.0" width="1.0" height="2.9" fill="#f00" />
<rect x="730.0" y="425.0" width="1.0" height="0.9" fill="#f00" />
<rect x="736.0" y="424.0" width="1.0" height="1.0" fill="#f00" />
<rect x="742.0" y="424.0" width="1.0" height="1.0" fill="#f00" />
<rect x="748.0" y="424.0" width="1.0" height="1.0" fill="#f00" />
<rect x="766.0" y="425.0" width="1.0" height="0.7" fill="#f00" />
<rect x="772.0" y="424.0" width="1.0" height="1.0" fill="#f00" />
<rect x="784.0" y="424.0" width="1.0" height="1.0" fill="#f00" />
<rect x="790.0" y="424.0" width="1.0" height="1.0" fill="#f00" />
<rect x="796.0" y="424.0" width="1.0" height="1.0" fill="#f00" />
<rect x="802.0" y="423.2" width="1.0" height="0.8" fill="#f00" />
<rect x="808.0" y="423.0" width="1.0" height="1.0" fill="#f00" />
<rect x="814.0" y="422.8" width="1.0" height="1.2" fill="#f00" />
<rect x="820.0" y="424.0" width="1.0" height="1.0" fill="#f00" />
<rect x="832.0" y="424.0" width="1.0" height="1.0" fill="#f00" />
<rect x="838.0" y="425.0" width="1.0" height="0.9" fill="#f00" />
<rect x="844.0" y="425.0" width="1.0" height="1.2" fill="#f00" />
<rect x="850.0" y="425.0" width="1.0" height="2.6" fill="#f00" />
<rect x="856.0" y="425.0" width="1.0" height="4.2" fill="#f00" />
<rect x="862.0" y="425.0" width="1.0" height="5.1" fill="#f00" />
<rect x="868.0" y="425.0" width="1.0" height="5.7" fill="#f00" />
<rect x="874.0" y="425.0" width="1.0" height="5.6" fill="#f00" />
<rect x="880.0" y="425.0" width="1.0" height="4.1" fill="#f00" />
<rect x="886.0" y="425.0" width="1.0" height="3.1" fill="#f00" />
<rect x="892.0" y="425.0" width="1.0" height="1.9" fill="#f00" />
<rect x="898.0" y="425.0" width="1.0" height="1.1" fill="#f00" />
<rect x="904.0" y="424.0" width="1.0" height="1.0" fill="#f00" />
<rect x="910.0" y="424.0" width="1.0" height="1.0" fill="#f00" />
<rect x="916.0" y="422.4" width="1.0" height="1.6" fill="#f00" />
<rect x="922.0" y="421.3" width="1.0" height="2.7" fill="#f00" />
<rect x="928.0" y="419.7" width="1.0" height="4.3" fill="#f00" />
<rect x="934.0" y="417.7" width="1.0" height="6.3" fill="#f00" />
<rect x="940.0" y="415.6" width="1.0" height="8.4" fill="#f00" />
<rect x="946.0" y="417.9" width="1.0" height="6.1" fill="#f00" />
<rect x="952.0" y="422.2" width="1.0" height="1.8" fill="#f00" />
<rect x="958.0" y="425.0" width="1.0" height="0.8" fill="#f00" />
<rect x="964.0" y="425.0" width="1.0" height="2.7" fill="#f00" />
<rect x="970.0" y="425.0" width="1.0" height="1.8" fill="#f00" />
<rect x="976.0" y="425.0" width="1.0" height="1.9" fill="#f00" />
<rect x="982.0" y="425.0" width="1.0" height="1.8" fill="#f00" />
<rect x="988.0" y="425.0" width="1.0" height="1.4" fill="#f00" />
<rect x="994.0" y="425.0" width="1.0" height="1.0" fill="#f00" />
<rect x="1000.0" y="424.0" width="1.0" height="1.0" fill="#f00" />
<rect x="1006.0" y="422.2" width="1.0" height="1.8" fill="#f00" />
<rect x="1012.0" y="422.5" width="1.0" height="1.5" fill="#f00" />
<rect x="1018.0" y="423.0" width="1.0" height="1.0" fill="#f00" />
<rect x="1024.0" y="424.0" width="1.0" height="1.0" fill="#f00" />
<rect x="1030.0" y="424.0" width="1.0" height="1.0" fill="#f00" />
<rect x="1036.0" y="423.1" width="1.0" height="0.9" fill="#f00" />
<rect x="1042.0" y="421.9" width="1.0" height="2.1" fill="#f00" />
<rect x="1048.0" y="420.8" width="1.0" height="3.2" fill="#f00" />
<rect x="1054.0" y="420.4" width="1.0" height="3.6" fill="#f00" />
<rect x="1060.0" y="420.5" width="1.0" height="3.5" fill="#f00" />
<rect x="1066.0" y="420.1" width="1.0" height="3.9" fill="#f00" />
<rect x="1072.0" y="419.6" width="1.0" height="4.4" fill="#f00" />
<rect x="1078.0" y="419.1" width="1.0" height="4.9" fill="#f00" />
<rect x="1084.0" y="418.9" width="1.0" height="5.1" fill="#f00" />
<rect x="1090.0" y="419.3" width="1.0" height="4.7" fill="#f00" />
<rect x="1096.0" y="421.3" width="1.0" height="2.7" fill="#f00" />
<rect x="1102.0" y="422.6" width="1.0" height="1.4" fill="#f00" />
<rect x="1108.0" y="423.3" width="1.0" height="0.7" fill="#f00" />
<rect x="1114.0" y="425.0" width="1.0" height="0.8" fill="#f00" />
<g shape-rendering="crispEdges" stroke-linejoin="round">
<polyline points="0.0,425.8 4.0,427.3 9.1,422.8 16.2,415.7 24.3,411.7 34.4,408.0 42.5,405.6 51.6,403.6 54.6,401.0 58.6,396.5 63.7,392.9 68.7,391.5 76.8,391.5 84.9,392.9 93.0,394.5 109.2,395.5 121.3,396.1 161.7,396.1 167.8,391.5 175.9,385.4 184.0,382.4 194.1,378.7 202.2,377.3 210.3,376.3 220.4,372.7 228.5,372.3 244.6,372.3 250.7,374.3 260.8,376.3 268.9,380.3 275.0,385.4 280.0,389.4 288.1,397.5 296.2,402.6 304.3,407.0 312.3,410.7 322.5,415.7 333.6,416.7 340.7,414.3 348.7,413.1 358.9,412.7 364.9,409.7 371.0,408.7 381.1,408.3 389.2,409.3 399.3,411.1 409.4,410.3 418.5,408.7 425.6,407.6 441.7,407.6 451.9,409.7 461.0,410.3 466.0,415.7 472.1,423.8 478.1,427.9 486.2,430.9 494.3,434.5 502.4,436.6 510.5,437.0 520.6,436.6 526.7,435.3 534.8,433.9 540.8,433.9 546.9,430.9 552.9,428.9 560.0,426.4 566.1,424.4 594.4,424.4 602.5,420.8 608.5,419.4 624.7,419.4 630.8,420.4 649.0,420.4 653.0,419.4 681.3,420.4 689.4,422.4 701.5,423.8 711.6,425.8 719.7,427.9 725.8,428.3 731.9,425.8 764.2,425.4 770.3,427.3 774.3,426.4 802.6,425.4 814.8,423.4 822.8,423.8 832.9,424.8 840.0,425.8 846.1,426.9 856.2,431.3 866.3,434.5 874.4,437.0 888.5,437.0 900.7,435.3 910.8,433.9 920.9,431.3 929.0,427.9 935.0,423.8 941.1,419.8 945.1,420.4 951.2,424.4 957.3,426.9 965.4,430.3 981.5,430.3 995.7,429.3 1005.8,426.4 1013.9,425.4 1030.1,424.8 1038.1,423.8 1046.2,420.8 1054.3,418.8 1062.4,417.3 1072.5,414.7 1082.6,412.3 1090.7,411.3 1100.8,412.7 1108.9,413.7 1114.0,415.1" fill="none" stroke="#ff0" stroke-width="1" />
<polyline points="0.0,424.8 10.1,423.8 18.2,420.8 30.3,416.7 42.5,413.1 52.6,410.7 58.6,407.6 64.7,403.6 76.8,399.6 84.9,397.1 93.0,396.1 161.7,396.1 171.9,394.1 182.0,390.9 192.1,387.4 202.2,384.4 212.3,382.0 222.4,378.7 232.5,376.7 242.6,375.3 252.7,374.9 264.9,375.3 272.9,376.9 280.0,379.3 288.1,384.4 296.2,389.4 308.3,394.9 316.4,400.2 322.5,403.0 331.6,407.2 340.7,409.3 350.8,411.1 364.9,411.1 369.0,410.3 391.2,410.1 395.2,409.3 399.3,410.3 418.5,410.3 423.6,409.3 431.6,409.3 435.7,408.3 449.8,408.3 451.9,409.3 461.0,409.3 472.1,413.1 482.2,417.8 496.3,423.8 504.4,426.9 514.5,430.3 526.7,432.5 532.7,433.3 544.9,433.3 552.9,431.5 560.0,430.5 570.1,427.9 584.3,426.4 596.4,424.8 606.5,423.8 618.6,421.8 649.0,421.2 655.0,420.4 685.4,420.4 697.5,422.4 709.6,423.2 715.7,424.4 725.8,425.4 770.3,425.4 772.3,426.2 802.6,426.2 812.7,424.8 820.8,423.8 840.0,424.8 852.1,426.4 866.3,428.9 878.4,432.5 890.5,434.5 906.7,434.5 918.9,433.9 929.0,432.3 939.1,428.9 949.2,426.9 961.3,426.4 969.4,428.5 1005.8,428.3 1013.9,426.9 1026.0,425.4 1038.1,424.8 1050.3,423.2 1060.4,421.2 1072.5,419.2 1086.7,416.7 1098.8,414.3 1114.0,414.3" fill="none" stroke="#00f" stroke-width="1" />
</g>
<line x1="0" y1="482.5" x2="1117" y2="482.5" stroke="#00f" stroke-width="1" />
<line x1="0" y1="526.5" x2="1117" y2="526.5" stroke="#f00" stroke-width="1" />
<g shape-rendering="crispEdges" stroke-linejoin="round">
<polyline points="0.0,516.3 4.5,516.3 10.5,509.1 16.5,501.2 22.5,492.8 28.5,490.8 34.5,490.1 40.5,488.5 46.5,487.0 52.5,483.9 58.5,480.7 64.5,478.4 70.5,479.5 76.5,486.0 82.5,491.1 88.5,496.1 94.5,500.9 100.5,504.1 106.5,506.2 112.5,506.7 118.5,506.2 124.5,503.3 130.5,501.5 136.5,500.5 142.5,503.3 148.5,501.5 154.5,499.0 160.5,495.4 166.5,490.8 172.5,485.3 178.5,479.2 184.5,478.8 190.5,479.5 196.5,479.2 202.5,478.2 208.5,477.8 214.5,475.2 220.5,474.2 226.5,474.0 232.5,474.0 238.5,473.7 244.5,473.7 250.5,475.8 256.5,478.2 262.5,480.2 268.5,483.3 274.5,489.3 280.5,502.5 286.5,515.0 292.5,523.7 298.5,525.7 304.5,527.3 310.5,527.1 316.5,527.7 322.5,529.1 328.5,529.1 334.5,526.7 340.5,518.6 346.5,510.5 352.5,503.5 358.5,498.8 364.5,492.3 370.5,485.9 376.5,485.3 382.5,487.9 388.5,489.9 394.5,490.3 400.5,492.3 406.5,492.3 412.5,492.3 418.5,488.7 424.5,485.9 430.5,485.9 436.5,486.7 442.5,487.3 448.5,491.3 454.5,494.8 460.5,498.4 466.5,504.5 472.5,512.2 478.5,520.7 484.5,523.1 490.5,524.3 496.5,526.3 502.5,527.1 508.5,527.3 514.5,525.7 520.5,525.1 526.5,521.7 532.5,518.6 538.5,515.6 544.5,509.5 550.5,499.4 556.5,487.3 562.5,480.2 568.5,477.8 574.5,479.2 580.5,486.3 586.5,490.3 592.5,493.4 598.5,489.3 604.5,483.3 610.5,478.8 616.5,480.2 622.5,485.3 628.5,495.4 634.5,504.5 640.5,508.5 646.5,506.5 652.5,500.0 658.5,499.4 664.5,499.0 670.5,500.4 676.5,504.5 682.5,513.0 688.5,522.7 694.5,525.7 700.5,527.3 706.5,528.7 712.5,531.2 718.5,530.4 724.5,526.3 730.5,518.6 736.5,509.5 742.5,501.4 748.5,499.4 754.5,501.4 760.5,502.9 766.5,508.1 772.5,513.0 778.5,514.2 784.5,512.2 790.5,508.5 796.5,506.5 802.5,507.5 808.5,506.1 814.5,503.1 820.5,498.8 826.5,500.4 832.5,504.5 838.5,509.5 844.5,511.2 850.5,514.6 856.5,519.0 862.5,525.7 868.5,531.2 874.5,536.4 880.5,535.4 886.5,533.2 892.5,528.3 898.5,525.1 904.5,520.7 910.5,513.0 916.5,504.1 922.5,496.0 928.5,490.3 934.5,485.9 940.5,482.2 946.5,484.3 952.5,494.4 958.5,507.5 964.5,519.2 970.5,522.3 976.5,522.3 982.5,519.6 988.5,517.6 994.5,516.0 1000.5,513.2 1006.5,510.6 1012.5,506.9 1018.5,503.3 1024.5,500.9 1030.5,498.3 1036.5,496.6 1042.5,491.1 1048.5,485.6 1054.5,479.2 1060.5,477.4 1066.5,477.4 1072.5,477.4 1078.5,477.4 1084.5,477.4 1090.5,479.2 1096.5,483.1 1102.5,485.6 1108.5,488.9 1114.5,494.7" fill="none" stroke="#f00" stroke-width="1" />
<polyline points="0.0,514.0 4.5,517.0 10.5,498.3 16.5,489.3 22.5,492.5 28.5,490.4 34.5,489.3 40.5,485.6 46.5,486.0 52.5,481.0 58.5,474.5 64.5,478.8 70.5,485.3 76.5,491.1 82.5,493.2 88.5,500.5 94.5,505.2 100.5,505.2 106.5,508.4 112.5,506.2 118.5,504.8 124.5,499.4 130.5,501.2 136.5,501.9 142.5,508.1 148.5,494.2 154.5,495.4 160.5,495.4 166.5,481.3 172.5,477.4 178.5,478.4 184.5,479.8 190.5,479.5 196.5,479.2 202.5,476.6 208.5,478.2 214.5,473.7 220.5,473.7 226.5,473.7 232.5,473.7 238.5,473.7 244.5,473.7 250.5,478.2 256.5,481.8 262.5,479.8 268.5,488.3 274.5,499.4 280.5,519.6 286.5,525.7 292.5,524.7 298.5,527.7 304.5,530.4 310.5,524.7 316.5,527.7 322.5,535.2 328.5,525.7 334.5,521.7 340.5,508.5 346.5,502.1 352.5,500.4 358.5,494.4 364.5,481.2 370.5,484.3 376.5,491.3 382.5,488.3 388.5,490.3 394.5,491.3 400.5,496.4 406.5,491.3 412.5,489.3 418.5,485.9 424.5,482.6 430.5,487.3 436.5,490.3 442.5,485.9 448.5,501.4 454.5,503.5 460.5,497.4 466.5,516.6 472.5,522.7 478.5,525.1 484.5,523.1 490.5,525.1 496.5,530.2 502.5,525.7 508.5,527.1 514.5,524.3 520.5,525.1 526.5,517.0 532.5,513.0 538.5,515.0 544.5,499.4 550.5,483.9 556.5,481.2 562.5,475.2 568.5,477.2 574.5,485.3 580.5,495.4 586.5,493.4 592.5,493.4 598.5,481.2 604.5,474.6 610.5,478.2 616.5,488.3 622.5,492.3 628.5,507.5 634.5,515.0 640.5,501.4 646.5,503.1 652.5,494.8 658.5,499.4 664.5,502.1 670.5,503.5 676.5,509.5 682.5,524.3 688.5,533.2 694.5,519.6 700.5,529.8 706.5,535.2 712.5,528.7 718.5,526.3 724.5,524.3 730.5,506.5 736.5,496.8 742.5,500.4 748.5,502.5 754.5,502.9 760.5,503.5 766.5,513.0 772.5,518.2 778.5,510.5 784.5,508.1 790.5,506.5 796.5,505.5 802.5,511.0 808.5,501.4 814.5,497.4 820.5,495.4 826.5,508.9 832.5,509.5 838.5,511.2 844.5,511.6 850.5,519.6 856.5,524.3 862.5,533.2 868.5,537.2 874.5,539.3 880.5,529.1 886.5,530.4 892.5,525.1 898.5,520.7 904.5,516.6 910.5,501.4 916.5,494.4 922.5,490.3 928.5,485.9 934.5,481.2 940.5,479.6 946.5,490.3 952.5,512.6 958.5,519.6 964.5,526.3 970.5,521.7 976.5,519.6 982.5,518.6 988.5,513.2 994.5,515.0 1000.5,512.7 1006.5,505.8 1012.5,502.9 1018.5,499.4 1024.5,499.0 1030.5,496.6 1036.5,494.7 1042.5,481.7 1048.5,480.7 1054.5,474.2 1060.5,477.4 1066.5,480.3 1072.5,474.2 1078.5,477.4 1084.5,480.3 1090.5,481.4 1096.5,489.3 1102.5,486.5 1108.5,491.1 1114.5,508.7" fill="none" stroke="#00f" stroke-width="1" />
</g>
<rect x="1117.0" y="19.0" width="1.0" height="568.0" fill="#000" />
<line x1="0" y1="554.5" x2="1175" y2="554.5" stroke="#000" stroke-width="1" />
<line x1="0" y1="586.5" x2="1175" y2="586.5" stroke="#f2f2f2" stroke-width="1" />
<line x1="0" y1="586.5" x2="13" y2="586.5" stroke="#cfcfcf" stroke-width="1" />
<line x1="380" y1="586.5" x2="684" y2="586.5" stroke="#cfcfcf" stroke-width="1" />
<line x1="840" y1="586.5" x2="856" y2="586.5" stroke="#cfcfcf" stroke-width="1" />
<line x1="977" y1="586.5" x2="1175" y2="586.5" stroke="#cfcfcf" stroke-width="1" />
<line x1="1117" y1="37.5" x2="1123" y2="37.5" stroke="#000" stroke-width="1" />
<text transform="translate(1125.0,43.0) scale(0.88,1)" x="3.41 10.23 17.05 23.86 30.68" text-anchor="middle" font-size="12.0" fill="#000" class="ls">9,000</text>
<line x1="1117" y1="74.5" x2="1123" y2="74.5" stroke="#000" stroke-width="1" />
<text transform="translate(1125.0,80.0) scale(0.88,1)" x="3.41 10.23 17.05 23.86 30.68" text-anchor="middle" font-size="12.0" fill="#000" class="ls">8,970</text>
<line x1="1117" y1="111.5" x2="1123" y2="111.5" stroke="#000" stroke-width="1" />
<text transform="translate(1125.0,117.0) scale(0.88,1)" x="3.41 10.23 17.05 23.86 30.68" text-anchor="middle" font-size="12.0" fill="#000" class="ls">8,940</text>
<line x1="1117" y1="148.5" x2="1123" y2="148.5" stroke="#000" stroke-width="1" />
<text transform="translate(1125.0,154.0) scale(0.88,1)" x="3.41 10.23 17.05 23.86 30.68" text-anchor="middle" font-size="12.0" fill="#000" class="ls">8,910</text>
<line x1="1117" y1="185.5" x2="1123" y2="185.5" stroke="#000" stroke-width="1" />
<text transform="translate(1125.0,191.0) scale(0.88,1)" x="3.41 10.23 17.05 23.86 30.68" text-anchor="middle" font-size="12.0" fill="#000" class="ls">8,880</text>
<line x1="1117" y1="222.5" x2="1123" y2="222.5" stroke="#000" stroke-width="1" />
<text transform="translate(1125.0,228.0) scale(0.88,1)" x="3.41 10.23 17.05 23.86 30.68" text-anchor="middle" font-size="12.0" fill="#000" class="ls">8,850</text>
<line x1="1117" y1="272.5" x2="1123" y2="272.5" stroke="#000" stroke-width="1" />
<text transform="translate(1125.0,278.0) scale(0.88,1)" x="3.41 10.23 17.05 23.86 30.68 37.50" text-anchor="middle" font-size="12.0" fill="#000" class="ls">295.00</text>
<line x1="1117" y1="309.5" x2="1123" y2="309.5" stroke="#000" stroke-width="1" />
<text transform="translate(1125.0,315.0) scale(0.88,1)" x="3.41 10.23 17.05 23.86 30.68 37.50" text-anchor="middle" font-size="12.0" fill="#000" class="ls">130.00</text>
<line x1="1117" y1="372.5" x2="1123" y2="372.5" stroke="#000" stroke-width="1" />
<text transform="translate(1125.0,378.0) scale(0.88,1)" x="3.41 10.23 17.05 23.86 30.68" text-anchor="middle" font-size="12.0" fill="#000" class="ls">22.00</text>
<line x1="1117" y1="410.5" x2="1123" y2="410.5" stroke="#000" stroke-width="1" />
<text transform="translate(1125.0,416.0) scale(0.88,1)" x="3.41 10.23 17.05 23.86" text-anchor="middle" font-size="12.0" fill="#000" class="ls">6.00</text>
<line x1="1117" y1="472.5" x2="1123" y2="472.5" stroke="#000" stroke-width="1" />
<text transform="translate(1125.0,478.0) scale(0.88,1)" x="3.41 10.23 17.05 23.86 30.68" text-anchor="middle" font-size="12.0" fill="#000" class="ls">95.00</text>
<line x1="1117" y1="512.5" x2="1123" y2="512.5" stroke="#000" stroke-width="1" />
<text transform="translate(1125.0,518.0) scale(0.88,1)" x="3.41 10.23 17.05 23.86 30.68" text-anchor="middle" font-size="12.0" fill="#000" class="ls">40.00</text>
<rect x="1120.5" y="337.5" width="39.0" height="14.0" fill="#fff" stroke="#000" stroke-width="1"/>
<text x="1122.5" y="350" font-size="17" class="la">×</text>
<text transform="translate(1134.5,348.5) scale(0.88,1)" x="3.41 10.23 17.05 23.86" text-anchor="middle" font-size="12.0" fill="#000" class="ls"> 100</text>
<defs><clipPath id="cb"><rect x="0" y="555" width="1117" height="30"/></clipPath></defs>
<g clip-path="url(#cb)">
<rect x="34.0" y="555.0" width="1.0" height="4.0" fill="#000" />
<text transform="translate(33.0,574.0) scale(0.88,1)" x="3.41 10.23 17.05 23.86 30.68" text-anchor="middle" font-size="12.0" fill="#000" class="ls">09:20</text>
<rect x="130.0" y="555.0" width="1.0" height="4.0" fill="#000" />
<text transform="translate(129.0,574.0) scale(0.88,1)" x="3.41 10.23 17.05 23.86 30.68" text-anchor="middle" font-size="12.0" fill="#000" class="ls">10:40</text>
<rect x="226.0" y="555.0" width="1.0" height="4.0" fill="#000" />
<text transform="translate(225.0,574.0) scale(0.88,1)" x="3.41 10.23 17.05 23.86 30.68" text-anchor="middle" font-size="12.0" fill="#000" class="ls">12:00</text>
<rect x="322.0" y="555.0" width="1.0" height="4.0" fill="#000" />
<text transform="translate(321.0,574.0) scale(0.88,1)" x="3.41 10.23 17.05 23.86 30.68" text-anchor="middle" font-size="12.0" fill="#000" class="ls">13:20</text>
<rect x="418.0" y="555.0" width="1.0" height="4.0" fill="#000" />
<text transform="translate(417.0,574.0) scale(0.88,1)" x="3.41 10.23 17.05 23.86 30.68" text-anchor="middle" font-size="12.0" fill="#000" class="ls">14:40</text>
<rect x="526.0" y="555.0" width="1.0" height="4.0" fill="#000" />
<text transform="translate(525.0,574.0) scale(0.88,1)" x="3.41 10.23 17.05 23.86 30.68" text-anchor="middle" font-size="12.0" fill="#000" class="ls">17:20</text>
<rect x="622.0" y="555.0" width="1.0" height="4.0" fill="#000" />
<text transform="translate(621.0,574.0) scale(0.88,1)" x="3.41 10.23 17.05 23.86 30.68" text-anchor="middle" font-size="12.0" fill="#000" class="ls">18:40</text>
<rect x="718.0" y="555.0" width="1.0" height="4.0" fill="#000" />
<text transform="translate(717.0,574.0) scale(0.88,1)" x="3.41 10.23 17.05 23.86 30.68" text-anchor="middle" font-size="12.0" fill="#000" class="ls">20:00</text>
<rect x="814.0" y="555.0" width="1.0" height="4.0" fill="#000" />
<text transform="translate(813.0,574.0) scale(0.88,1)" x="3.41 10.23 17.05 23.86 30.68" text-anchor="middle" font-size="12.0" fill="#000" class="ls">21:20</text>
<rect x="910.0" y="555.0" width="1.0" height="4.0" fill="#000" />
<text transform="translate(909.0,574.0) scale(0.88,1)" x="3.41 10.23 17.05 23.86 30.68" text-anchor="middle" font-size="12.0" fill="#000" class="ls">22:40</text>
<rect x="1006.0" y="555.0" width="1.0" height="9.0" fill="#000" />
<text transform="translate(1005.0,574.0) scale(0.88,1)" x="3.41 10.23 17.05 23.86 30.68" text-anchor="middle" font-size="12.0" fill="#000" class="ls">10/19</text>
<rect x="1102.0" y="555.0" width="1.0" height="4.0" fill="#000" />
<text transform="translate(1101.0,574.0) scale(0.88,1)" x="3.41 10.23 17.05 23.86 30.68" text-anchor="middle" font-size="12.0" fill="#000" class="ls">01:00</text>
</g>
<rect x="1165.0" y="21.0" width="10.0" height="12.0" fill="#fff" />
<line x1="1165" y1="21.5" x2="1175" y2="21.5" stroke="#c8c8c8" stroke-width="1" />
<line x1="1165.5" y1="21" x2="1165.5" y2="33" stroke="#c8c8c8" stroke-width="1" />
<line x1="1165" y1="33.5" x2="1175" y2="33.5" stroke="#909090" stroke-width="1" />
<polygon points="1167,25 1176,25 1172,30 1171,30" fill="#707070" shape-rendering="auto"/>
<rect x="1175.0" y="20.0" width="12.0" height="16.0" fill="#fff" />
<rect x="1165.0" y="257.0" width="10.0" height="12.0" fill="#fff" />
<line x1="1165" y1="257.5" x2="1175" y2="257.5" stroke="#c8c8c8" stroke-width="1" />
<line x1="1165.5" y1="257" x2="1165.5" y2="269" stroke="#c8c8c8" stroke-width="1" />
<line x1="1165" y1="269.5" x2="1175" y2="269.5" stroke="#909090" stroke-width="1" />
<polygon points="1167,261 1176,261 1172,266 1171,266" fill="#707070" shape-rendering="auto"/>
<rect x="1175.0" y="256.0" width="12.0" height="16.0" fill="#fff" />
<rect x="1165.0" y="356.0" width="10.0" height="12.0" fill="#fff" />
<line x1="1165" y1="356.5" x2="1175" y2="356.5" stroke="#c8c8c8" stroke-width="1" />
<line x1="1165.5" y1="356" x2="1165.5" y2="368" stroke="#c8c8c8" stroke-width="1" />
<line x1="1165" y1="368.5" x2="1175" y2="368.5" stroke="#909090" stroke-width="1" />
<polygon points="1167,360 1176,360 1172,365 1171,365" fill="#707070" shape-rendering="auto"/>
<rect x="1175.0" y="355.0" width="12.0" height="16.0" fill="#fff" />
<rect x="1165.0" y="456.0" width="10.0" height="12.0" fill="#fff" />
<line x1="1165" y1="456.5" x2="1175" y2="456.5" stroke="#c8c8c8" stroke-width="1" />
<line x1="1165.5" y1="456" x2="1165.5" y2="468" stroke="#c8c8c8" stroke-width="1" />
<line x1="1165" y1="468.5" x2="1175" y2="468.5" stroke="#909090" stroke-width="1" />
<polygon points="1167,460 1176,460 1172,465 1171,465" fill="#707070" shape-rendering="auto"/>
<rect x="1175.0" y="455.0" width="12.0" height="16.0" fill="#fff" />
<rect x="0.0" y="0.0" width="1175.0" height="19.0" fill="#dcdce1" />
<defs><linearGradient id="bg" x1="0" y1="0" x2="0" y2="1"><stop offset="0" stop-color="#fbfbfc"/><stop offset="0.6" stop-color="#e9e9ec"/><stop offset="1" stop-color="#cfcfd4"/></linearGradient></defs>
<rect x="0" y="0" width="13" height="15" fill="url(#bg)"/>
<rect x="12.7" y="0.0" width="1.6" height="16.0" fill="#101010" />
<rect x="0.0" y="14.3" width="14.3" height="1.3" fill="#101010" />
<polygon points="1.9,4.3 9.3,4.3 5.6,8.5" fill="#000" shape-rendering="auto"/>
<rect x="18.5" y="0.0" width="77.5" height="15.0" fill="#fff" />
<line x1="18.0" y1="0" x2="18.0" y2="15" stroke="#9a9aa0" stroke-width="1" />
<line x1="18.5" y1="15.5" x2="97" y2="15.5" stroke="#f0f0f3" stroke-width="1" />
<line x1="96.5" y1="0" x2="96.5" y2="15" stroke="#ececf0" stroke-width="1" />
<rect x="80.5" y="0.0" width="15.0" height="14.0" fill="#f0f0f0" />
<line x1="80.5" y1="14.5" x2="95.5" y2="14.5" stroke="#b4b4b8" stroke-width="1" />
<line x1="95" y1="0" x2="95" y2="14" stroke="#d0d0d4" stroke-width="1" />
<polygon points="83.6,4.7 91.0,4.7 87.3,8.9" fill="#000" shape-rendering="auto"/>
<text x="21.5" y="11.7" font-size="13" letter-spacing="-1" fill="#000" class="cj">先物</text>
<rect x="99.0" y="0.0" width="113.0" height="15.0" fill="#fff" />
<line x1="98.5" y1="0" x2="98.5" y2="15" stroke="#9a9aa0" stroke-width="1" />
<line x1="99" y1="15.5" x2="213" y2="15.5" stroke="#f0f0f3" stroke-width="1" />
<line x1="212.5" y1="0" x2="212.5" y2="15" stroke="#ececf0" stroke-width="1" />
<rect x="196.5" y="0.0" width="15.0" height="14.0" fill="#f0f0f0" />
<line x1="196.5" y1="14.5" x2="211.5" y2="14.5" stroke="#b4b4b8" stroke-width="1" />
<line x1="211" y1="0" x2="211" y2="14" stroke="#d0d0d4" stroke-width="1" />
<polygon points="199.6,4.7 207.0,4.7 203.3,8.9" fill="#000" shape-rendering="auto"/>
<text x="101.5" y="11.7" font-size="13" letter-spacing="-1" fill="#000" class="cj">日経</text>
<text x="125.5" y="11.5" font-size="12.5" textLength="44.5" lengthAdjust="spacingAndGlyphs" fill="#000" class="ls">225mini</text>
<rect x="215.8" y="0.0" width="85.5" height="15.0" fill="#fff" />
<line x1="215.3" y1="0" x2="215.3" y2="15" stroke="#9a9aa0" stroke-width="1" />
<line x1="215.8" y1="15.5" x2="302.3" y2="15.5" stroke="#f0f0f3" stroke-width="1" />
<line x1="301.8" y1="0" x2="301.8" y2="15" stroke="#ececf0" stroke-width="1" />
<rect x="285.8" y="0.0" width="15.0" height="14.0" fill="#f0f0f0" />
<line x1="285.8" y1="14.5" x2="300.8" y2="14.5" stroke="#b4b4b8" stroke-width="1" />
<line x1="300.3" y1="0" x2="300.3" y2="14" stroke="#d0d0d4" stroke-width="1" />
<polygon points="288.9,4.7 296.3,4.7 292.6,8.9" fill="#000" shape-rendering="auto"/>
<text x="220.8" y="11.5" font-size="12" textLength="27" lengthAdjust="spacingAndGlyphs" fill="#000" class="ls">12/12</text>
<rect x="308.0" y="0.0" width="20.0" height="15.0" fill="#dbe4f3" />
<line x1="308" y1="15.5" x2="328" y2="15.5" stroke="#b9cbe6" stroke-width="1" />
<text x="311.5" y="11.7" font-size="13" letter-spacing="-1" fill="#000" class="cj">足</text>
<rect x="330.0" y="0.0" width="23.0" height="14.0" fill="#d6d6dc" />
<line x1="330" y1="14.5" x2="366" y2="14.5" stroke="#fafafa" stroke-width="1" />
<text x="347.0" y="11.5" font-size="12" textLength="3.5" lengthAdjust="spacingAndGlyphs" fill="#8c8c92" class="ls">1</text>
<rect x="353.0" y="0.0" width="12.5" height="14.0" fill="#efefef" />
<line x1="353" y1="13.5" x2="366" y2="13.5" stroke="#55555a" stroke-width="1" />
<line x1="365.5" y1="0" x2="365.5" y2="14" stroke="#55555a" stroke-width="1" />
<line x1="353.5" y1="0" x2="353.5" y2="13" stroke="#fdfdfd" stroke-width="1" />
<line x1="354" y1="13" x2="365" y2="1" stroke="#303030" stroke-width="1" shape-rendering="auto"/>
<polygon points="354.6,4 358.2,4 356.4,1.6" fill="#000" shape-rendering="auto"/>
<rect x="370.5" y="0" width="17.0" height="14" fill="url(#bg)"/>
<line x1="387.0" y1="0" x2="387.0" y2="13" stroke="#77777c" stroke-width="1" />
<line x1="371.5" y1="13.5" x2="386.5" y2="13.5" stroke="#77777c" stroke-width="1" />
<line x1="371.0" y1="0" x2="371.0" y2="13" stroke="#f4f4f6" stroke-width="1" />
<text x="372.3" y="11.7" font-size="13" letter-spacing="-1" fill="#000" class="cj">日</text>
<rect x="390.5" y="0" width="17.0" height="14" fill="url(#bg)"/>
<line x1="407.0" y1="0" x2="407.0" y2="13" stroke="#77777c" stroke-width="1" />
<line x1="391.5" y1="13.5" x2="406.5" y2="13.5" stroke="#77777c" stroke-width="1" />
<line x1="391.0" y1="0" x2="391.0" y2="13" stroke="#f4f4f6" stroke-width="1" />
<text x="392.5" y="11.7" font-size="13" letter-spacing="-1" fill="#000" class="cj">週</text>
<rect x="410" y="0" width="17" height="14" fill="url(#bg)"/>
<line x1="426.5" y1="0" x2="426.5" y2="13" stroke="#77777c" stroke-width="1" />
<line x1="411" y1="13.5" x2="426" y2="13.5" stroke="#77777c" stroke-width="1" />
<line x1="410.5" y1="0" x2="410.5" y2="13" stroke="#f4f4f6" stroke-width="1" />
<text x="412.2" y="11.7" font-size="13" letter-spacing="-1" fill="#000" class="cj">月</text>
<rect x="429.0" y="0.0" width="18.0" height="14.0" fill="#bebec4" />
<line x1="429.5" y1="0" x2="429.5" y2="14" stroke="#8a8a90" stroke-width="1" />
<line x1="429" y1="13.5" x2="447" y2="13.5" stroke="#e8e8ec" stroke-width="1" />
<text x="431.7" y="11.7" font-size="13" letter-spacing="-1" fill="#000" class="cj">分</text>
<rect x="450.3" y="0" width="17.19999999999999" height="14" fill="url(#bg)"/>
<line x1="467.0" y1="0" x2="467.0" y2="13" stroke="#77777c" stroke-width="1" />
<line x1="451.3" y1="13.5" x2="466.5" y2="13.5" stroke="#77777c" stroke-width="1" />
<line x1="450.8" y1="0" x2="450.8" y2="13" stroke="#f4f4f6" stroke-width="1" />
<text x="455.5" y="11.7" font-size="13" letter-spacing="-1" fill="#000" class="cj">T</text>
<rect x="478.0" y="0.0" width="20.0" height="15.0" fill="#dbe4f3" />
<line x1="478" y1="15.5" x2="498" y2="15.5" stroke="#b9cbe6" stroke-width="1" />
<text x="481.5" y="11.7" font-size="13" letter-spacing="-1" fill="#000" class="cj">分</text>
<rect x="499.5" y="0.0" width="24.0" height="15.0" fill="#fff" />
<line x1="499" y1="0" x2="499" y2="15" stroke="#a8a8ae" stroke-width="1" />
<text x="515.6" y="11.5" font-size="12" textLength="5.4" lengthAdjust="spacingAndGlyphs" fill="#000" class="ls">5</text>
<rect x="523.5" y="0.0" width="12.5" height="14.0" fill="#efefef" />
<line x1="523.5" y1="13.5" x2="536.5" y2="13.5" stroke="#55555a" stroke-width="1" />
<line x1="536.0" y1="0" x2="536.0" y2="14" stroke="#55555a" stroke-width="1" />
<line x1="524.0" y1="0" x2="524.0" y2="13" stroke="#fdfdfd" stroke-width="1" />
<line x1="524.5" y1="13" x2="535.5" y2="1" stroke="#303030" stroke-width="1" shape-rendering="auto"/>
<polygon points="525.1,4 528.7,4 526.9,1.6" fill="#000" shape-rendering="auto"/>
<rect x="539.0" y="0.0" width="29.0" height="15.0" fill="#dbe4f3" />
<line x1="539" y1="15.5" x2="568" y2="15.5" stroke="#b9cbe6" stroke-width="1" />
<text x="541.3" y="11.7" font-size="13" letter-spacing="-1" fill="#000" class="cj">本数</text>
<rect x="570.0" y="0.0" width="33.0" height="15.0" fill="#fff" />
<line x1="569.5" y1="0" x2="569.5" y2="15" stroke="#a8a8ae" stroke-width="1" />
<text x="584.0" y="11.5" font-size="12" textLength="17" lengthAdjust="spacingAndGlyphs" fill="#000" class="ls">500</text>
<rect x="603.2" y="0.0" width="12.5" height="14.0" fill="#efefef" />
<line x1="603.2" y1="13.5" x2="616.2" y2="13.5" stroke="#55555a" stroke-width="1" />
<line x1="615.7" y1="0" x2="615.7" y2="14" stroke="#55555a" stroke-width="1" />
<line x1="603.7" y1="0" x2="603.7" y2="13" stroke="#fdfdfd" stroke-width="1" />
<line x1="604.2" y1="13" x2="615.2" y2="1" stroke="#303030" stroke-width="1" shape-rendering="auto"/>
<polygon points="604.8000000000001,4 608.4000000000001,4 606.6,1.6" fill="#000" shape-rendering="auto"/>
<rect x="621" y="0" width="31.299999999999955" height="14" fill="url(#bg)"/>
<line x1="651.8" y1="0" x2="651.8" y2="13" stroke="#77777c" stroke-width="1" />
<line x1="622" y1="13.5" x2="651.3" y2="13.5" stroke="#77777c" stroke-width="1" />
<line x1="621.5" y1="0" x2="621.5" y2="13" stroke="#f4f4f6" stroke-width="1" />
<text x="624.3" y="11.7" font-size="13" letter-spacing="-1" fill="#000" class="cj">適用</text>
<rect x="675.5" y="0" width="57.5" height="14" fill="url(#bg)"/>
<line x1="732.5" y1="0" x2="732.5" y2="13" stroke="#77777c" stroke-width="1" />
<line x1="676.5" y1="13.5" x2="732" y2="13.5" stroke="#77777c" stroke-width="1" />
<line x1="676.0" y1="0" x2="676.0" y2="13" stroke="#f4f4f6" stroke-width="1" />
<text x="679.3" y="11.7" font-size="13" letter-spacing="-1" fill="#000" class="cj">複数銘柄</text>
</svg>
</body></html>
